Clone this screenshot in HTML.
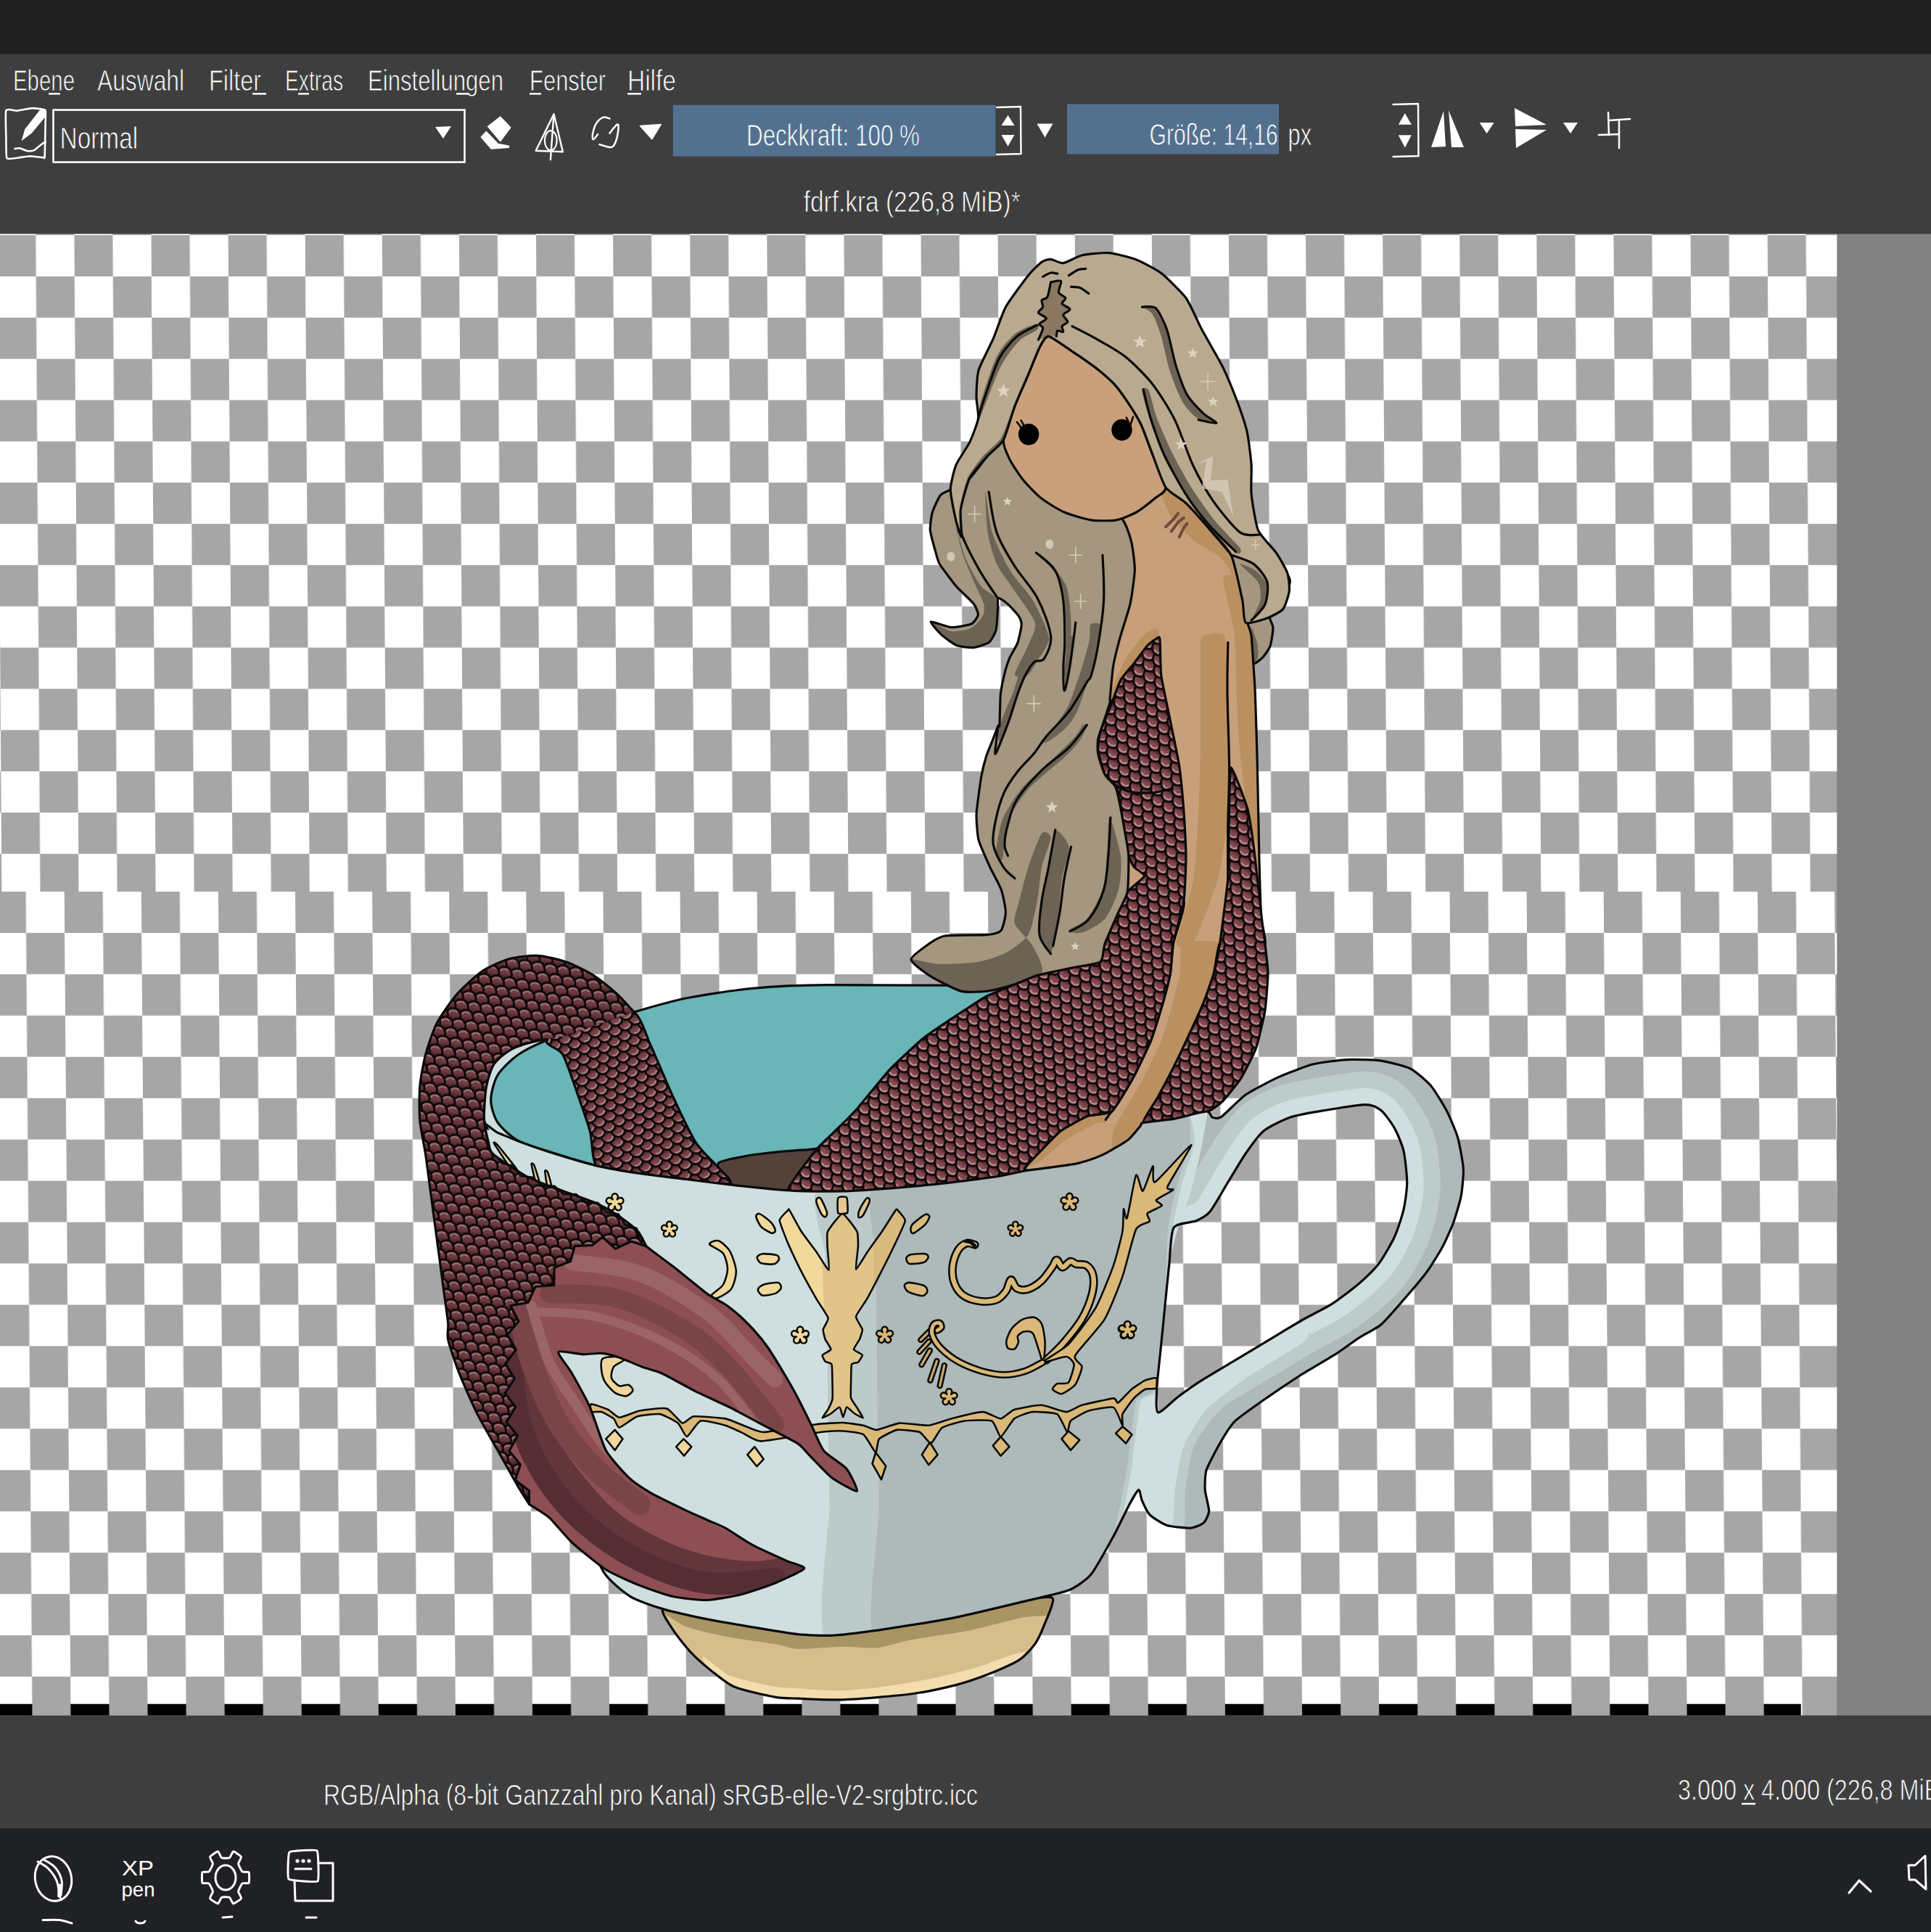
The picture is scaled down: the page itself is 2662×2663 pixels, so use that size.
<!DOCTYPE html>
<html><head><meta charset="utf-8"><title>Krita</title>
<style>html,body{margin:0;padding:0;background:#3e3e3e;overflow:hidden}body{width:2662px;height:2663px;font-family:"Liberation Sans", sans-serif}</style></head>
<body>
<svg width="2662" height="2663" viewBox="0 0 2662 2663" font-family='"Liberation Sans", sans-serif' style="display:block">
<defs>
<pattern id="ckA" patternUnits="userSpaceOnUse" width="106.1" height="113.7" patternTransform="matrix(1 0 0.0068 1 -3.7 324.1)">
<rect width="106.1" height="113.7" fill="#fff"/>
<rect width="53" height="56.9" fill="#a6a6a6"/>
<rect x="53" y="56.9" width="53" height="56.9" fill="#a6a6a6"/>
</pattern>
<pattern id="ckB" patternUnits="userSpaceOnUse" width="106.1" height="113.9" patternTransform="matrix(1 0 0.0078 1 88.7 1229)">
<rect width="106.1" height="113.9" fill="#fff"/>
<rect width="53" height="56.9" fill="#a6a6a6"/>
<rect x="53" y="56.9" width="53" height="56.9" fill="#a6a6a6"/>
</pattern>
<pattern id="ckC" patternUnits="userSpaceOnUse" width="106.1" height="113.9" patternTransform="matrix(1 0 0.0078 1 88.7 1229)">
<rect width="106.1" height="113.9" fill="#000"/>
<rect width="53" height="56.9" fill="#a6a6a6"/>
<rect x="53" y="56.9" width="53" height="56.9" fill="#a6a6a6"/>
</pattern>
</defs>
<defs>
<linearGradient id="scg" x1="0" y1="0" x2="0" y2="1"><stop offset="0" stop-color="#52292e"/><stop offset="0.38" stop-color="#613338"/><stop offset="0.58" stop-color="#8a4b51"/><stop offset="1" stop-color="#91525a"/></linearGradient>
<pattern id="sc0" patternUnits="userSpaceOnUse" width="13.6" height="20.4" patternTransform="rotate(30) scale(1.27)">
<rect width="13.6" height="20.4" fill="#4a2a2e"/>
<circle cx="-6.8" cy="30.6" r="8" fill="url(#scg)" stroke="#0b0506" stroke-width="2.3"/>
<path d="M-1.4 32.4 A5.7 5.7 0 0 1 -10.1 35.3" fill="none" stroke="#c4a0a0" stroke-width="1.7" stroke-linecap="round"/>
<circle cx="6.8" cy="30.6" r="8" fill="url(#scg)" stroke="#0b0506" stroke-width="2.3"/>
<path d="M12.2 32.4 A5.7 5.7 0 0 1 3.5 35.3" fill="none" stroke="#c4a0a0" stroke-width="1.7" stroke-linecap="round"/>
<circle cx="20.4" cy="30.6" r="8" fill="url(#scg)" stroke="#0b0506" stroke-width="2.3"/>
<path d="M25.8 32.4 A5.7 5.7 0 0 1 17.1 35.3" fill="none" stroke="#c4a0a0" stroke-width="1.7" stroke-linecap="round"/>
<circle cx="0" cy="20.4" r="8" fill="url(#scg)" stroke="#0b0506" stroke-width="2.3"/>
<path d="M5.4 22.2 A5.7 5.7 0 0 1 -3.3 25.1" fill="none" stroke="#c4a0a0" stroke-width="1.7" stroke-linecap="round"/>
<circle cx="13.6" cy="20.4" r="8" fill="url(#scg)" stroke="#0b0506" stroke-width="2.3"/>
<path d="M19 22.2 A5.7 5.7 0 0 1 10.3 25.1" fill="none" stroke="#c4a0a0" stroke-width="1.7" stroke-linecap="round"/>
<circle cx="-6.8" cy="10.2" r="8" fill="url(#scg)" stroke="#0b0506" stroke-width="2.3"/>
<path d="M-1.4 12 A5.7 5.7 0 0 1 -10.1 14.9" fill="none" stroke="#c4a0a0" stroke-width="1.7" stroke-linecap="round"/>
<circle cx="6.8" cy="10.2" r="8" fill="url(#scg)" stroke="#0b0506" stroke-width="2.3"/>
<path d="M12.2 12 A5.7 5.7 0 0 1 3.5 14.9" fill="none" stroke="#c4a0a0" stroke-width="1.7" stroke-linecap="round"/>
<circle cx="20.4" cy="10.2" r="8" fill="url(#scg)" stroke="#0b0506" stroke-width="2.3"/>
<path d="M25.8 12 A5.7 5.7 0 0 1 17.1 14.9" fill="none" stroke="#c4a0a0" stroke-width="1.7" stroke-linecap="round"/>
<circle cx="0" cy="0" r="8" fill="url(#scg)" stroke="#0b0506" stroke-width="2.3"/>
<path d="M5.4 1.8 A5.7 5.7 0 0 1 -3.3 4.7" fill="none" stroke="#c4a0a0" stroke-width="1.7" stroke-linecap="round"/>
<circle cx="13.6" cy="0" r="8" fill="url(#scg)" stroke="#0b0506" stroke-width="2.3"/>
<path d="M19 1.8 A5.7 5.7 0 0 1 10.3 4.7" fill="none" stroke="#c4a0a0" stroke-width="1.7" stroke-linecap="round"/>
<circle cx="-6.8" cy="-10.2" r="8" fill="url(#scg)" stroke="#0b0506" stroke-width="2.3"/>
<path d="M-1.4 -8.4 A5.7 5.7 0 0 1 -10.1 -5.5" fill="none" stroke="#c4a0a0" stroke-width="1.7" stroke-linecap="round"/>
<circle cx="6.8" cy="-10.2" r="8" fill="url(#scg)" stroke="#0b0506" stroke-width="2.3"/>
<path d="M12.2 -8.4 A5.7 5.7 0 0 1 3.5 -5.5" fill="none" stroke="#c4a0a0" stroke-width="1.7" stroke-linecap="round"/>
<circle cx="20.4" cy="-10.2" r="8" fill="url(#scg)" stroke="#0b0506" stroke-width="2.3"/>
<path d="M25.8 -8.4 A5.7 5.7 0 0 1 17.1 -5.5" fill="none" stroke="#c4a0a0" stroke-width="1.7" stroke-linecap="round"/>
<rect width="13.6" height="20.4" fill="#200c10" opacity="0.08"/>
</pattern>
<pattern id="sc1" patternUnits="userSpaceOnUse" width="13.6" height="20.4" patternTransform="rotate(-30) scale(1.2)">
<rect width="13.6" height="20.4" fill="#4a2a2e"/>
<circle cx="-6.8" cy="30.6" r="8" fill="url(#scg)" stroke="#0b0506" stroke-width="2.3"/>
<path d="M-1.4 32.4 A5.7 5.7 0 0 1 -10.1 35.3" fill="none" stroke="#c4a0a0" stroke-width="1.7" stroke-linecap="round"/>
<circle cx="6.8" cy="30.6" r="8" fill="url(#scg)" stroke="#0b0506" stroke-width="2.3"/>
<path d="M12.2 32.4 A5.7 5.7 0 0 1 3.5 35.3" fill="none" stroke="#c4a0a0" stroke-width="1.7" stroke-linecap="round"/>
<circle cx="20.4" cy="30.6" r="8" fill="url(#scg)" stroke="#0b0506" stroke-width="2.3"/>
<path d="M25.8 32.4 A5.7 5.7 0 0 1 17.1 35.3" fill="none" stroke="#c4a0a0" stroke-width="1.7" stroke-linecap="round"/>
<circle cx="0" cy="20.4" r="8" fill="url(#scg)" stroke="#0b0506" stroke-width="2.3"/>
<path d="M5.4 22.2 A5.7 5.7 0 0 1 -3.3 25.1" fill="none" stroke="#c4a0a0" stroke-width="1.7" stroke-linecap="round"/>
<circle cx="13.6" cy="20.4" r="8" fill="url(#scg)" stroke="#0b0506" stroke-width="2.3"/>
<path d="M19 22.2 A5.7 5.7 0 0 1 10.3 25.1" fill="none" stroke="#c4a0a0" stroke-width="1.7" stroke-linecap="round"/>
<circle cx="-6.8" cy="10.2" r="8" fill="url(#scg)" stroke="#0b0506" stroke-width="2.3"/>
<path d="M-1.4 12 A5.7 5.7 0 0 1 -10.1 14.9" fill="none" stroke="#c4a0a0" stroke-width="1.7" stroke-linecap="round"/>
<circle cx="6.8" cy="10.2" r="8" fill="url(#scg)" stroke="#0b0506" stroke-width="2.3"/>
<path d="M12.2 12 A5.7 5.7 0 0 1 3.5 14.9" fill="none" stroke="#c4a0a0" stroke-width="1.7" stroke-linecap="round"/>
<circle cx="20.4" cy="10.2" r="8" fill="url(#scg)" stroke="#0b0506" stroke-width="2.3"/>
<path d="M25.8 12 A5.7 5.7 0 0 1 17.1 14.9" fill="none" stroke="#c4a0a0" stroke-width="1.7" stroke-linecap="round"/>
<circle cx="0" cy="0" r="8" fill="url(#scg)" stroke="#0b0506" stroke-width="2.3"/>
<path d="M5.4 1.8 A5.7 5.7 0 0 1 -3.3 4.7" fill="none" stroke="#c4a0a0" stroke-width="1.7" stroke-linecap="round"/>
<circle cx="13.6" cy="0" r="8" fill="url(#scg)" stroke="#0b0506" stroke-width="2.3"/>
<path d="M19 1.8 A5.7 5.7 0 0 1 10.3 4.7" fill="none" stroke="#c4a0a0" stroke-width="1.7" stroke-linecap="round"/>
<circle cx="-6.8" cy="-10.2" r="8" fill="url(#scg)" stroke="#0b0506" stroke-width="2.3"/>
<path d="M-1.4 -8.4 A5.7 5.7 0 0 1 -10.1 -5.5" fill="none" stroke="#c4a0a0" stroke-width="1.7" stroke-linecap="round"/>
<circle cx="6.8" cy="-10.2" r="8" fill="url(#scg)" stroke="#0b0506" stroke-width="2.3"/>
<path d="M12.2 -8.4 A5.7 5.7 0 0 1 3.5 -5.5" fill="none" stroke="#c4a0a0" stroke-width="1.7" stroke-linecap="round"/>
<circle cx="20.4" cy="-10.2" r="8" fill="url(#scg)" stroke="#0b0506" stroke-width="2.3"/>
<path d="M25.8 -8.4 A5.7 5.7 0 0 1 17.1 -5.5" fill="none" stroke="#c4a0a0" stroke-width="1.7" stroke-linecap="round"/>
<rect width="13.6" height="20.4" fill="#200c10" opacity="0.14"/>
</pattern>
<pattern id="sc2" patternUnits="userSpaceOnUse" width="13.6" height="20.4" patternTransform="rotate(50) scale(1.0)">
<rect width="13.6" height="20.4" fill="#4a2a2e"/>
<circle cx="-6.8" cy="30.6" r="8" fill="url(#scg)" stroke="#0b0506" stroke-width="2.3"/>
<path d="M-1.4 32.4 A5.7 5.7 0 0 1 -10.1 35.3" fill="none" stroke="#c4a0a0" stroke-width="1.7" stroke-linecap="round"/>
<circle cx="6.8" cy="30.6" r="8" fill="url(#scg)" stroke="#0b0506" stroke-width="2.3"/>
<path d="M12.2 32.4 A5.7 5.7 0 0 1 3.5 35.3" fill="none" stroke="#c4a0a0" stroke-width="1.7" stroke-linecap="round"/>
<circle cx="20.4" cy="30.6" r="8" fill="url(#scg)" stroke="#0b0506" stroke-width="2.3"/>
<path d="M25.8 32.4 A5.7 5.7 0 0 1 17.1 35.3" fill="none" stroke="#c4a0a0" stroke-width="1.7" stroke-linecap="round"/>
<circle cx="0" cy="20.4" r="8" fill="url(#scg)" stroke="#0b0506" stroke-width="2.3"/>
<path d="M5.4 22.2 A5.7 5.7 0 0 1 -3.3 25.1" fill="none" stroke="#c4a0a0" stroke-width="1.7" stroke-linecap="round"/>
<circle cx="13.6" cy="20.4" r="8" fill="url(#scg)" stroke="#0b0506" stroke-width="2.3"/>
<path d="M19 22.2 A5.7 5.7 0 0 1 10.3 25.1" fill="none" stroke="#c4a0a0" stroke-width="1.7" stroke-linecap="round"/>
<circle cx="-6.8" cy="10.2" r="8" fill="url(#scg)" stroke="#0b0506" stroke-width="2.3"/>
<path d="M-1.4 12 A5.7 5.7 0 0 1 -10.1 14.9" fill="none" stroke="#c4a0a0" stroke-width="1.7" stroke-linecap="round"/>
<circle cx="6.8" cy="10.2" r="8" fill="url(#scg)" stroke="#0b0506" stroke-width="2.3"/>
<path d="M12.2 12 A5.7 5.7 0 0 1 3.5 14.9" fill="none" stroke="#c4a0a0" stroke-width="1.7" stroke-linecap="round"/>
<circle cx="20.4" cy="10.2" r="8" fill="url(#scg)" stroke="#0b0506" stroke-width="2.3"/>
<path d="M25.8 12 A5.7 5.7 0 0 1 17.1 14.9" fill="none" stroke="#c4a0a0" stroke-width="1.7" stroke-linecap="round"/>
<circle cx="0" cy="0" r="8" fill="url(#scg)" stroke="#0b0506" stroke-width="2.3"/>
<path d="M5.4 1.8 A5.7 5.7 0 0 1 -3.3 4.7" fill="none" stroke="#c4a0a0" stroke-width="1.7" stroke-linecap="round"/>
<circle cx="13.6" cy="0" r="8" fill="url(#scg)" stroke="#0b0506" stroke-width="2.3"/>
<path d="M19 1.8 A5.7 5.7 0 0 1 10.3 4.7" fill="none" stroke="#c4a0a0" stroke-width="1.7" stroke-linecap="round"/>
<circle cx="-6.8" cy="-10.2" r="8" fill="url(#scg)" stroke="#0b0506" stroke-width="2.3"/>
<path d="M-1.4 -8.4 A5.7 5.7 0 0 1 -10.1 -5.5" fill="none" stroke="#c4a0a0" stroke-width="1.7" stroke-linecap="round"/>
<circle cx="6.8" cy="-10.2" r="8" fill="url(#scg)" stroke="#0b0506" stroke-width="2.3"/>
<path d="M12.2 -8.4 A5.7 5.7 0 0 1 3.5 -5.5" fill="none" stroke="#c4a0a0" stroke-width="1.7" stroke-linecap="round"/>
<circle cx="20.4" cy="-10.2" r="8" fill="url(#scg)" stroke="#0b0506" stroke-width="2.3"/>
<path d="M25.8 -8.4 A5.7 5.7 0 0 1 17.1 -5.5" fill="none" stroke="#c4a0a0" stroke-width="1.7" stroke-linecap="round"/>
</pattern>
<pattern id="sc3" patternUnits="userSpaceOnUse" width="13.6" height="20.4" patternTransform="rotate(188) scale(1.3)">
<rect width="13.6" height="20.4" fill="#4a2a2e"/>
<circle cx="-6.8" cy="30.6" r="8" fill="url(#scg)" stroke="#0b0506" stroke-width="2.3"/>
<path d="M-1.4 32.4 A5.7 5.7 0 0 1 -10.1 35.3" fill="none" stroke="#c4a0a0" stroke-width="1.7" stroke-linecap="round"/>
<circle cx="6.8" cy="30.6" r="8" fill="url(#scg)" stroke="#0b0506" stroke-width="2.3"/>
<path d="M12.2 32.4 A5.7 5.7 0 0 1 3.5 35.3" fill="none" stroke="#c4a0a0" stroke-width="1.7" stroke-linecap="round"/>
<circle cx="20.4" cy="30.6" r="8" fill="url(#scg)" stroke="#0b0506" stroke-width="2.3"/>
<path d="M25.8 32.4 A5.7 5.7 0 0 1 17.1 35.3" fill="none" stroke="#c4a0a0" stroke-width="1.7" stroke-linecap="round"/>
<circle cx="0" cy="20.4" r="8" fill="url(#scg)" stroke="#0b0506" stroke-width="2.3"/>
<path d="M5.4 22.2 A5.7 5.7 0 0 1 -3.3 25.1" fill="none" stroke="#c4a0a0" stroke-width="1.7" stroke-linecap="round"/>
<circle cx="13.6" cy="20.4" r="8" fill="url(#scg)" stroke="#0b0506" stroke-width="2.3"/>
<path d="M19 22.2 A5.7 5.7 0 0 1 10.3 25.1" fill="none" stroke="#c4a0a0" stroke-width="1.7" stroke-linecap="round"/>
<circle cx="-6.8" cy="10.2" r="8" fill="url(#scg)" stroke="#0b0506" stroke-width="2.3"/>
<path d="M-1.4 12 A5.7 5.7 0 0 1 -10.1 14.9" fill="none" stroke="#c4a0a0" stroke-width="1.7" stroke-linecap="round"/>
<circle cx="6.8" cy="10.2" r="8" fill="url(#scg)" stroke="#0b0506" stroke-width="2.3"/>
<path d="M12.2 12 A5.7 5.7 0 0 1 3.5 14.9" fill="none" stroke="#c4a0a0" stroke-width="1.7" stroke-linecap="round"/>
<circle cx="20.4" cy="10.2" r="8" fill="url(#scg)" stroke="#0b0506" stroke-width="2.3"/>
<path d="M25.8 12 A5.7 5.7 0 0 1 17.1 14.9" fill="none" stroke="#c4a0a0" stroke-width="1.7" stroke-linecap="round"/>
<circle cx="0" cy="0" r="8" fill="url(#scg)" stroke="#0b0506" stroke-width="2.3"/>
<path d="M5.4 1.8 A5.7 5.7 0 0 1 -3.3 4.7" fill="none" stroke="#c4a0a0" stroke-width="1.7" stroke-linecap="round"/>
<circle cx="13.6" cy="0" r="8" fill="url(#scg)" stroke="#0b0506" stroke-width="2.3"/>
<path d="M19 1.8 A5.7 5.7 0 0 1 10.3 4.7" fill="none" stroke="#c4a0a0" stroke-width="1.7" stroke-linecap="round"/>
<circle cx="-6.8" cy="-10.2" r="8" fill="url(#scg)" stroke="#0b0506" stroke-width="2.3"/>
<path d="M-1.4 -8.4 A5.7 5.7 0 0 1 -10.1 -5.5" fill="none" stroke="#c4a0a0" stroke-width="1.7" stroke-linecap="round"/>
<circle cx="6.8" cy="-10.2" r="8" fill="url(#scg)" stroke="#0b0506" stroke-width="2.3"/>
<path d="M12.2 -8.4 A5.7 5.7 0 0 1 3.5 -5.5" fill="none" stroke="#c4a0a0" stroke-width="1.7" stroke-linecap="round"/>
<circle cx="20.4" cy="-10.2" r="8" fill="url(#scg)" stroke="#0b0506" stroke-width="2.3"/>
<path d="M25.8 -8.4 A5.7 5.7 0 0 1 17.1 -5.5" fill="none" stroke="#c4a0a0" stroke-width="1.7" stroke-linecap="round"/>
<rect width="13.6" height="20.4" fill="#200c10" opacity="0.28"/>
</pattern>
</defs>
<rect width="2662" height="2663" fill="#3e3e3e"/>
<rect width="2662" height="74.5" fill="#202020"/>
<rect x="0" y="322.4" width="2532.7" height="906.6" fill="url(#ckA)"/>
<rect x="0" y="1229" width="2532.7" height="1135.7" fill="url(#ckB)"/>
<rect x="0" y="2348.7" width="2482.7" height="16" fill="url(#ckC)"/>
<rect x="2532.7" y="322.4" width="129.3" height="2042.3" fill="#828282"/>
<path d="M738.9 1434.4 C725.2 1438.6 709.9 1442.7 701.6 1447.8 C693.3 1452.9 681.5 1464.4 676.7 1472.6 C672 1480.9 667.1 1500.4 665.8 1509.9 C664.6 1519.5 665.7 1536.2 667.4 1544.1 C669.1 1552 672.1 1563.2 678.3 1569 C684.5 1574.8 701 1583.1 714 1587.6 C727.1 1592.2 753.8 1598.6 776.1 1603.1 C798.5 1607.7 851.1 1617.2 881.8 1621.8 C912.4 1626.3 971.7 1634 1006.1 1637.3 C1040.5 1640.6 1115 1645.7 1140 1646.6 C1165 1647.6 1173.7 1646 1193.2 1644.7 C1212.7 1643.4 1261.6 1639.6 1286.4 1636.9 C1311.3 1634.2 1358.9 1627.6 1379.6 1624.5 C1400.4 1621.4 1425.2 1616.5 1441.8 1613.6 C1458.4 1610.7 1487.4 1608.3 1503.9 1602.7 C1520.5 1597.1 1555.3 1579.2 1566.1 1571.7 C1576.9 1564.1 1573.5 1560.9 1584.7 1545.9 C1596 1530.9 1652.1 1483.3 1650.5 1459.3 C1649 1435.3 1595.6 1379.3 1572.9 1366.1 C1550.1 1352.8 1504.5 1360.7 1479.6 1359.9 C1454.8 1359 1431.7 1360.2 1386.4 1359.9 C1341.1 1359.6 1186.6 1357.3 1140 1357.7 C1093.4 1358 1063.3 1359.9 1037.2 1362.3 C1011 1364.8 965.7 1372 943.9 1376.3 C922.2 1380.7 892.7 1389.6 874 1395 C855.4 1400.4 822.1 1411.5 804.1 1416.7 C786.1 1422 752.5 1430.3 738.9 1434.4 Z" fill="#cfdfdf"/>
<path d="M804.1 1416.7 C795.4 1419.1 752.5 1430.3 738.9 1434.4 C725.2 1438.6 709.9 1442.7 701.6 1447.8 C693.3 1452.9 681.5 1464.4 676.7 1472.6 C672 1480.9 667.1 1500.4 665.8 1509.9 C664.6 1519.5 665.7 1536.2 667.4 1544.1 C669.1 1552 676.8 1565.7 678.3 1569" fill="none" stroke="#0a0a0a" stroke-width="3.2" stroke-linejoin="round" stroke-linecap="round"/>
<path d="M757.5 1432.3 C744.2 1437.6 723.5 1447.4 714 1454 C704.5 1460.6 691 1473.7 686 1482 C681.1 1490.3 676.7 1507.4 676.7 1516.1 C676.7 1524.8 681.1 1539.8 686 1547.2 C691 1554.7 704.5 1566.7 714 1572.1 C723.5 1577.5 743.2 1583.1 757.5 1587.6 C771.8 1592.2 804.6 1602.3 821.2 1606.3 C837.8 1610.2 865.4 1614.6 881.8 1617.1 C898.2 1619.6 927.4 1622.8 943.9 1624.9 C960.5 1627 987.4 1630.6 1006.1 1632.7 C1024.7 1634.7 1065.9 1639.2 1083.8 1640.4 C1101.7 1641.7 1125.8 1641.9 1140.4 1641.9 C1155 1641.8 1173.7 1641.3 1193.2 1640 C1212.7 1638.7 1261.6 1634.9 1286.4 1632.3 C1311.3 1629.6 1358.9 1623.1 1379.6 1619.8 C1400.4 1616.5 1407.7 1632.9 1441.8 1607.4 C1475.8 1581.8 1621.7 1460.4 1635 1428.2 C1648.3 1396 1566.6 1375.2 1541.8 1366.1 C1516.9 1357 1502.1 1361 1448.6 1359.9 C1395 1358.7 1194.9 1357.3 1140 1357.7 C1085.1 1358 1063.3 1359.9 1037.2 1362.3 C1011 1364.8 965.7 1372 943.9 1376.3 C922.2 1380.7 891.4 1390 874 1395 C856.6 1399.9 829 1408.6 813.4 1413.6 C797.9 1418.6 770.8 1426.9 757.5 1432.3 Z" fill="#69b5b7" stroke="#0a0a0a" stroke-width="3.2" stroke-linejoin="round" stroke-linecap="round"/>
<path d="M990.1 1603.5 C992 1599.8 1017.8 1595.6 1024.3 1594.2 C1030.8 1592.8 1046.7 1590.5 1055.4 1589.5 C1064.1 1588.6 1103.2 1585.2 1111.3 1584.9 C1119.4 1584.6 1137.4 1580.4 1136.1 1586.4 C1134.9 1592.5 1111.9 1641 1098.9 1645.5 C1085.8 1650 1016.5 1635.7 1005.6 1631.5 C994.8 1627.3 988.2 1607.3 990.1 1603.5 Z" fill="#53413a" stroke="#0a0a0a" stroke-width="3.2" stroke-linejoin="round" stroke-linecap="round"/>
<path d="M754.4 1432.3 C748.6 1441.8 770.3 1443.2 776.1 1454 C781.9 1464.8 792.9 1499 797.9 1513 C802.9 1527.1 809.9 1546.8 813.4 1559.6 C817 1572.5 815.2 1601.5 824.3 1609.4 C833.4 1617.2 865.8 1616.4 881.8 1618.7 C897.7 1621 927.4 1624.8 943.9 1626.5 C960.5 1628.1 1000.3 1633.8 1006.1 1631.1 C1011.9 1628.4 993.7 1613.7 987.4 1606.3 C981.2 1598.8 967.3 1587.6 959.5 1575.2 C951.6 1562.8 936.7 1530.9 928.4 1513 C920.1 1495.2 904.6 1457.3 897.3 1441.6 C890.1 1425.8 884.4 1402.8 874 1395 C863.7 1387.1 835.6 1377.6 819.6 1382.5 C803.7 1387.5 760.2 1422.7 754.4 1432.3 Z" fill="url(#sc1)" stroke="#0a0a0a" stroke-width="3.2" stroke-linejoin="round" stroke-linecap="round"/>
<path d="M1714.8 800 C1713.8 807 1716.9 848.1 1717.4 854.3 C1717.9 860.6 1719.2 859.8 1720 862.1 C1720.8 864.4 1724.4 872.5 1725.2 877.6 C1725.9 882.8 1726.2 911 1727.7 913.9 C1729.3 916.7 1738.4 908.4 1740.7 906.1 C1743 903.8 1749.6 894.7 1751 890.6 C1752.5 886.4 1755.2 869.4 1754.9 864.7 C1754.7 860 1747 847.9 1748.4 844 C1749.9 840.1 1766.2 830.3 1769.2 825.9 C1772.1 821.5 1779.2 804.7 1778.2 800 C1777.2 795.3 1763.8 780.8 1758.8 779.3 C1753.8 777.7 1732.1 782.4 1727.7 784.5 C1723.3 786.5 1715.8 793 1714.8 800 Z" fill="#a4967f" stroke="#0a0a0a" stroke-width="3.2" stroke-linejoin="round" stroke-linecap="round"/>
<path d="M1748.4 844 C1753.4 841 1766.2 830.3 1769.2 825.9 C1772.1 821.5 1778.2 804.1 1778.2 800 C1778.2 795.9 1771.1 784.5 1769.2 784.5 C1767.2 784.5 1760.9 795.9 1758.8 800 C1756.7 804.1 1751 821.5 1748.4 825.9 C1745.9 830.3 1735.8 841 1732.9 844 C1730.1 847 1718.4 855.6 1720 855.6 C1721.5 855.6 1743.5 847 1748.4 844 Z" fill="#b9a98e" stroke="#0a0a0a" stroke-width="3.2" stroke-linejoin="round" stroke-linecap="round"/>
<path d="M1740.7 797.4 C1741.7 797.8 1746.8 806.2 1747.2 810.4 C1747.5 814.5 1745.2 824.2 1743.3 828.5 C1741.4 832.8 1733.3 843.4 1732.9 842.7 C1732.6 842 1739.8 828 1740.7 823.3 C1741.5 818.6 1739.4 811.2 1739.4 807.8 C1739.4 804.3 1739.6 797.1 1740.7 797.4 Z" fill="#6d6354"/>
<path d="M1725.2 864.7 C1724.5 865 1727.2 881.8 1727.7 888 C1728.3 894.2 1728.2 908.9 1729 911.3 C1729.9 913.7 1733.7 909.6 1734.2 906.1 C1734.7 902.7 1734.1 890.9 1732.9 885.4 C1731.7 879.9 1725.8 864.4 1725.2 864.7 Z" fill="#6d6354"/>
<clipPath id="cskin"><path d="M1541.8 715.3 C1540 718.4 1544.4 737.8 1544.9 743.3 C1545.4 748.7 1547.9 773.6 1548 780.5 C1548.1 787.5 1547.2 819.4 1546.5 827.2 C1545.7 834.9 1540.4 867 1538.7 873.8 C1537 880.5 1527.9 905.8 1526.3 907.9 C1524.6 910.1 1519.4 898.1 1518.5 900 C1517.6 901.9 1515.5 925.1 1515.4 931.1 C1515.3 937 1517.3 966.5 1516.9 971.5 C1516.5 976.4 1511.5 986.2 1510.7 990.1 C1509.9 994 1507.9 1013.9 1507.6 1018.1 C1507.4 1022.2 1506.8 1035.7 1507.6 1039.8 C1508.4 1044 1514.6 1062.9 1516.9 1067.8 C1519.3 1072.7 1532.7 1092.1 1535.6 1098.9 C1538.4 1105.6 1549.4 1141.8 1551.1 1148.6 C1552.8 1155.3 1555.5 1172.9 1555.8 1179.6 C1556 1186.4 1552.8 1224.7 1554.2 1229.4 C1555.6 1234 1566.4 1234.5 1572.9 1235.6 C1579.3 1236.6 1628.2 1236.4 1631.9 1241.8 C1635.6 1247.2 1619 1291.7 1617.5 1300 C1616 1308.3 1614.6 1334.5 1613.4 1341.4 C1612.2 1348.3 1605.2 1375.1 1603 1382.9 C1600.8 1390.6 1589.9 1426 1586.4 1434.6 C1583 1443.3 1566.1 1478.3 1561.6 1486.4 C1557.1 1494.5 1537.8 1527.7 1532.6 1532 C1527.4 1536.3 1505.3 1536 1499.4 1538.2 C1493.6 1540.5 1467.8 1554.6 1462.1 1558.9 C1456.4 1563.2 1435.2 1585.7 1431.1 1590 C1426.9 1594.3 1413.3 1608.2 1412.4 1610.7 C1411.6 1613.2 1414.8 1619.8 1420.7 1620 C1426.6 1620.3 1474.2 1615.6 1482.9 1613.8 C1491.5 1612.1 1518.2 1602.1 1524.3 1599.3 C1530.3 1596.6 1551 1584 1555.4 1580.7 C1559.7 1577.3 1574.2 1561.6 1576.1 1558.9 C1578 1556.3 1576.4 1552.5 1578.1 1548.6 C1579.9 1544.6 1593.5 1517.7 1596.8 1511.3 C1600.1 1504.9 1614.1 1478.8 1617.5 1471.9 C1621 1465 1634.8 1435.9 1638.2 1428.4 C1641.7 1421 1656 1390.1 1658.9 1382.9 C1661.9 1375.6 1671.5 1348.3 1673.4 1341.4 C1675.3 1334.5 1678.6 1303.1 1681.7 1300 C1684.8 1296.9 1705.5 1304.1 1710.7 1304.1 C1715.9 1304.1 1741.5 1303.2 1743.9 1300 C1746.2 1296.8 1739.3 1275.2 1738.6 1265.8 C1738 1256.5 1736.5 1205.5 1736 1188.2 C1735.6 1170.9 1733.9 1078.2 1733.4 1058.8 C1733 1039.4 1731 970.4 1730.3 955.3 C1729.6 940.2 1726 885.6 1725.2 877.6 C1724.3 869.7 1720.6 861.5 1720 859.5 C1719.3 857.6 1717.8 859.3 1717.4 854.3 C1717 849.4 1716.5 807.4 1714.8 800 C1713.1 792.6 1701.2 771 1697.2 765 C1693.1 759 1671.3 734.2 1666.1 727.7 C1660.9 721.2 1639.9 692 1635 687.3 C1630.1 682.7 1610.7 671.8 1607 671.8 C1603.4 671.8 1594.9 684.5 1591.5 687.3 C1588.1 690.2 1570.8 703.6 1566.6 706 C1562.5 708.3 1543.6 712.2 1541.8 715.3 Z"/></clipPath>
<path d="M1541.8 715.3 C1540 718.4 1544.4 737.8 1544.9 743.3 C1545.4 748.7 1547.9 773.6 1548 780.5 C1548.1 787.5 1547.2 819.4 1546.5 827.2 C1545.7 834.9 1540.4 867 1538.7 873.8 C1537 880.5 1527.9 905.8 1526.3 907.9 C1524.6 910.1 1519.4 898.1 1518.5 900 C1517.6 901.9 1515.5 925.1 1515.4 931.1 C1515.3 937 1517.3 966.5 1516.9 971.5 C1516.5 976.4 1511.5 986.2 1510.7 990.1 C1509.9 994 1507.9 1013.9 1507.6 1018.1 C1507.4 1022.2 1506.8 1035.7 1507.6 1039.8 C1508.4 1044 1514.6 1062.9 1516.9 1067.8 C1519.3 1072.7 1532.7 1092.1 1535.6 1098.9 C1538.4 1105.6 1549.4 1141.8 1551.1 1148.6 C1552.8 1155.3 1555.5 1172.9 1555.8 1179.6 C1556 1186.4 1552.8 1224.7 1554.2 1229.4 C1555.6 1234 1566.4 1234.5 1572.9 1235.6 C1579.3 1236.6 1628.2 1236.4 1631.9 1241.8 C1635.6 1247.2 1619 1291.7 1617.5 1300 C1616 1308.3 1614.6 1334.5 1613.4 1341.4 C1612.2 1348.3 1605.2 1375.1 1603 1382.9 C1600.8 1390.6 1589.9 1426 1586.4 1434.6 C1583 1443.3 1566.1 1478.3 1561.6 1486.4 C1557.1 1494.5 1537.8 1527.7 1532.6 1532 C1527.4 1536.3 1505.3 1536 1499.4 1538.2 C1493.6 1540.5 1467.8 1554.6 1462.1 1558.9 C1456.4 1563.2 1435.2 1585.7 1431.1 1590 C1426.9 1594.3 1413.3 1608.2 1412.4 1610.7 C1411.6 1613.2 1414.8 1619.8 1420.7 1620 C1426.6 1620.3 1474.2 1615.6 1482.9 1613.8 C1491.5 1612.1 1518.2 1602.1 1524.3 1599.3 C1530.3 1596.6 1551 1584 1555.4 1580.7 C1559.7 1577.3 1574.2 1561.6 1576.1 1558.9 C1578 1556.3 1576.4 1552.5 1578.1 1548.6 C1579.9 1544.6 1593.5 1517.7 1596.8 1511.3 C1600.1 1504.9 1614.1 1478.8 1617.5 1471.9 C1621 1465 1634.8 1435.9 1638.2 1428.4 C1641.7 1421 1656 1390.1 1658.9 1382.9 C1661.9 1375.6 1671.5 1348.3 1673.4 1341.4 C1675.3 1334.5 1678.6 1303.1 1681.7 1300 C1684.8 1296.9 1705.5 1304.1 1710.7 1304.1 C1715.9 1304.1 1741.5 1303.2 1743.9 1300 C1746.2 1296.8 1739.3 1275.2 1738.6 1265.8 C1738 1256.5 1736.5 1205.5 1736 1188.2 C1735.6 1170.9 1733.9 1078.2 1733.4 1058.8 C1733 1039.4 1731 970.4 1730.3 955.3 C1729.6 940.2 1726 885.6 1725.2 877.6 C1724.3 869.7 1720.6 861.5 1720 859.5 C1719.3 857.6 1717.8 859.3 1717.4 854.3 C1717 849.4 1716.5 807.4 1714.8 800 C1713.1 792.6 1701.2 771 1697.2 765 C1693.1 759 1671.3 734.2 1666.1 727.7 C1660.9 721.2 1639.9 692 1635 687.3 C1630.1 682.7 1610.7 671.8 1607 671.8 C1603.4 671.8 1594.9 684.5 1591.5 687.3 C1588.1 690.2 1570.8 703.6 1566.6 706 C1562.5 708.3 1543.6 712.2 1541.8 715.3 Z" fill="#c79f7a"/>
<g clip-path="url(#cskin)">
<path d="M1655.3 885.4 C1656.3 872.2 1662.3 875.8 1665.6 875.1 C1669 874.3 1686.2 869.6 1688.9 877.6 C1691.6 885.7 1692.2 937.2 1692.8 955.3 C1693.5 973.4 1695.5 1040.7 1695.4 1058.8 C1695.3 1076.9 1693.2 1120.9 1691.5 1136.4 C1689.8 1152 1683.2 1197.7 1678.6 1214.1 C1673.9 1230.4 1650.6 1291.2 1644.9 1299.7 C1639.2 1308.3 1621.6 1308.3 1621.6 1299.7 C1621.6 1291.2 1641.8 1233 1644.9 1214.1 C1648 1195.2 1651.7 1131.3 1652.7 1110.6 C1653.7 1089.9 1655 1029.6 1655.3 1007 C1655.5 984.5 1654.2 898.6 1655.3 885.4 Z" fill="#bb9060"/>
<path d="M1686.3 794.8 C1687.9 791.7 1704.2 791.7 1707 794.8 C1709.9 797.9 1713.5 819.2 1714.8 825.9 C1716.1 832.6 1718.7 853.1 1720 862.1 C1721.3 871.2 1726.4 899.4 1727.7 916.5 C1729 933.5 1732.1 1008.3 1732.9 1032.9 C1733.7 1057.5 1736.5 1152 1735.5 1162.3 C1734.5 1172.7 1724.6 1144.2 1722.6 1136.4 C1720.5 1128.7 1716.4 1097.6 1714.8 1084.7 C1713.3 1071.7 1708.3 1027.7 1707 1007 C1705.7 986.3 1703.4 895.8 1701.9 877.6 C1700.3 859.5 1693.1 834.2 1691.5 825.9 C1690 817.6 1684.8 797.9 1686.3 794.8 Z" fill="#bb9060"/>
<path d="M1593.2 866 C1590.4 865.6 1583.2 869.4 1577.6 875.1 C1572.1 880.7 1558 898 1551.8 908.7 C1545.5 919.4 1534.2 947 1531.1 955.3 C1528 963.6 1527.8 970.8 1528.5 970.8 C1529.2 970.8 1532.1 961.8 1536.2 955.3 C1540.4 948.7 1553.3 930.6 1559.5 921.6 C1565.7 912.7 1577.6 893.9 1582.8 888 C1588 882.1 1597 880.6 1598.3 877.6 C1599.7 874.7 1595.9 866.3 1593.2 866 Z" fill="#bb9060"/>
<path d="M1600.8 681.1 C1601.5 685.8 1611.7 708.8 1616.4 715.3 C1621 721.8 1641.2 741.4 1647.4 746.4 C1653.7 751.3 1673.5 760.7 1678.5 765 C1683.5 769.4 1694 780.5 1697.2 789.9 C1700.3 799.2 1706.5 844.2 1709.6 858.2 C1712.7 872.2 1725.1 922.8 1728.2 930 C1731.3 937.2 1740.7 937.2 1740.7 930 C1740.7 922.8 1730.7 871.6 1728.2 858.2 C1725.7 844.8 1718.3 806 1715.8 796.1 C1713.3 786.1 1708.3 765.9 1703.4 758.8 C1698.4 751.6 1672.9 731.8 1666.1 724.6 C1659.2 717.5 1640.6 692.9 1635 687.3 C1629.4 681.7 1613.6 669.3 1610.2 668.7 C1606.7 668.1 1600.2 676.5 1600.8 681.1 Z" fill="#bb9060"/>
<path d="M1631 1300 C1636.5 1295.9 1677.5 1295.9 1681.7 1300 C1686 1304.1 1675.7 1333.1 1673.4 1341.4 C1671.2 1349.7 1662.5 1374.2 1658.9 1382.9 C1655.4 1391.6 1642.4 1419.5 1638.2 1428.4 C1634.1 1437.3 1621.6 1463.6 1617.5 1471.9 C1613.4 1480.2 1600.9 1503.8 1596.8 1511.3 C1592.6 1518.7 1580 1540.3 1576.1 1546.5 C1572.1 1552.7 1561.6 1568.7 1557.4 1573.4 C1553.3 1578.2 1537.1 1592.5 1534.6 1594.1 C1532.2 1595.8 1532.6 1593.5 1532.6 1590 C1532.6 1586.5 1533 1564.7 1534.6 1558.9 C1536.3 1553.1 1545 1539.3 1549.1 1532 C1553.3 1524.8 1570.9 1496.2 1576.1 1486.4 C1581.3 1476.7 1596.9 1445 1600.9 1434.6 C1605 1424.3 1613.9 1392.2 1616.5 1382.9 C1619.1 1373.5 1625.4 1349.7 1626.8 1341.4 C1628.3 1333.1 1625.5 1304.1 1631 1300 Z" fill="#bb9060"/>
<path d="M1524.3 1532 C1521.8 1531.2 1505.6 1535.5 1499.4 1538.2 C1493.2 1540.9 1469 1553.8 1462.1 1558.9 C1455.3 1564.1 1436 1584.8 1431.1 1590 C1426.1 1595.2 1411.8 1609.9 1412.4 1610.7 C1413.1 1611.5 1431.7 1602.2 1437.3 1598.3 C1442.9 1594.4 1460.9 1576.3 1468.4 1571.4 C1475.8 1566.4 1506.3 1551.1 1511.9 1548.6 C1517.5 1546.1 1523 1548.2 1524.3 1546.5 C1525.5 1544.8 1526.8 1532.8 1524.3 1532 Z" fill="#bb9060"/>
</g>
<path d="M1541.8 715.3 C1540 718.4 1544.4 737.8 1544.9 743.3 C1545.4 748.7 1547.9 773.6 1548 780.5 C1548.1 787.5 1547.2 819.4 1546.5 827.2 C1545.7 834.9 1540.4 867 1538.7 873.8 C1537 880.5 1527.9 905.8 1526.3 907.9 C1524.6 910.1 1519.4 898.1 1518.5 900 C1517.6 901.9 1515.5 925.1 1515.4 931.1 C1515.3 937 1517.3 966.5 1516.9 971.5 C1516.5 976.4 1511.5 986.2 1510.7 990.1 C1509.9 994 1507.9 1013.9 1507.6 1018.1 C1507.4 1022.2 1506.8 1035.7 1507.6 1039.8 C1508.4 1044 1514.6 1062.9 1516.9 1067.8 C1519.3 1072.7 1532.7 1092.1 1535.6 1098.9 C1538.4 1105.6 1549.4 1141.8 1551.1 1148.6 C1552.8 1155.3 1555.5 1172.9 1555.8 1179.6 C1556 1186.4 1552.8 1224.7 1554.2 1229.4 C1555.6 1234 1566.4 1234.5 1572.9 1235.6 C1579.3 1236.6 1628.2 1236.4 1631.9 1241.8 C1635.6 1247.2 1619 1291.7 1617.5 1300 C1616 1308.3 1614.6 1334.5 1613.4 1341.4 C1612.2 1348.3 1605.2 1375.1 1603 1382.9 C1600.8 1390.6 1589.9 1426 1586.4 1434.6 C1583 1443.3 1566.1 1478.3 1561.6 1486.4 C1557.1 1494.5 1537.8 1527.7 1532.6 1532 C1527.4 1536.3 1505.3 1536 1499.4 1538.2 C1493.6 1540.5 1467.8 1554.6 1462.1 1558.9 C1456.4 1563.2 1435.2 1585.7 1431.1 1590 C1426.9 1594.3 1413.3 1608.2 1412.4 1610.7 C1411.6 1613.2 1414.8 1619.8 1420.7 1620 C1426.6 1620.3 1474.2 1615.6 1482.9 1613.8 C1491.5 1612.1 1518.2 1602.1 1524.3 1599.3 C1530.3 1596.6 1551 1584 1555.4 1580.7 C1559.7 1577.3 1574.2 1561.6 1576.1 1558.9 C1578 1556.3 1576.4 1552.5 1578.1 1548.6 C1579.9 1544.6 1593.5 1517.7 1596.8 1511.3 C1600.1 1504.9 1614.1 1478.8 1617.5 1471.9 C1621 1465 1634.8 1435.9 1638.2 1428.4 C1641.7 1421 1656 1390.1 1658.9 1382.9 C1661.9 1375.6 1671.5 1348.3 1673.4 1341.4 C1675.3 1334.5 1678.6 1303.1 1681.7 1300 C1684.8 1296.9 1705.5 1304.1 1710.7 1304.1 C1715.9 1304.1 1741.5 1303.2 1743.9 1300 C1746.2 1296.8 1739.3 1275.2 1738.6 1265.8 C1738 1256.5 1736.5 1205.5 1736 1188.2 C1735.6 1170.9 1733.9 1078.2 1733.4 1058.8 C1733 1039.4 1731 970.4 1730.3 955.3 C1729.6 940.2 1726 885.6 1725.2 877.6 C1724.3 869.7 1720.6 861.5 1720 859.5 C1719.3 857.6 1717.8 859.3 1717.4 854.3 C1717 849.4 1716.5 807.4 1714.8 800 C1713.1 792.6 1701.2 771 1697.2 765 C1693.1 759 1671.3 734.2 1666.1 727.7 C1660.9 721.2 1639.9 692 1635 687.3 C1630.1 682.7 1610.7 671.8 1607 671.8 C1603.4 671.8 1594.9 684.5 1591.5 687.3 C1588.1 690.2 1570.8 703.6 1566.6 706 C1562.5 708.3 1543.6 712.2 1541.8 715.3 Z" fill="none" stroke="#0a0a0a" stroke-width="3.2" stroke-linejoin="round" stroke-linecap="round"/>
<path d="M1692.8 885.4 C1692.7 897 1691.7 926.4 1692 955.3 C1692.3 984.2 1694.5 1028.6 1694.6 1058.8 C1694.7 1089 1693.1 1111.1 1692.8 1136.4 C1692.5 1161.8 1692.8 1198.3 1692.8 1210.7" fill="none" stroke="#0a0a0a" stroke-width="3.2" stroke-linejoin="round" stroke-linecap="round"/>
<path d="M1532.6 1532 C1531.5 1533.4 1527.7 1538.4 1526.4 1540.3 C1525 1542.2 1524.6 1542.9 1524.3 1543.4" fill="none" stroke="#0a0a0a" stroke-width="3.2" stroke-linejoin="round" stroke-linecap="round"/>
<path d="M1597.7 878.4 C1596.3 878.6 1585 886.3 1582.2 889.3 C1579.3 892.3 1566.6 910.2 1563.5 914.2 C1560.4 918.2 1547.7 932 1544.9 937.3 C1542.1 942.6 1531.7 971.7 1529.4 977.7 C1527 983.6 1518.2 1004.1 1516.9 1008.8 C1515.6 1013.4 1513.3 1028.7 1513.8 1033.6 C1514.3 1038.5 1521.1 1063.6 1523.1 1067.8 C1525.2 1071.9 1537.1 1080.7 1538.7 1083.3 C1540.2 1085.9 1540.8 1093.4 1541.8 1098.9 C1542.8 1104.3 1549.9 1141.8 1551.1 1148.6 C1552.3 1155.3 1554.7 1175.8 1555.8 1179.6 C1556.8 1183.5 1561.7 1192.9 1563.5 1195.2 C1565.4 1197.5 1578.3 1204.8 1577.5 1207.6 C1576.7 1210.5 1557.2 1225.2 1554.2 1229.4 C1551.2 1233.5 1544.4 1251.4 1541.8 1257.3 C1539.2 1263.3 1525.2 1295.1 1523.1 1300.8 C1521.1 1306.5 1520.6 1323 1516.9 1325.7 C1513.3 1328.4 1486.9 1331.9 1479.6 1333.5 C1472.4 1335 1436.7 1342.4 1429.9 1344.3 C1423.2 1346.3 1404.6 1354.4 1398.9 1356.8 C1393.2 1359.1 1366.8 1369.7 1361.6 1372.3 C1356.4 1374.9 1340.7 1385.3 1336.7 1387.8 C1332.7 1390.4 1318.6 1399.5 1313.3 1403.1 C1307.9 1406.7 1280.1 1425.1 1272.9 1431.1 C1265.6 1437 1234 1466.3 1226.3 1474.6 C1218.5 1482.9 1186.1 1523.3 1179.6 1530.5 C1173.2 1537.8 1153.2 1556.9 1148.6 1561.6 C1143.9 1566.2 1128.9 1579.8 1123.7 1586.4 C1118.5 1593 1085 1635.9 1086.4 1640.8 C1087.8 1645.7 1131.5 1645.4 1140.4 1645.6 C1149.3 1645.9 1181 1644.6 1193.2 1643.7 C1205.4 1642.9 1270.9 1637.7 1286.4 1636 C1302 1634.3 1368.8 1625.4 1379.6 1623.6 C1390.5 1621.7 1414.2 1615.3 1416.9 1614.2 C1419.7 1613.2 1411.3 1612.7 1412.4 1610.7 C1413.6 1608.7 1426.9 1594.3 1431.1 1590 C1435.2 1585.7 1456.4 1563.2 1462.1 1558.9 C1467.8 1554.6 1493.6 1540.5 1499.4 1538.2 C1505.3 1536 1527.4 1536.3 1532.6 1532 C1537.8 1527.7 1557.1 1494.5 1561.6 1486.4 C1566.1 1478.3 1583 1443.3 1586.4 1434.6 C1589.9 1426 1600.8 1390.6 1603 1382.9 C1605.2 1375.1 1612.2 1348.3 1613.4 1341.4 C1614.6 1334.5 1616 1308.3 1617.5 1300 C1619 1291.7 1630.4 1251.8 1631.9 1241.8 C1633.4 1231.8 1635 1190 1635 1179.6 C1635 1169.3 1632.7 1127.9 1631.9 1117.5 C1631.1 1107.1 1627.2 1065.7 1625.7 1055.4 C1624.1 1045 1615.3 1003.6 1613.3 993.2 C1611.2 982.9 1602 939.9 1600.8 931.1 C1599.7 922.3 1599.5 892 1599.3 887.6 C1599 883.2 1599.1 878.3 1597.7 878.4 Z" fill="url(#sc0)" stroke="#0a0a0a" stroke-width="3.2" stroke-linejoin="round" stroke-linecap="round"/>
<path d="M1538.7 1083.3 C1541.8 1084.6 1549 1089.5 1557.3 1091.1 C1565.6 1092.6 1578.6 1093.4 1588.4 1092.6 C1598.2 1091.9 1611.7 1087.5 1616.4 1086.4" fill="none" stroke="#0a0a0a" stroke-width="3.2" stroke-linejoin="round" stroke-linecap="round"/>
<path d="M1696.2 1058.8 C1695.1 1063.5 1694.4 1123.8 1694.1 1136.4 C1693.8 1149.1 1693.8 1197.1 1692.8 1210.7 C1691.8 1224.3 1683.3 1289.1 1681.7 1300 C1680.1 1310.9 1675.3 1334.5 1673.4 1341.4 C1671.5 1348.3 1661.9 1375.6 1658.9 1382.9 C1656 1390.1 1641.7 1421 1638.2 1428.4 C1634.8 1435.9 1621 1465 1617.5 1471.9 C1614.1 1478.8 1600.2 1505 1596.8 1511.3 C1593.3 1517.6 1574.3 1545 1576.1 1547.5 C1577.8 1550.1 1610.1 1543.7 1617.5 1542.4 C1624.9 1541.1 1659.5 1534.1 1665.1 1532 C1670.8 1529.9 1682.1 1521.3 1685.9 1517.5 C1689.7 1513.7 1706.9 1492.5 1710.7 1486.4 C1714.5 1480.4 1728.7 1452.8 1731.4 1445 C1734.2 1437.2 1742.5 1401.8 1743.9 1393.2 C1745.2 1384.6 1748 1349.2 1748 1341.4 C1748 1333.7 1744.6 1306.3 1743.9 1300 C1743.1 1293.7 1740.2 1273 1739.4 1265.8 C1738.5 1258.7 1734.7 1222.7 1733.7 1214.1 C1732.7 1205.5 1728.9 1170.5 1727.7 1162.3 C1726.6 1154.1 1721.7 1122.6 1720 1115.7 C1718.3 1108.8 1709 1084.2 1707 1079.5 C1705.1 1074.8 1697.2 1054.1 1696.2 1058.8 Z" fill="url(#sc0)" stroke="#0a0a0a" stroke-width="3.2" stroke-linejoin="round" stroke-linecap="round"/>
<clipPath id="cuh"><path d="M1383.3 606.5 C1374.6 608.4 1366.2 623 1361.6 628.3 C1356.9 633.6 1341.8 654.7 1336.7 659.4 C1331.6 664 1314.3 672.6 1310.3 674.9 C1306.3 677.2 1298.8 679.6 1296.3 682.7 C1293.8 685.8 1286.8 701.2 1285.4 706 C1284 710.8 1281.9 725.2 1282.3 730.8 C1282.8 736.4 1288.8 757.2 1290.1 761.9 C1291.4 766.6 1292.7 773 1295.5 777.7 C1298.4 782.4 1314.2 803.3 1318.8 808.8 C1323.5 814.2 1339.2 828.2 1342.1 832.1 C1345.1 835.9 1348.7 844.8 1348.4 847.6 C1348 850.4 1342.8 858.3 1339 860 C1335.3 861.7 1316.7 865 1311.1 864.7 C1305.5 864.4 1284.4 855.8 1283.1 856.9 C1281.9 858 1295.1 872.3 1298.6 875.6 C1302.2 878.8 1314.5 887.8 1318.8 889.5 C1323.2 891.2 1337.6 893.1 1342.1 892.6 C1346.6 892.2 1360.8 887.4 1363.9 884.9 C1367 882.4 1372.1 872.3 1373.2 867.8 C1374.4 863.3 1375.2 844.2 1375.5 839.8 C1375.9 835.5 1375 825.1 1376.3 824.3 C1377.6 823.5 1386 829.6 1388.8 832.1 C1391.5 834.5 1402.3 846.2 1404.3 849.1 C1406.2 852.1 1408.3 857.8 1408.2 861.6 C1408 865.3 1404.4 881.9 1402.7 886.4 C1401.1 890.9 1393.6 902.7 1391.9 906.6 C1390.2 910.5 1386.9 920.3 1385.6 925.3 C1384.4 930.2 1380.2 948.9 1379.4 956.3 C1378.7 963.8 1378.2 995.6 1377.9 1000 C1377.5 1004.4 1377 998.2 1376 1000.4 C1374.9 1002.6 1369.2 1018.3 1367.5 1022.4 C1365.9 1026.6 1361.2 1037.3 1359.8 1041.8 C1358.4 1046.4 1354.3 1062.5 1353.3 1067.7 C1352.3 1072.9 1350.1 1088 1349.4 1093.6 C1348.7 1099.2 1346.1 1117.3 1346 1123.7 C1346 1130.1 1347.3 1150.8 1349.1 1157.9 C1351 1165 1361.6 1188.3 1364.7 1195.2 C1367.8 1202 1378 1220 1380.2 1226.3 C1382.4 1232.5 1386.4 1251.7 1386.4 1257.3 C1386.4 1262.9 1382.7 1279.1 1380.2 1282.2 C1377.7 1285.3 1369.3 1287.6 1361.6 1288.4 C1353.8 1289.2 1310.6 1288.7 1302.5 1290 C1294.5 1291.2 1285.4 1297.6 1280.8 1300.8 C1276.1 1304.1 1255.9 1318.2 1255.9 1322.6 C1255.9 1326.9 1274 1340 1280.8 1344.3 C1287.6 1348.7 1316.2 1363.9 1324.3 1366.1 C1332.4 1368.3 1354.1 1367 1361.6 1366.1 C1369 1365.1 1392 1358.9 1398.9 1356.8 C1405.7 1354.6 1421.9 1346.7 1429.9 1344.3 C1438 1342 1470.9 1335.3 1479.6 1333.5 C1488.3 1331.6 1512.6 1328.9 1516.9 1325.7 C1521.3 1322.4 1520.7 1307.7 1523.1 1300.8 C1525.6 1294 1538.7 1264.5 1541.8 1257.3 C1544.9 1250.2 1552.8 1237.1 1554.2 1229.4 C1555.6 1221.6 1556.1 1187.7 1555.8 1179.6 C1555.5 1171.6 1552.5 1156.7 1551.1 1148.6 C1549.7 1140.5 1543.2 1105.4 1541.8 1098.9 C1540.4 1092.3 1539 1086.4 1537.1 1083.3 C1535.3 1080.2 1525.5 1072.1 1523.1 1067.8 C1520.8 1063.4 1514.8 1044.8 1513.8 1039.8 C1512.9 1034.9 1512.9 1023 1513.8 1018.1 C1514.8 1013.1 1521.4 995.4 1523.1 990.1 C1524.9 984.8 1530.2 967.9 1530.9 965.3 C1531.6 962.7 1529.7 968.9 1530.1 964.1 C1530.5 959.3 1533.4 926 1534.8 917.5 C1536.2 909 1541.8 887.2 1544.1 878.7 C1546.4 870.1 1556.1 841.4 1558.1 832.1 C1560.1 822.7 1564.2 794 1564.3 785.4 C1564.5 776.9 1561.4 753.6 1559.6 746.6 C1557.9 739.6 1552.7 723 1547.2 715.5 C1541.7 708.1 1514.4 682.4 1504.5 671.8 C1494.6 661.2 1460.7 616.2 1448.6 609.6 C1436.5 603.1 1392 604.7 1383.3 606.5 Z"/></clipPath>
<path d="M1383.3 606.5 C1374.6 608.4 1366.2 623 1361.6 628.3 C1356.9 633.6 1341.8 654.7 1336.7 659.4 C1331.6 664 1314.3 672.6 1310.3 674.9 C1306.3 677.2 1298.8 679.6 1296.3 682.7 C1293.8 685.8 1286.8 701.2 1285.4 706 C1284 710.8 1281.9 725.2 1282.3 730.8 C1282.8 736.4 1288.8 757.2 1290.1 761.9 C1291.4 766.6 1292.7 773 1295.5 777.7 C1298.4 782.4 1314.2 803.3 1318.8 808.8 C1323.5 814.2 1339.2 828.2 1342.1 832.1 C1345.1 835.9 1348.7 844.8 1348.4 847.6 C1348 850.4 1342.8 858.3 1339 860 C1335.3 861.7 1316.7 865 1311.1 864.7 C1305.5 864.4 1284.4 855.8 1283.1 856.9 C1281.9 858 1295.1 872.3 1298.6 875.6 C1302.2 878.8 1314.5 887.8 1318.8 889.5 C1323.2 891.2 1337.6 893.1 1342.1 892.6 C1346.6 892.2 1360.8 887.4 1363.9 884.9 C1367 882.4 1372.1 872.3 1373.2 867.8 C1374.4 863.3 1375.2 844.2 1375.5 839.8 C1375.9 835.5 1375 825.1 1376.3 824.3 C1377.6 823.5 1386 829.6 1388.8 832.1 C1391.5 834.5 1402.3 846.2 1404.3 849.1 C1406.2 852.1 1408.3 857.8 1408.2 861.6 C1408 865.3 1404.4 881.9 1402.7 886.4 C1401.1 890.9 1393.6 902.7 1391.9 906.6 C1390.2 910.5 1386.9 920.3 1385.6 925.3 C1384.4 930.2 1380.2 948.9 1379.4 956.3 C1378.7 963.8 1378.2 995.6 1377.9 1000 C1377.5 1004.4 1377 998.2 1376 1000.4 C1374.9 1002.6 1369.2 1018.3 1367.5 1022.4 C1365.9 1026.6 1361.2 1037.3 1359.8 1041.8 C1358.4 1046.4 1354.3 1062.5 1353.3 1067.7 C1352.3 1072.9 1350.1 1088 1349.4 1093.6 C1348.7 1099.2 1346.1 1117.3 1346 1123.7 C1346 1130.1 1347.3 1150.8 1349.1 1157.9 C1351 1165 1361.6 1188.3 1364.7 1195.2 C1367.8 1202 1378 1220 1380.2 1226.3 C1382.4 1232.5 1386.4 1251.7 1386.4 1257.3 C1386.4 1262.9 1382.7 1279.1 1380.2 1282.2 C1377.7 1285.3 1369.3 1287.6 1361.6 1288.4 C1353.8 1289.2 1310.6 1288.7 1302.5 1290 C1294.5 1291.2 1285.4 1297.6 1280.8 1300.8 C1276.1 1304.1 1255.9 1318.2 1255.9 1322.6 C1255.9 1326.9 1274 1340 1280.8 1344.3 C1287.6 1348.7 1316.2 1363.9 1324.3 1366.1 C1332.4 1368.3 1354.1 1367 1361.6 1366.1 C1369 1365.1 1392 1358.9 1398.9 1356.8 C1405.7 1354.6 1421.9 1346.7 1429.9 1344.3 C1438 1342 1470.9 1335.3 1479.6 1333.5 C1488.3 1331.6 1512.6 1328.9 1516.9 1325.7 C1521.3 1322.4 1520.7 1307.7 1523.1 1300.8 C1525.6 1294 1538.7 1264.5 1541.8 1257.3 C1544.9 1250.2 1552.8 1237.1 1554.2 1229.4 C1555.6 1221.6 1556.1 1187.7 1555.8 1179.6 C1555.5 1171.6 1552.5 1156.7 1551.1 1148.6 C1549.7 1140.5 1543.2 1105.4 1541.8 1098.9 C1540.4 1092.3 1539 1086.4 1537.1 1083.3 C1535.3 1080.2 1525.5 1072.1 1523.1 1067.8 C1520.8 1063.4 1514.8 1044.8 1513.8 1039.8 C1512.9 1034.9 1512.9 1023 1513.8 1018.1 C1514.8 1013.1 1521.4 995.4 1523.1 990.1 C1524.9 984.8 1530.2 967.9 1530.9 965.3 C1531.6 962.7 1529.7 968.9 1530.1 964.1 C1530.5 959.3 1533.4 926 1534.8 917.5 C1536.2 909 1541.8 887.2 1544.1 878.7 C1546.4 870.1 1556.1 841.4 1558.1 832.1 C1560.1 822.7 1564.2 794 1564.3 785.4 C1564.5 776.9 1561.4 753.6 1559.6 746.6 C1557.9 739.6 1552.7 723 1547.2 715.5 C1541.7 708.1 1514.4 682.4 1504.5 671.8 C1494.6 661.2 1460.7 616.2 1448.6 609.6 C1436.5 603.1 1392 604.7 1383.3 606.5 Z" fill="#a4967f"/>
<g clip-path="url(#cuh)">
<path d="M1255.9 1322.6 C1257.7 1320.4 1282.3 1328.4 1293.2 1328.8 C1304.1 1329.2 1338.3 1327.5 1349.1 1325.7 C1360 1323.9 1378.5 1317.6 1386.4 1313.3 C1394.4 1308.9 1412.4 1296.7 1417.5 1288.4 C1422.6 1280.1 1427.8 1252.7 1429.9 1241.8 C1432.1 1230.9 1434 1205.3 1436.1 1195.2 C1438.3 1185 1448.6 1160.2 1448.6 1154.8 C1448.6 1149.4 1439.8 1143.9 1436.1 1148.6 C1432.5 1153.3 1421.1 1184.3 1417.5 1195.2 C1413.9 1206.1 1407.3 1232.7 1405.1 1241.8 C1402.9 1250.9 1396.7 1265.6 1398.9 1272.9 C1401 1280.1 1419.4 1296 1423.7 1303.9 C1428.1 1311.9 1440.5 1334 1436.1 1341.2 C1431.8 1348.5 1399.5 1362.5 1386.4 1366.1 C1373.4 1369.7 1337 1374.5 1324.3 1372.3 C1311.6 1370.1 1285.7 1353.2 1277.7 1347.4 C1269.7 1341.6 1254.1 1324.8 1255.9 1322.6 Z" fill="#6d6354"/>
<path d="M1454.8 1145.5 C1451.1 1149.2 1448 1182.3 1445.5 1195.2 C1443 1208 1437.8 1229.4 1436.1 1241.8 C1434.5 1254.2 1431.4 1278.9 1433 1288.4 C1434.7 1297.9 1445.3 1315.3 1448.6 1313.3 C1451.9 1311.2 1455.8 1286.5 1457.9 1272.9 C1460 1259.2 1462 1224.8 1464.1 1210.7 C1466.2 1196.6 1474.7 1175.9 1473.4 1167.2 C1472.2 1158.5 1458.5 1141.7 1454.8 1145.5 Z" fill="#6d6354"/>
<path d="M1529.4 1126.8 C1526.9 1126.8 1527.5 1166.4 1526.3 1179.6 C1525 1192.9 1523.8 1214.7 1520 1226.3 C1516.3 1237.9 1504.5 1259.2 1498.3 1266.6 C1492.1 1274.1 1474.3 1279.7 1473.4 1282.2 C1472.6 1284.7 1485.4 1287.4 1492.1 1285.3 C1498.7 1283.2 1516.5 1274.5 1523.1 1266.6 C1529.8 1258.8 1538.9 1237.9 1541.8 1226.3 C1544.7 1214.7 1546.6 1192.9 1544.9 1179.6 C1543.2 1166.4 1531.8 1126.8 1529.4 1126.8 Z" fill="#6d6354"/>
<path d="M1498.3 1000.4 C1497.8 1003.2 1493 1014.3 1489.2 1019.8 C1485.4 1025.3 1475.9 1036 1469.8 1041.8 C1463.8 1047.7 1450.5 1058.1 1443.9 1063.8 C1437.4 1069.5 1426.2 1078.7 1420.6 1084.6 C1415.1 1090.4 1406.5 1101.8 1402.5 1107.9 C1398.5 1113.9 1393.1 1124.1 1390.8 1130 C1388.6 1135.9 1386.9 1144.6 1385.7 1151.9 C1384.5 1159.1 1383.5 1180.8 1381.8 1184.2 C1380.1 1187.7 1372.9 1184.5 1372.7 1177.8 C1372.6 1171 1377.9 1142.7 1380.5 1133.8 C1383.1 1124.8 1388.2 1117 1392.1 1110.5 C1396.1 1103.9 1404.4 1091.3 1410.3 1084.6 C1416.1 1077.8 1429.3 1066.5 1436.2 1060 C1443.1 1053.4 1455.8 1041.4 1462.1 1035.4 C1468.3 1029.3 1478.6 1019.5 1482.8 1014.6 C1486.9 1009.8 1491.1 1001 1493.1 999.1 C1495.2 997.2 1498.8 997.6 1498.3 1000.4 Z" fill="#6d6354"/>
<path d="M1516.4 880 C1515.4 886.9 1511.3 903.4 1508.7 912.4 C1506.1 921.3 1500.3 938 1497 947.3 C1493.7 956.6 1487.7 974.9 1484.1 982.3 C1480.4 989.7 1474.8 997.8 1469.8 1003 C1464.8 1008.2 1451 1018.4 1446.5 1021.1 C1442 1023.9 1435.3 1026.1 1436.2 1023.7 C1437 1021.3 1448.2 1009.7 1453 1003 C1457.8 996.3 1468.1 981.8 1472.4 973.2 C1476.7 964.6 1482.3 947.2 1485.4 938.3 C1488.5 929.3 1493.5 913.7 1495.7 905.9 C1498 898.1 1501.2 886 1502.2 880 C1503.2 874 1501.6 863.2 1503.5 860.6 C1505.4 858 1514.7 858 1516.4 860.6 C1518.2 863.2 1517.5 873.1 1516.4 880 Z" fill="#6d6354"/>
<path d="M1446.5 880 C1446.9 882.9 1439.6 897 1436.2 902 C1432.7 907 1424.1 913.2 1420.6 917.5 C1417.2 921.9 1413 928.3 1410.3 934.4 C1407.5 940.4 1402.8 954.6 1399.9 962.9 C1397 971.1 1391 988.6 1388.3 996.5 C1385.5 1004.5 1380.9 1020.7 1379.2 1022.4 C1377.5 1024.1 1374.6 1014.6 1375.3 1009.5 C1376 1004.3 1381.4 991.2 1384.4 983.6 C1387.3 976 1394.4 960.3 1397.3 952.5 C1400.3 944.7 1403.3 931.9 1406.4 925.3 C1409.5 918.8 1417.3 908.3 1420.6 903.3 C1423.9 898.3 1429.3 890.9 1431 887.8 C1432.7 884.7 1431.5 881 1433.6 880 C1435.6 879 1446.2 877.1 1446.5 880 Z" fill="#6d6354"/>
<path d="M1470.5 880 C1469 885.2 1469.6 909.3 1469.2 918.8 C1468.8 928.3 1466.9 950.3 1467.5 951.2 C1468.1 952.1 1472 934.8 1473.7 925.3 C1475.4 915.8 1480.6 886 1480.2 880 C1479.7 874 1471.9 874.8 1470.5 880 Z" fill="#6d6354"/>
<path d="M1317.3 723.3 C1317.8 724.2 1327.1 759.9 1331.3 769.9 C1335.4 779.9 1348.1 802.4 1353 808.8 C1357.9 815.1 1370.1 818.9 1373.2 824.3 C1376.3 829.7 1379.4 849 1379.4 855.4 C1379.4 861.7 1375 874.5 1373.2 878.7 C1371.4 882.8 1367.5 888.7 1363.9 891.1 C1360.3 893.4 1347.4 898.5 1342.1 898.9 C1336.9 899.2 1323.9 896.4 1318.8 894.2 C1313.8 892 1302.8 884.6 1298.6 880.2 C1294.5 875.9 1281.7 858.1 1283.1 856.9 C1284.6 855.7 1304.5 869.1 1311.1 870.1 C1317.6 871.1 1334 867.9 1339 865.5 C1344.1 863 1352.6 853 1354.6 849.1 C1356.6 845.2 1357.6 837.7 1356.1 832.1 C1354.7 826.4 1345.6 809.1 1342.1 801 C1338.7 792.8 1329.5 771.2 1326.6 762.1 C1323.7 753.1 1316.7 722.4 1317.3 723.3 Z" fill="#6d6354"/>
<path d="M1358.5 678 C1359.2 678 1363.8 721.2 1367.8 733.9 C1371.8 746.6 1386.1 775.9 1392.6 786.8 C1399.2 797.6 1417.6 816.6 1423.7 827.2 C1429.9 837.7 1444.4 867.8 1445.5 876.9 C1446.6 885.9 1436.3 898.6 1433 904.8 C1429.8 911 1421.5 927.1 1417.5 930 C1413.5 932.9 1398.9 934.7 1398.9 930 C1398.9 925.3 1414.2 897.7 1417.5 889.3 C1420.8 880.9 1429 866.9 1426.8 858.2 C1424.7 849.5 1405 824.1 1398.9 814.7 C1392.7 805.3 1378.4 786.9 1374 777.4 C1369.7 768 1363.4 745.5 1361.6 733.9 C1359.8 722.3 1357.7 678 1358.5 678 Z" fill="#6d6354"/>
<path d="M1428.4 761.9 C1429.1 763.4 1450.3 782.3 1454.8 789.9 C1459.3 797.5 1465.4 815.6 1467.2 827.2 C1469 838.8 1470.3 877.3 1470.3 889.3 C1470.3 901.3 1466.9 925.3 1467.2 930 C1467.6 934.7 1472.3 938.4 1473.4 930 C1474.5 921.6 1476.9 872.4 1476.5 858.2 C1476.2 844 1473.6 817.9 1470.3 808.5 C1467.1 799.1 1453.5 782.9 1448.6 777.4 C1443.7 772 1427.7 760.5 1428.4 761.9 Z" fill="#6d6354"/>
</g>
<path d="M1383.3 606.5 C1374.6 608.4 1366.2 623 1361.6 628.3 C1356.9 633.6 1341.8 654.7 1336.7 659.4 C1331.6 664 1314.3 672.6 1310.3 674.9 C1306.3 677.2 1298.8 679.6 1296.3 682.7 C1293.8 685.8 1286.8 701.2 1285.4 706 C1284 710.8 1281.9 725.2 1282.3 730.8 C1282.8 736.4 1288.8 757.2 1290.1 761.9 C1291.4 766.6 1292.7 773 1295.5 777.7 C1298.4 782.4 1314.2 803.3 1318.8 808.8 C1323.5 814.2 1339.2 828.2 1342.1 832.1 C1345.1 835.9 1348.7 844.8 1348.4 847.6 C1348 850.4 1342.8 858.3 1339 860 C1335.3 861.7 1316.7 865 1311.1 864.7 C1305.5 864.4 1284.4 855.8 1283.1 856.9 C1281.9 858 1295.1 872.3 1298.6 875.6 C1302.2 878.8 1314.5 887.8 1318.8 889.5 C1323.2 891.2 1337.6 893.1 1342.1 892.6 C1346.6 892.2 1360.8 887.4 1363.9 884.9 C1367 882.4 1372.1 872.3 1373.2 867.8 C1374.4 863.3 1375.2 844.2 1375.5 839.8 C1375.9 835.5 1375 825.1 1376.3 824.3 C1377.6 823.5 1386 829.6 1388.8 832.1 C1391.5 834.5 1402.3 846.2 1404.3 849.1 C1406.2 852.1 1408.3 857.8 1408.2 861.6 C1408 865.3 1404.4 881.9 1402.7 886.4 C1401.1 890.9 1393.6 902.7 1391.9 906.6 C1390.2 910.5 1386.9 920.3 1385.6 925.3 C1384.4 930.2 1380.2 948.9 1379.4 956.3 C1378.7 963.8 1378.2 995.6 1377.9 1000 C1377.5 1004.4 1377 998.2 1376 1000.4 C1374.9 1002.6 1369.2 1018.3 1367.5 1022.4 C1365.9 1026.6 1361.2 1037.3 1359.8 1041.8 C1358.4 1046.4 1354.3 1062.5 1353.3 1067.7 C1352.3 1072.9 1350.1 1088 1349.4 1093.6 C1348.7 1099.2 1346.1 1117.3 1346 1123.7 C1346 1130.1 1347.3 1150.8 1349.1 1157.9 C1351 1165 1361.6 1188.3 1364.7 1195.2 C1367.8 1202 1378 1220 1380.2 1226.3 C1382.4 1232.5 1386.4 1251.7 1386.4 1257.3 C1386.4 1262.9 1382.7 1279.1 1380.2 1282.2 C1377.7 1285.3 1369.3 1287.6 1361.6 1288.4 C1353.8 1289.2 1310.6 1288.7 1302.5 1290 C1294.5 1291.2 1285.4 1297.6 1280.8 1300.8 C1276.1 1304.1 1255.9 1318.2 1255.9 1322.6 C1255.9 1326.9 1274 1340 1280.8 1344.3 C1287.6 1348.7 1316.2 1363.9 1324.3 1366.1 C1332.4 1368.3 1354.1 1367 1361.6 1366.1 C1369 1365.1 1392 1358.9 1398.9 1356.8 C1405.7 1354.6 1421.9 1346.7 1429.9 1344.3 C1438 1342 1470.9 1335.3 1479.6 1333.5 C1488.3 1331.6 1512.6 1328.9 1516.9 1325.7 C1521.3 1322.4 1520.7 1307.7 1523.1 1300.8 C1525.6 1294 1538.7 1264.5 1541.8 1257.3 C1544.9 1250.2 1552.8 1237.1 1554.2 1229.4 C1555.6 1221.6 1556.1 1187.7 1555.8 1179.6 C1555.5 1171.6 1552.5 1156.7 1551.1 1148.6 C1549.7 1140.5 1543.2 1105.4 1541.8 1098.9 C1540.4 1092.3 1539 1086.4 1537.1 1083.3 C1535.3 1080.2 1525.5 1072.1 1523.1 1067.8 C1520.8 1063.4 1514.8 1044.8 1513.8 1039.8 C1512.9 1034.9 1512.9 1023 1513.8 1018.1 C1514.8 1013.1 1521.4 995.4 1523.1 990.1 C1524.9 984.8 1530.2 967.9 1530.9 965.3 C1531.6 962.7 1529.7 968.9 1530.1 964.1 C1530.5 959.3 1533.4 926 1534.8 917.5 C1536.2 909 1541.8 887.2 1544.1 878.7 C1546.4 870.1 1556.1 841.4 1558.1 832.1 C1560.1 822.7 1564.2 794 1564.3 785.4 C1564.5 776.9 1561.4 753.6 1559.6 746.6 C1557.9 739.6 1552.7 723 1547.2 715.5 C1541.7 708.1 1514.4 682.4 1504.5 671.8 C1494.6 661.2 1460.7 616.2 1448.6 609.6 C1436.5 603.1 1392 604.7 1383.3 606.5 Z" fill="none" stroke="#0a0a0a" stroke-width="3.2" stroke-linejoin="round" stroke-linecap="round"/>
<path d="M1315.7 700 C1317.5 706.5 1320.9 724.6 1326.6 738.8 C1332.3 753.1 1342.1 771.7 1349.9 785.4 C1357.7 799.2 1368.8 814.7 1373.2 821.2 C1377.6 827.7 1375.8 823.8 1376.3 824.3" fill="none" stroke="#0a0a0a" stroke-width="3.2" stroke-linejoin="round" stroke-linecap="round"/>
<path d="M1363.1 678 C1364.9 687.3 1368 716.8 1374 733.9 C1380 751 1389.5 765.5 1398.9 780.5 C1408.2 795.6 1421.6 808 1429.9 824 C1438.2 840.1 1447 862.9 1448.6 876.9 C1450.1 890.8 1443 902 1439.3 907.9 C1435.5 913.9 1430.2 908.4 1425.8 912.4 C1421.4 916.3 1416.7 924.2 1412.9 931.8 C1409 939.3 1406 948 1402.5 957.7 C1399 967.4 1396 979 1392.1 990 C1388.3 1001.1 1382.5 1015.5 1379.2 1023.7 C1375.9 1031.9 1373 1039.5 1372.1 1039.2 C1371.1 1039 1372.7 1028.9 1373.4 1022.4 C1374 1015.9 1375.5 1004.1 1376 1000.4" fill="none" stroke="#0a0a0a" stroke-width="3.2" stroke-linejoin="round" stroke-linecap="round"/>
<path d="M1428.4 761.9 C1432.8 766 1448.6 775.9 1454.8 786.8 C1461 797.6 1463.5 811.1 1465.7 827.2 C1467.8 843.2 1467.8 867.8 1467.8 883.1 C1467.9 898.4 1466 907.4 1465.9 918.8 C1465.8 930.3 1465.9 950.8 1467.2 951.9 C1468.5 952.9 1471.6 937.3 1473.7 925.3 C1475.9 913.3 1478.7 891.2 1480.2 880 C1481.7 868.8 1482.3 861.9 1482.8 858.2" fill="none" stroke="#0a0a0a" stroke-width="3.2" stroke-linejoin="round" stroke-linecap="round"/>
<path d="M1520 765 C1520.3 775.4 1522.6 806.4 1521.6 827.2 C1520.6 847.9 1516.7 872.1 1513.8 889.3 C1511 906.5 1507.1 921.6 1504.5 930.1 C1501.9 938.7 1503.5 932 1498.3 940.4 C1493.1 948.8 1482.8 968.4 1473.4 980.8 C1464.1 993.2 1450.3 1005.4 1442.4 1015 C1434.4 1024.5 1432.5 1029.8 1425.9 1038 C1419.3 1046.1 1409.5 1054.7 1402.6 1063.7 C1395.6 1072.8 1389.2 1081.3 1384.3 1092.3 C1379.3 1103.4 1375.2 1118 1372.8 1129.9 C1370.3 1141.9 1367.6 1153.2 1369.3 1164.1 C1371.1 1175 1378.4 1187.4 1383.3 1195.2 C1388.2 1203 1396.3 1208.1 1398.9 1210.7" fill="none" stroke="#0a0a0a" stroke-width="3.2" stroke-linejoin="round" stroke-linecap="round"/>
<path d="M1498.3 999.4 C1494.1 1004.6 1483.8 1020.1 1473.4 1030.5 C1463.1 1040.9 1448.1 1049.7 1436.1 1061.6 C1424.2 1073.5 1409.7 1089.5 1402 1102 C1394.2 1114.4 1392.4 1125.8 1389.5 1136.1 C1386.7 1146.5 1384.9 1156.9 1384.9 1164.1 C1384.9 1171.4 1388.8 1177.1 1389.5 1179.6" fill="none" stroke="#0a0a0a" stroke-width="3.2" stroke-linejoin="round" stroke-linecap="round"/>
<path d="M1454.8 1143.9 C1453.2 1152.5 1448.6 1178.9 1445.5 1195.2 C1442.4 1211.5 1438.2 1226.3 1436.1 1241.8 C1434.1 1257.3 1431 1276.2 1433 1288.4 C1435.1 1300.6 1446 1310.4 1448.6 1314.8" fill="none" stroke="#0a0a0a" stroke-width="3.2" stroke-linejoin="round" stroke-linecap="round"/>
<path d="M1476.5 1167.2 C1475 1174.5 1469.8 1195.7 1467.2 1210.7 C1464.6 1225.7 1463.6 1241.8 1461 1257.3 C1458.4 1272.9 1453.2 1296.2 1451.7 1303.9" fill="none" stroke="#0a0a0a" stroke-width="3.2" stroke-linejoin="round" stroke-linecap="round"/>
<path d="M1530.9 1126.8 C1530.4 1135.6 1529.4 1163.1 1527.8 1179.6 C1526.3 1196.2 1526 1211.8 1521.6 1226.3 C1517.2 1240.8 1509.2 1257.1 1501.4 1266.6 C1493.6 1276.2 1479.4 1280.9 1475 1283.7" fill="none" stroke="#0a0a0a" stroke-width="3.2" stroke-linejoin="round" stroke-linecap="round"/>
<path d="M1445.5 463.6 C1450.9 464.3 1472 480.3 1479.6 485.4 C1487.3 490.4 1504.2 502 1510.7 507.1 C1517.2 512.2 1530.5 523.4 1535.6 528.9 C1540.7 534.3 1549.9 547.2 1554.2 553.7 C1558.6 560.2 1568.9 576.5 1572.9 584.8 C1576.9 593.1 1584.4 615 1588.4 625.2 C1592.4 635.3 1606.7 664.5 1607 671.8 C1607.4 679 1596.2 683.3 1591.5 687.3 C1586.8 691.3 1572.8 702.5 1566.6 706 C1560.5 709.4 1545.9 715.6 1538.7 716.8 C1531.4 718.1 1512.8 718.1 1504.5 716.8 C1496.2 715.6 1475.2 709.4 1467.2 706 C1459.2 702.5 1442.7 692.4 1436.1 687.3 C1429.6 682.3 1416.4 668.6 1411.3 662.5 C1406.2 656.3 1395.9 641 1392.6 634.5 C1389.4 628 1382.6 615.2 1383.3 606.5 C1384 597.8 1394.9 570.4 1398.9 559.9 C1402.8 549.4 1413.5 525.9 1417.5 516.4 C1421.5 507 1429.8 485.3 1433 479.1 C1436.3 473 1440 462.9 1445.5 463.6 Z" fill="#c9a07b" stroke="#0a0a0a" stroke-width="3.2" stroke-linejoin="round" stroke-linecap="round"/>
<ellipse cx="1418.1" cy="598.8" rx="14.2" ry="14.8" fill="#000"/>
<ellipse cx="1546.5" cy="592.6" rx="14.2" ry="14.8" fill="#000"/>
<path d="M1402 581.7 C1402.7 582.7 1405.3 586.1 1406.6 587.9 C1407.9 589.7 1409.2 591.8 1409.7 592.6" fill="none" stroke="#0a0a0a" stroke-width="2.6" stroke-linejoin="round" stroke-linecap="round"/>
<path d="M1407.6 579.5 C1408.2 580.6 1410.4 584.5 1411.3 586.3 C1412.2 588.2 1412.8 589.7 1413.2 590.4" fill="none" stroke="#0a0a0a" stroke-width="2.6" stroke-linejoin="round" stroke-linecap="round"/>
<path d="M1552.7 575.5 C1553.2 576.5 1555 579.9 1555.8 581.7 C1556.6 583.5 1557.1 585.6 1557.3 586.3" fill="none" stroke="#0a0a0a" stroke-width="2.6" stroke-linejoin="round" stroke-linecap="round"/>
<path d="M1562 574.5 C1561.6 575.7 1560.5 579.6 1559.8 581.7 C1559.1 583.8 1558.3 586.3 1557.9 587.3" fill="none" stroke="#0a0a0a" stroke-width="2.6" stroke-linejoin="round" stroke-linecap="round"/>
<clipPath id="chair"><path d="M1445.5 463.6 C1440.8 463 1435.8 473.9 1433 479.1 C1430.2 484.4 1420.9 508.4 1417.5 516.4 C1414.1 524.5 1402.3 550.9 1398.9 559.9 C1395.4 568.9 1387.1 599.7 1383.3 606.5 C1379.6 613.4 1366.2 623 1361.6 628.3 C1356.9 633.6 1340.4 651.9 1336.7 659.4 C1333 666.8 1325.4 694.8 1324.3 702.9 C1323.2 710.9 1326.5 738.6 1325.8 740.2 C1325.2 741.7 1319.6 724.9 1318.1 718.4 C1316.5 711.9 1310.3 682.7 1310.3 674.9 C1310.3 667.1 1315.4 647.2 1318.1 640.7 C1320.7 634.2 1333.7 616 1336.7 609.6 C1339.8 603.3 1347.6 583.2 1348.5 577 C1349.5 570.8 1346 554.2 1346 547.5 C1346.1 540.8 1346.8 518.3 1349.1 510.2 C1351.5 502.1 1365.6 475.4 1369.3 466.7 C1373.1 458 1381.6 431.9 1386.4 423.2 C1391.2 414.5 1412.5 385.9 1417.5 379.7 C1422.5 373.5 1433 363.3 1436.1 361.1 C1439.3 358.8 1445.6 357.2 1448.6 357.3 C1451.5 357.5 1461.3 363.2 1465.7 362.6 C1470 362.1 1485.7 353.1 1492.1 351.8 C1498.4 350.4 1521.9 348 1529.4 348.6 C1536.8 349.3 1559.5 355.2 1566.6 358 C1573.8 360.8 1594 371.3 1600.8 376.6 C1607.7 381.9 1629.4 403 1635 410.8 C1640.6 418.6 1651.8 445 1656.8 454.3 C1661.7 463.6 1680.1 494.7 1684.7 504 C1689.4 513.3 1699.9 538.5 1703.4 547.5 C1706.8 556.5 1716.7 584.8 1718.9 594.1 C1721.1 603.4 1724.5 632 1725.1 640.7 C1725.7 649.4 1724.2 672.1 1725.1 681.1 C1726 690.1 1731 722.7 1734.4 730.8 C1737.9 738.9 1755.3 756 1759.3 761.9 C1763.3 767.8 1773 784.6 1774.8 789.9 C1776.6 795.1 1777.9 809.8 1777.3 814.7 C1776.7 819.7 1771.7 835.9 1768.6 839.6 C1765.6 843.3 1752 850.1 1746.9 852 C1741.7 853.9 1720.8 860.7 1717.3 858.2 C1713.9 855.7 1714.7 836.5 1712.7 827.2 C1710.7 817.8 1701.8 775 1697.2 765 C1692.5 755.1 1672.3 734.9 1666.1 727.7 C1659.9 720.6 1640.9 699.1 1635 693.5 C1629.1 687.9 1611.7 678.6 1607 671.8 C1602.4 665 1591.8 633.9 1588.4 625.2 C1585 616.5 1576.3 591.9 1572.9 584.8 C1569.4 577.6 1557.9 559.3 1554.2 553.7 C1550.5 548.1 1539.9 533.5 1535.6 528.9 C1531.2 524.2 1516.3 511.5 1510.7 507.1 C1505.1 502.8 1486.2 489.7 1479.6 485.4 C1473.1 481 1450.1 464.2 1445.5 463.6 Z"/></clipPath>
<path d="M1445.5 463.6 C1440.8 463 1435.8 473.9 1433 479.1 C1430.2 484.4 1420.9 508.4 1417.5 516.4 C1414.1 524.5 1402.3 550.9 1398.9 559.9 C1395.4 568.9 1387.1 599.7 1383.3 606.5 C1379.6 613.4 1366.2 623 1361.6 628.3 C1356.9 633.6 1340.4 651.9 1336.7 659.4 C1333 666.8 1325.4 694.8 1324.3 702.9 C1323.2 710.9 1326.5 738.6 1325.8 740.2 C1325.2 741.7 1319.6 724.9 1318.1 718.4 C1316.5 711.9 1310.3 682.7 1310.3 674.9 C1310.3 667.1 1315.4 647.2 1318.1 640.7 C1320.7 634.2 1333.7 616 1336.7 609.6 C1339.8 603.3 1347.6 583.2 1348.5 577 C1349.5 570.8 1346 554.2 1346 547.5 C1346.1 540.8 1346.8 518.3 1349.1 510.2 C1351.5 502.1 1365.6 475.4 1369.3 466.7 C1373.1 458 1381.6 431.9 1386.4 423.2 C1391.2 414.5 1412.5 385.9 1417.5 379.7 C1422.5 373.5 1433 363.3 1436.1 361.1 C1439.3 358.8 1445.6 357.2 1448.6 357.3 C1451.5 357.5 1461.3 363.2 1465.7 362.6 C1470 362.1 1485.7 353.1 1492.1 351.8 C1498.4 350.4 1521.9 348 1529.4 348.6 C1536.8 349.3 1559.5 355.2 1566.6 358 C1573.8 360.8 1594 371.3 1600.8 376.6 C1607.7 381.9 1629.4 403 1635 410.8 C1640.6 418.6 1651.8 445 1656.8 454.3 C1661.7 463.6 1680.1 494.7 1684.7 504 C1689.4 513.3 1699.9 538.5 1703.4 547.5 C1706.8 556.5 1716.7 584.8 1718.9 594.1 C1721.1 603.4 1724.5 632 1725.1 640.7 C1725.7 649.4 1724.2 672.1 1725.1 681.1 C1726 690.1 1731 722.7 1734.4 730.8 C1737.9 738.9 1755.3 756 1759.3 761.9 C1763.3 767.8 1773 784.6 1774.8 789.9 C1776.6 795.1 1777.9 809.8 1777.3 814.7 C1776.7 819.7 1771.7 835.9 1768.6 839.6 C1765.6 843.3 1752 850.1 1746.9 852 C1741.7 853.9 1720.8 860.7 1717.3 858.2 C1713.9 855.7 1714.7 836.5 1712.7 827.2 C1710.7 817.8 1701.8 775 1697.2 765 C1692.5 755.1 1672.3 734.9 1666.1 727.7 C1659.9 720.6 1640.9 699.1 1635 693.5 C1629.1 687.9 1611.7 678.6 1607 671.8 C1602.4 665 1591.8 633.9 1588.4 625.2 C1585 616.5 1576.3 591.9 1572.9 584.8 C1569.4 577.6 1557.9 559.3 1554.2 553.7 C1550.5 548.1 1539.9 533.5 1535.6 528.9 C1531.2 524.2 1516.3 511.5 1510.7 507.1 C1505.1 502.8 1486.2 489.7 1479.6 485.4 C1473.1 481 1450.1 464.2 1445.5 463.6 Z" fill="#b9a98e"/>
<g clip-path="url(#chair)">
<path d="M1436.1 476 C1433.4 480.7 1421.2 505.2 1417.5 513.3 C1413.8 521.4 1402.6 547.8 1398.9 556.8 C1395.1 565.8 1384.6 596.3 1380.2 603.4 C1375.9 610.6 1360 622.7 1355.4 628.3 C1350.7 633.9 1336.9 651.9 1333.6 659.4 C1330.3 666.8 1323.7 694.8 1322.7 702.9 C1321.8 710.9 1323.5 740.2 1324.3 740.2 C1325.1 740.2 1328.6 710.6 1330.5 702.9 C1332.4 695.1 1339.2 669.3 1342.9 662.5 C1346.7 655.6 1363.1 639.8 1367.8 634.5 C1372.4 629.2 1385.7 616.8 1389.5 609.6 C1393.4 602.5 1403.1 572.1 1406.6 563 C1410.2 554 1421.4 529.2 1425.3 519.5 C1429.2 509.9 1444.4 471.1 1445.5 466.7 C1446.6 462.4 1438.9 471.4 1436.1 476 Z" fill="#6d6354"/>
<path d="M1428.4 446.5 C1424.2 447.3 1406.1 454.5 1398.9 460.5 C1391.6 466.5 1380.2 479.1 1374 491.6 C1367.8 504 1355.6 542.1 1352.3 553.7 C1348.9 565.3 1348.3 578.2 1349.1 578.6 C1350 579 1354.3 566.8 1358.5 556.8 C1362.6 546.9 1374 515.6 1380.2 504 C1386.4 492.4 1398.4 476.5 1405.1 469.8 C1411.7 463.2 1426.8 457.4 1429.9 454.3 C1433 451.2 1432.5 445.7 1428.4 446.5 Z" fill="#6d6354"/>
<path d="M1574.4 538.2 C1574.6 542.9 1581.8 568.1 1585.3 578.6 C1588.7 589.1 1598.1 616 1603.9 628.3 C1609.7 640.6 1627.8 673 1635 684.2 C1642.3 695.5 1658.1 715.6 1666.1 724.6 C1674.1 733.7 1698.3 758.3 1703.4 761.9 C1708.4 765.5 1712.8 760.8 1709.6 755.7 C1706.3 750.6 1683 727.8 1675.4 718.4 C1667.8 709 1651.2 685.8 1644.3 674.9 C1637.4 664 1622.2 636.8 1616.4 625.2 C1610.6 613.6 1598.4 585.6 1594.6 575.5 C1590.8 565.3 1586.1 542.5 1583.7 538.2 C1581.4 533.8 1574.2 533.5 1574.4 538.2 Z" fill="#6d6354"/>
<path d="M1574.4 423.2 C1574.8 422.4 1587.2 422.2 1591.5 426.3 C1595.9 430.5 1603.3 443.9 1607 454.3 C1610.8 464.6 1615.7 492 1619.5 504 C1623.2 516 1630 535.7 1635 544.4 C1640 553.1 1651.4 564.3 1656.8 569.3 C1662.1 574.2 1675.8 580.4 1675.4 581.7 C1675 582.9 1659.5 581.9 1653.7 578.6 C1647.9 575.3 1637.3 565.5 1631.9 556.8 C1626.5 548.1 1617.4 525.8 1613.3 513.3 C1609.1 500.9 1604.1 474.4 1600.8 463.6 C1597.5 452.8 1591.9 437.9 1588.4 432.5 C1584.9 427.2 1574 424 1574.4 423.2 Z" fill="#6d6354"/>
<path d="M1697.2 765 C1699 759.2 1722.4 773.1 1728.2 777.4 C1734 781.8 1745.1 795.8 1746.9 802.3 C1748.7 808.8 1746.3 827.2 1743.8 833.4 C1741.2 839.5 1728.4 852.2 1725.1 855.1 C1721.9 858 1717.2 861.5 1715.8 858.2 C1714.3 855 1714.9 838 1712.7 827.2 C1710.5 816.3 1695.3 770.8 1697.2 765 Z" fill="#a4967f"/>
<path d="M1709.6 777.4 C1709.2 775.6 1726.8 783.1 1731.3 786.8 C1735.9 790.4 1747 802.7 1748.4 808.5 C1749.9 814.3 1746.5 830.9 1743.8 836.5 C1741 842.1 1725.8 857.8 1725.1 856.7 C1724.4 855.6 1736.5 833.5 1737.5 827.2 C1738.6 820.8 1737.7 808.1 1734.4 802.3 C1731.2 796.5 1709.9 779.2 1709.6 777.4 Z" fill="#6d6354"/>
<path d="M1448.6 389 L1462.6 387.5 L1459.5 403 L1468.8 410.8 L1464.1 418.6 L1475 426.3 L1465.7 434.1 L1471.9 443.4 L1464.1 449.6 L1465.7 457.4 L1457.9 455.8 L1456.3 463.6 L1445.5 463.6 L1431.5 468.3 L1437.7 452.7 L1433 446.5 L1442.4 438.8 L1431.5 431 L1437.7 423.2 L1436.1 413.9 L1443.9 409.2 Z" fill="#8a7960"/>
</g>
<path d="M1445.5 463.6 C1440.8 463 1435.8 473.9 1433 479.1 C1430.2 484.4 1420.9 508.4 1417.5 516.4 C1414.1 524.5 1402.3 550.9 1398.9 559.9 C1395.4 568.9 1387.1 599.7 1383.3 606.5 C1379.6 613.4 1366.2 623 1361.6 628.3 C1356.9 633.6 1340.4 651.9 1336.7 659.4 C1333 666.8 1325.4 694.8 1324.3 702.9 C1323.2 710.9 1326.5 738.6 1325.8 740.2 C1325.2 741.7 1319.6 724.9 1318.1 718.4 C1316.5 711.9 1310.3 682.7 1310.3 674.9 C1310.3 667.1 1315.4 647.2 1318.1 640.7 C1320.7 634.2 1333.7 616 1336.7 609.6 C1339.8 603.3 1347.6 583.2 1348.5 577 C1349.5 570.8 1346 554.2 1346 547.5 C1346.1 540.8 1346.8 518.3 1349.1 510.2 C1351.5 502.1 1365.6 475.4 1369.3 466.7 C1373.1 458 1381.6 431.9 1386.4 423.2 C1391.2 414.5 1412.5 385.9 1417.5 379.7 C1422.5 373.5 1433 363.3 1436.1 361.1 C1439.3 358.8 1445.6 357.2 1448.6 357.3 C1451.5 357.5 1461.3 363.2 1465.7 362.6 C1470 362.1 1485.7 353.1 1492.1 351.8 C1498.4 350.4 1521.9 348 1529.4 348.6 C1536.8 349.3 1559.5 355.2 1566.6 358 C1573.8 360.8 1594 371.3 1600.8 376.6 C1607.7 381.9 1629.4 403 1635 410.8 C1640.6 418.6 1651.8 445 1656.8 454.3 C1661.7 463.6 1680.1 494.7 1684.7 504 C1689.4 513.3 1699.9 538.5 1703.4 547.5 C1706.8 556.5 1716.7 584.8 1718.9 594.1 C1721.1 603.4 1724.5 632 1725.1 640.7 C1725.7 649.4 1724.2 672.1 1725.1 681.1 C1726 690.1 1731 722.7 1734.4 730.8 C1737.9 738.9 1755.3 756 1759.3 761.9 C1763.3 767.8 1773 784.6 1774.8 789.9 C1776.6 795.1 1777.9 809.8 1777.3 814.7 C1776.7 819.7 1771.7 835.9 1768.6 839.6 C1765.6 843.3 1752 850.1 1746.9 852 C1741.7 853.9 1720.8 860.7 1717.3 858.2 C1713.9 855.7 1714.7 836.5 1712.7 827.2 C1710.7 817.8 1701.8 775 1697.2 765 C1692.5 755.1 1672.3 734.9 1666.1 727.7 C1659.9 720.6 1640.9 699.1 1635 693.5 C1629.1 687.9 1611.7 678.6 1607 671.8 C1602.4 665 1591.8 633.9 1588.4 625.2 C1585 616.5 1576.3 591.9 1572.9 584.8 C1569.4 577.6 1557.9 559.3 1554.2 553.7 C1550.5 548.1 1539.9 533.5 1535.6 528.9 C1531.2 524.2 1516.3 511.5 1510.7 507.1 C1505.1 502.8 1486.2 489.7 1479.6 485.4 C1473.1 481 1450.1 464.2 1445.5 463.6 Z" fill="none" stroke="#0a0a0a" stroke-width="3.2" stroke-linejoin="round" stroke-linecap="round"/>
<path d="M1429.9 448.1 C1426.2 450.1 1409 457.4 1402 463.6 C1394.9 469.8 1383.3 482.7 1377.1 494.7 C1370.9 506.7 1359.2 542.7 1355.4 553.7 C1351.5 564.7 1349.4 573.9 1348.5 577" fill="none" stroke="#0a0a0a" stroke-width="3.2" stroke-linejoin="round" stroke-linecap="round"/>
<path d="M1576 536.6 C1577.4 542.2 1582.9 566.4 1586.8 578.6 C1590.8 590.8 1598.9 614.2 1605.5 628.3 C1612.1 642.4 1628.3 671.4 1636.6 684.2 C1644.8 697.1 1658.7 714.5 1667.6 724.6 C1676.5 734.8 1698.6 755.6 1703.4 760.3" fill="none" stroke="#0a0a0a" stroke-width="3.2" stroke-linejoin="round" stroke-linecap="round"/>
<path d="M1574.4 423.2 C1576.9 423.4 1588.5 420.6 1593.1 424.8 C1597.6 428.9 1604.9 443.7 1608.6 454.3 C1612.3 464.9 1617.3 492 1621 504 C1624.8 516 1631.6 535.7 1636.6 544.4 C1641.5 553.1 1652.9 564.1 1658.3 569.3 C1663.7 574.4 1677.8 582 1677 583.2 C1676.1 584.5 1655.4 579.2 1652.1 578.6" fill="none" stroke="#0a0a0a" stroke-width="3.2" stroke-linejoin="round" stroke-linecap="round"/>
<path d="M1478.1 449.6 C1482.4 451.9 1501 461.1 1510.7 466.7 C1520.5 472.3 1540.8 483.3 1551.1 491.6 C1561.5 499.9 1579.3 517.3 1588.4 528.9 C1597.5 540.5 1612 563.7 1619.5 578.6 C1626.9 593.5 1637.3 625.8 1644.3 640.7 C1651.4 655.6 1663.6 678 1672.3 690.4 C1681 702.9 1700.9 727.7 1709.6 733.9 C1718.3 740.2 1733.8 736.6 1737.5 737" fill="none" stroke="#0a0a0a" stroke-width="3.2" stroke-linejoin="round" stroke-linecap="round"/>
<path d="M1697.2 765 C1701.3 766.7 1721.6 772.5 1728.2 777.4 C1734.9 782.4 1744.8 794.8 1746.9 802.3 C1748.9 809.8 1746.7 826.3 1743.8 833.4 C1740.9 840.4 1727.6 852.2 1725.1 855.1" fill="none" stroke="#0a0a0a" stroke-width="3.2" stroke-linejoin="round" stroke-linecap="round"/>
<path d="M1437.7 381.3 C1439.2 380.6 1445.9 376.5 1448.6 376 C1451.3 375.4 1456.7 377.1 1457.9 377.2" fill="none" stroke="#0a0a0a" stroke-width="3.2" stroke-linejoin="round" stroke-linecap="round"/>
<path d="M1473.4 379.7 C1475.1 378.7 1482.8 373.2 1485.9 371.9 C1489 370.7 1495.3 370.6 1496.7 370.4" fill="none" stroke="#0a0a0a" stroke-width="3.2" stroke-linejoin="round" stroke-linecap="round"/>
<path d="M1476.5 395.3 C1478.2 395.5 1485.7 395.6 1489 396.8 C1492.2 398 1499.2 403.5 1500.8 404.6" fill="none" stroke="#0a0a0a" stroke-width="3.2" stroke-linejoin="round" stroke-linecap="round"/>
<path d="M1448.6 389 C1450.4 388.8 1461.1 385.6 1462.6 387.5 C1464 389.3 1458.6 399.9 1459.5 403 C1460.3 406.1 1468.2 408.7 1468.8 410.8 C1469.4 412.9 1463.3 416.5 1464.1 418.6 C1464.9 420.6 1474.8 424.3 1475 426.3 C1475.2 428.4 1466.1 431.8 1465.7 434.1 C1465.3 436.4 1472.1 441.3 1471.9 443.4 C1471.7 445.5 1464.9 447.8 1464.1 449.6 C1463.3 451.5 1466.5 456.6 1465.7 457.4 C1464.8 458.2 1459.1 455 1457.9 455.8 C1456.7 456.7 1456.6 462.6 1456.3 463.6" fill="none" stroke="#0a0a0a" stroke-width="3.2" stroke-linejoin="round" stroke-linecap="round"/>
<path d="M1448.6 389 C1448 391.7 1445.6 405.9 1443.9 409.2 C1442.3 412.5 1437 412 1436.1 413.9 C1435.3 415.8 1438.3 420.9 1437.7 423.2 C1437.1 425.5 1430.9 428.9 1431.5 431 C1432.1 433.1 1442.2 436.7 1442.4 438.8 C1442.6 440.8 1433.7 444.7 1433 446.5 C1432.4 448.4 1437.9 449.8 1437.7 452.7 C1437.5 455.6 1432.3 466.2 1431.5 468.3" fill="none" stroke="#0a0a0a" stroke-width="3.2" stroke-linejoin="round" stroke-linecap="round"/>
<path d="M1321.2 730.8 L1325.8 740.2" fill="none" stroke="#0a0a0a" stroke-width="3.2" stroke-linejoin="round" stroke-linecap="round"/>
<path d="M1607 726.2 C1608.9 724.4 1615.1 718.4 1617.9 715.3 C1620.8 712.2 1623.1 708.8 1624.1 707.5" fill="none" stroke="#6e4a3a" stroke-width="4" stroke-linejoin="round" stroke-linecap="round"/>
<path d="M1614.8 732.4 C1616.4 730.3 1621.3 723.1 1624.1 720 C1627 716.8 1630.6 714.8 1631.9 713.7" fill="none" stroke="#6e4a3a" stroke-width="4" stroke-linejoin="round" stroke-linecap="round"/>
<path d="M1625.7 740.2 C1626.7 738.1 1630.1 730.8 1631.9 727.7 C1633.7 724.6 1635.8 722.5 1636.6 721.5" fill="none" stroke="#6e4a3a" stroke-width="4" stroke-linejoin="round" stroke-linecap="round"/>
<path d="M1571.3 461.4 L1573.8 468 L1580.8 468.3 L1575.3 472.7 L1577.2 479.5 L1571.3 475.6 L1565.4 479.5 L1567.3 472.7 L1561.8 468.3 L1568.8 468 Z" fill="#ddd2c0"/>
<path d="M1383.3 528.8 L1385.8 535.4 L1392.8 535.7 L1387.3 540.1 L1389.2 546.9 L1383.3 543 L1377.4 546.9 L1379.3 540.1 L1373.8 535.7 L1380.9 535.4 Z" fill="#ddd2c0"/>
<path d="M1644.3 478.9 L1646.3 484.2 L1651.9 484.4 L1647.5 488 L1649 493.4 L1644.3 490.3 L1639.6 493.4 L1641.1 488 L1636.7 484.4 L1642.4 484.2 Z" fill="#ddd2c0"/>
<path d="M1672.3 545.7 L1674.3 551 L1679.9 551.2 L1675.5 554.8 L1677 560.2 L1672.3 557.1 L1667.6 560.2 L1669.1 554.8 L1664.7 551.2 L1670.3 551 Z" fill="#ddd2c0"/>
<path d="M1628.2 603.8 L1630.4 609.7 L1636.7 610 L1631.8 613.9 L1633.5 620 L1628.2 616.5 L1622.9 620 L1624.6 613.9 L1619.6 610 L1626 609.7 Z" fill="#ddd2c0"/>
<path d="M1388.9 684.4 L1390.6 689 L1395.6 689.2 L1391.7 692.3 L1393 697 L1388.9 694.3 L1384.8 697 L1386.1 692.3 L1382.3 689.2 L1387.2 689 Z" fill="#ddd2c0"/>
<path d="M1450.1 1103.8 L1452.4 1109.8 L1458.7 1110.1 L1453.7 1114 L1455.4 1120.1 L1450.1 1116.6 L1444.8 1120.1 L1446.5 1114 L1441.6 1110.1 L1447.9 1109.8 Z" fill="#ddd2c0"/>
<path d="M1482.1 1298.1 L1483.7 1302.3 L1488.3 1302.5 L1484.7 1305.4 L1486 1309.8 L1482.1 1307.3 L1478.3 1309.8 L1479.5 1305.4 L1476 1302.5 L1480.5 1302.3 Z" fill="#ddd2c0"/>
<path d="M1665.1 513.8 V537.8 M1655.5 525.8 H1674.7" fill="none" stroke="#d6cbb8" stroke-width="1.6" stroke-linejoin="round" stroke-linecap="round"/>
<path d="M1343.6 697.5 V719.5 M1334.8 708.5 H1352.4" fill="none" stroke="#d6cbb8" stroke-width="1.6" stroke-linejoin="round" stroke-linecap="round"/>
<path d="M1482.8 754 V776 M1474 765 H1491.6" fill="none" stroke="#d6cbb8" stroke-width="1.6" stroke-linejoin="round" stroke-linecap="round"/>
<path d="M1489.6 818.7 V838.7 M1481.6 828.7 H1497.6" fill="none" stroke="#d6cbb8" stroke-width="1.6" stroke-linejoin="round" stroke-linecap="round"/>
<path d="M1730.7 744 V758 M1725.1 751 H1736.3" fill="none" stroke="#d6cbb8" stroke-width="1.6" stroke-linejoin="round" stroke-linecap="round"/>
<path d="M1425.3 958.9 V980.9 M1416.5 969.9 H1434.1" fill="none" stroke="#d6cbb8" stroke-width="1.6" stroke-linejoin="round" stroke-linecap="round"/>
<ellipse cx="1447" cy="750.1" rx="5.5" ry="6.5" fill="#d3c8b5"/>
<ellipse cx="1310.9" cy="767.2" rx="5.5" ry="6.5" fill="#d3c8b5"/>
<path d="M1650.5 639.2 L1672.3 628.3 L1669.2 662.5 L1692.5 660.9 L1700.3 712.2 L1684.7 678 L1656.8 673.3 L1663 636.1 Z" fill="#d9cfbd" opacity="0.75"/>
<clipPath id="cbase"><path d="M914.4 2217.9 C909 2219.9 923.9 2240.4 928.4 2247.4 C932.9 2254.5 947.1 2272 953.3 2278.5 C959.4 2285 974.3 2297.9 981.2 2303.4 C988.1 2308.8 1002.1 2320.9 1012.3 2325.1 C1022.4 2329.3 1058 2337.2 1068.2 2339.1 C1078.5 2341 1089 2340.8 1100 2341.2 C1111 2341.7 1144 2343.5 1162.1 2342.8 C1180.3 2342.1 1237.2 2337.4 1255.4 2335 C1273.5 2332.7 1304.8 2325.8 1317.5 2322.6 C1330.2 2319.3 1354 2311 1364.1 2307 C1374.3 2303.1 1397.3 2293.1 1404.5 2288.4 C1411.8 2283.7 1422.3 2272.1 1426.3 2266.6 C1430.2 2261.2 1435.8 2249.2 1438.7 2241.8 C1441.6 2234.4 1454.4 2207.1 1451.1 2203 C1447.9 2198.8 1426.3 2203.2 1410.7 2206.1 C1395.1 2209 1339.3 2223.5 1317.5 2227.8 C1295.8 2232.2 1243.9 2240.4 1224.3 2243.3 C1204.7 2246.2 1164.2 2251.8 1149.7 2252.7 C1135.2 2253.6 1113.1 2252.4 1100 2251.1 C1086.9 2249.8 1051.7 2243.6 1037.2 2241.2 C1022.6 2238.8 989.3 2233.1 975 2230.3 C960.7 2227.6 919.9 2215.9 914.4 2217.9 Z"/></clipPath>
<path d="M914.4 2217.9 C909 2219.9 923.9 2240.4 928.4 2247.4 C932.9 2254.5 947.1 2272 953.3 2278.5 C959.4 2285 974.3 2297.9 981.2 2303.4 C988.1 2308.8 1002.1 2320.9 1012.3 2325.1 C1022.4 2329.3 1058 2337.2 1068.2 2339.1 C1078.5 2341 1089 2340.8 1100 2341.2 C1111 2341.7 1144 2343.5 1162.1 2342.8 C1180.3 2342.1 1237.2 2337.4 1255.4 2335 C1273.5 2332.7 1304.8 2325.8 1317.5 2322.6 C1330.2 2319.3 1354 2311 1364.1 2307 C1374.3 2303.1 1397.3 2293.1 1404.5 2288.4 C1411.8 2283.7 1422.3 2272.1 1426.3 2266.6 C1430.2 2261.2 1435.8 2249.2 1438.7 2241.8 C1441.6 2234.4 1454.4 2207.1 1451.1 2203 C1447.9 2198.8 1426.3 2203.2 1410.7 2206.1 C1395.1 2209 1339.3 2223.5 1317.5 2227.8 C1295.8 2232.2 1243.9 2240.4 1224.3 2243.3 C1204.7 2246.2 1164.2 2251.8 1149.7 2252.7 C1135.2 2253.6 1113.1 2252.4 1100 2251.1 C1086.9 2249.8 1051.7 2243.6 1037.2 2241.2 C1022.6 2238.8 989.3 2233.1 975 2230.3 C960.7 2227.6 919.9 2215.9 914.4 2217.9 Z" fill="#d6be8c"/>
<g clip-path="url(#cbase)">
<path d="M897.3 2203.9 C894.2 2210.8 933.1 2235.9 943.9 2241.2 C954.8 2246.5 993.7 2254.3 1006.1 2256.8 C1018.5 2259.2 1058.8 2264.5 1068.2 2266.1 C1077.6 2267.7 1090.6 2272.5 1100 2272.9 C1109.4 2273.2 1151.3 2269.9 1162.1 2269.8 C1173 2269.6 1199.4 2272.2 1208.8 2271.3 C1218.1 2270.4 1242.9 2262.8 1255.4 2260.4 C1267.8 2258.1 1317.5 2251.1 1333 2248 C1348.6 2244.9 1398.3 2231.8 1410.7 2229.4 C1423.1 2226.9 1451.1 2228.1 1457.3 2223.1 C1463.5 2218.2 1508.6 2180.9 1472.9 2179.6 C1437.1 2178.4 1149.8 2211.4 1100 2210.7 C1050.2 2210 995.3 2173.5 975 2172.9 C954.7 2172.2 900.4 2197.1 897.3 2203.9 Z" fill="#a99463"/>
<path d="M968.8 2284.7 C968.8 2279.8 996.1 2305.5 1006.1 2309.6 C1016 2313.6 1058.8 2323.4 1068.2 2325.1 C1077.6 2326.9 1090.6 2326.7 1100 2327.2 C1109.4 2327.8 1149.7 2330.7 1162.1 2330.3 C1174.6 2330 1211.9 2325.8 1224.3 2324.1 C1236.7 2322.4 1274 2315.9 1286.4 2313.3 C1298.9 2310.6 1336.1 2301.3 1348.6 2297.7 C1361 2294.1 1401.4 2276.9 1410.7 2277.5 C1420 2278.1 1454.2 2295.7 1441.8 2303.9 C1429.4 2312.2 1320.6 2353.7 1286.4 2359.9 C1252.3 2366.1 1128 2366.1 1100 2366.1 C1072 2366 1019.2 2367.4 1006.1 2359.3 C993 2351.2 968.8 2289.7 968.8 2284.7 Z" fill="#f3ddae"/>
</g>
<path d="M914.4 2217.9 C909 2219.9 923.9 2240.4 928.4 2247.4 C932.9 2254.5 947.1 2272 953.3 2278.5 C959.4 2285 974.3 2297.9 981.2 2303.4 C988.1 2308.8 1002.1 2320.9 1012.3 2325.1 C1022.4 2329.3 1058 2337.2 1068.2 2339.1 C1078.5 2341 1089 2340.8 1100 2341.2 C1111 2341.7 1144 2343.5 1162.1 2342.8 C1180.3 2342.1 1237.2 2337.4 1255.4 2335 C1273.5 2332.7 1304.8 2325.8 1317.5 2322.6 C1330.2 2319.3 1354 2311 1364.1 2307 C1374.3 2303.1 1397.3 2293.1 1404.5 2288.4 C1411.8 2283.7 1422.3 2272.1 1426.3 2266.6 C1430.2 2261.2 1435.8 2249.2 1438.7 2241.8 C1441.6 2234.4 1454.4 2207.1 1451.1 2203 C1447.9 2198.8 1426.3 2203.2 1410.7 2206.1 C1395.1 2209 1339.3 2223.5 1317.5 2227.8 C1295.8 2232.2 1243.9 2240.4 1224.3 2243.3 C1204.7 2246.2 1164.2 2251.8 1149.7 2252.7 C1135.2 2253.6 1113.1 2252.4 1100 2251.1 C1086.9 2249.8 1051.7 2243.6 1037.2 2241.2 C1022.6 2238.8 989.3 2233.1 975 2230.3 C960.7 2227.6 919.9 2215.9 914.4 2217.9 Z" fill="none" stroke="#0a0a0a" stroke-width="3.2" stroke-linejoin="round" stroke-linecap="round"/>
<clipPath id="chandle"><path d="M1664.7 1533.6 C1667.6 1534.1 1679.4 1541 1686.4 1537.6 C1693.5 1534.3 1707.1 1515.9 1717.5 1508.8 C1727.9 1501.6 1751.7 1489.5 1764.1 1483.9 C1776.5 1478.3 1798.3 1469.9 1810.7 1466.8 C1823.1 1463.7 1844.9 1461.2 1857.3 1460.6 C1869.8 1460 1892.3 1460.5 1903.9 1462.1 C1915.5 1463.8 1935.2 1468.5 1944.3 1473 C1953.4 1477.6 1965.7 1488.7 1972.3 1496.3 C1978.9 1504 1989.1 1521 1994 1530.5 C1999 1540 2006.5 1557 2009.6 1567.8 C2012.7 1578.6 2016.7 1600.5 2017.3 1611.3 C2018 1622.1 2016.1 1638.6 2014.2 1648.6 C2012.4 1658.5 2006.9 1676.3 2003.4 1685.9 C1999.8 1695.4 1992.8 1710.9 1987.8 1720 C1982.9 1729.2 1973.1 1744.7 1966.1 1754.2 C1959 1763.7 1943.3 1782 1935 1791.5 C1926.7 1801 1912.2 1818.6 1903.9 1825.7 C1895.6 1832.7 1881.1 1838.9 1872.9 1844.3 C1864.6 1849.7 1852.1 1859.5 1841.8 1866.1 C1831.4 1872.7 1807.6 1886.2 1795.2 1894 C1782.8 1901.9 1761 1916.4 1748.6 1925.1 C1736.1 1933.8 1711 1950.6 1702 1959.3 C1693 1968 1686.3 1981.3 1681.2 1990.2 C1676 1999.2 1665.7 2018 1663 2026.4 C1660.4 2034.9 1660.7 2046.1 1661.2 2053.6 C1661.7 2061.1 1666.9 2076.6 1666.7 2082.6 C1666.4 2088.6 1662.8 2095.8 1659.4 2098.9 C1656 2102.1 1648.1 2105.7 1641.3 2106.2 C1634.5 2106.6 1616.2 2105 1608.7 2102.5 C1601.2 2100.1 1589.7 2092.6 1585.1 2088 C1580.6 2083.5 1576.3 2072.7 1574.3 2068.1 C1572.2 2063.5 1570.4 2055.6 1569.7 2053.6 L1596.3 1946.9 C1600.1 1944 1616.4 1930.9 1624.3 1925.1 C1632.2 1919.3 1645 1910 1655.4 1903.4 C1665.7 1896.7 1689.5 1882.9 1702 1875.4 C1714.4 1867.9 1736.1 1854.9 1748.6 1847.4 C1761 1840 1783.6 1826.1 1795.2 1819.5 C1806.8 1812.8 1825.2 1804.4 1835.6 1797.7 C1845.9 1791.1 1864.2 1777.2 1872.9 1769.8 C1881.6 1762.3 1894.2 1750.5 1900.8 1741.8 C1907.5 1733.1 1918 1714.4 1922.6 1704.5 C1927.1 1694.6 1932.7 1677.2 1935 1667.2 C1937.3 1657.3 1939.7 1640.7 1939.7 1629.9 C1939.7 1619.2 1937.3 1596.4 1935 1586.4 C1932.7 1576.5 1926.7 1562.8 1922.6 1555.4 C1918.4 1547.9 1909.3 1534.9 1903.9 1530.5 C1898.5 1526.2 1892.5 1522.7 1882.2 1522.7 C1871.8 1522.7 1839.9 1528.2 1826.3 1530.5 C1812.6 1532.8 1790.8 1536.1 1779.6 1539.8 C1768.5 1543.6 1750.6 1551.8 1742.4 1558.5 C1734.1 1565.1 1724.1 1580 1717.5 1589.5 C1710.9 1599.1 1699.3 1619.2 1692.6 1629.9 C1686 1640.7 1673.6 1663.3 1667.8 1670.3 C1662 1677.4 1655.8 1679.9 1649.1 1682.8 C1642.5 1685.7 1622.2 1690.8 1618.1 1692.1 Z"/></clipPath>
<path d="M1664.7 1533.6 C1667.6 1534.1 1679.4 1541 1686.4 1537.6 C1693.5 1534.3 1707.1 1515.9 1717.5 1508.8 C1727.9 1501.6 1751.7 1489.5 1764.1 1483.9 C1776.5 1478.3 1798.3 1469.9 1810.7 1466.8 C1823.1 1463.7 1844.9 1461.2 1857.3 1460.6 C1869.8 1460 1892.3 1460.5 1903.9 1462.1 C1915.5 1463.8 1935.2 1468.5 1944.3 1473 C1953.4 1477.6 1965.7 1488.7 1972.3 1496.3 C1978.9 1504 1989.1 1521 1994 1530.5 C1999 1540 2006.5 1557 2009.6 1567.8 C2012.7 1578.6 2016.7 1600.5 2017.3 1611.3 C2018 1622.1 2016.1 1638.6 2014.2 1648.6 C2012.4 1658.5 2006.9 1676.3 2003.4 1685.9 C1999.8 1695.4 1992.8 1710.9 1987.8 1720 C1982.9 1729.2 1973.1 1744.7 1966.1 1754.2 C1959 1763.7 1943.3 1782 1935 1791.5 C1926.7 1801 1912.2 1818.6 1903.9 1825.7 C1895.6 1832.7 1881.1 1838.9 1872.9 1844.3 C1864.6 1849.7 1852.1 1859.5 1841.8 1866.1 C1831.4 1872.7 1807.6 1886.2 1795.2 1894 C1782.8 1901.9 1761 1916.4 1748.6 1925.1 C1736.1 1933.8 1711 1950.6 1702 1959.3 C1693 1968 1686.3 1981.3 1681.2 1990.2 C1676 1999.2 1665.7 2018 1663 2026.4 C1660.4 2034.9 1660.7 2046.1 1661.2 2053.6 C1661.7 2061.1 1666.9 2076.6 1666.7 2082.6 C1666.4 2088.6 1662.8 2095.8 1659.4 2098.9 C1656 2102.1 1648.1 2105.7 1641.3 2106.2 C1634.5 2106.6 1616.2 2105 1608.7 2102.5 C1601.2 2100.1 1589.7 2092.6 1585.1 2088 C1580.6 2083.5 1576.3 2072.7 1574.3 2068.1 C1572.2 2063.5 1570.4 2055.6 1569.7 2053.6 L1596.3 1946.9 C1600.1 1944 1616.4 1930.9 1624.3 1925.1 C1632.2 1919.3 1645 1910 1655.4 1903.4 C1665.7 1896.7 1689.5 1882.9 1702 1875.4 C1714.4 1867.9 1736.1 1854.9 1748.6 1847.4 C1761 1840 1783.6 1826.1 1795.2 1819.5 C1806.8 1812.8 1825.2 1804.4 1835.6 1797.7 C1845.9 1791.1 1864.2 1777.2 1872.9 1769.8 C1881.6 1762.3 1894.2 1750.5 1900.8 1741.8 C1907.5 1733.1 1918 1714.4 1922.6 1704.5 C1927.1 1694.6 1932.7 1677.2 1935 1667.2 C1937.3 1657.3 1939.7 1640.7 1939.7 1629.9 C1939.7 1619.2 1937.3 1596.4 1935 1586.4 C1932.7 1576.5 1926.7 1562.8 1922.6 1555.4 C1918.4 1547.9 1909.3 1534.9 1903.9 1530.5 C1898.5 1526.2 1892.5 1522.7 1882.2 1522.7 C1871.8 1522.7 1839.9 1528.2 1826.3 1530.5 C1812.6 1532.8 1790.8 1536.1 1779.6 1539.8 C1768.5 1543.6 1750.6 1551.8 1742.4 1558.5 C1734.1 1565.1 1724.1 1580 1717.5 1589.5 C1710.9 1599.1 1699.3 1619.2 1692.6 1629.9 C1686 1640.7 1673.6 1663.3 1667.8 1670.3 C1662 1677.4 1655.8 1679.9 1649.1 1682.8 C1642.5 1685.7 1622.2 1690.8 1618.1 1692.1 Z" fill="#adbab9"/>
<g clip-path="url(#chandle)">
<path d="M1596.3 1946.9 C1600.1 1944 1616.4 1930.9 1624.3 1925.1 C1632.2 1919.3 1645 1910 1655.4 1903.4 C1665.7 1896.7 1689.5 1882.9 1702 1875.4 C1714.4 1867.9 1736.1 1854.9 1748.6 1847.4 C1761 1840 1783.6 1826.1 1795.2 1819.5 C1806.8 1812.8 1825.2 1804.4 1835.6 1797.7 C1845.9 1791.1 1864.2 1777.2 1872.9 1769.8 C1881.6 1762.3 1894.2 1750.5 1900.8 1741.8 C1907.5 1733.1 1918 1714.4 1922.6 1704.5 C1927.1 1694.6 1932.7 1677.2 1935 1667.2 C1937.3 1657.3 1939.7 1640.7 1939.7 1629.9 C1939.7 1619.2 1937.3 1596.4 1935 1586.4 C1932.7 1576.5 1926.7 1562.8 1922.6 1555.4 C1918.4 1547.9 1909.3 1534.9 1903.9 1530.5 C1898.5 1526.2 1892.5 1522.7 1882.2 1522.7 C1871.8 1522.7 1839.9 1528.2 1826.3 1530.5 C1812.6 1532.8 1790.8 1536.1 1779.6 1539.8 C1768.5 1543.6 1750.6 1551.8 1742.4 1558.5 C1734.1 1565.1 1724.1 1580 1717.5 1589.5 C1710.9 1599.1 1699.3 1619.2 1692.6 1629.9 C1686 1640.7 1673.6 1663.3 1667.8 1670.3 C1662 1677.4 1655.8 1679.9 1649.1 1682.8 C1642.5 1685.7 1622.2 1690.8 1618.1 1692.1" fill="none" stroke="#bdcccb" stroke-width="92" stroke-linejoin="round" stroke-linecap="round"/>
<path d="M1596.3 1946.9 C1600.1 1944 1616.4 1930.9 1624.3 1925.1 C1632.2 1919.3 1645 1910 1655.4 1903.4 C1665.7 1896.7 1689.5 1882.9 1702 1875.4 C1714.4 1867.9 1736.1 1854.9 1748.6 1847.4 C1761 1840 1783.6 1826.1 1795.2 1819.5 C1806.8 1812.8 1825.2 1804.4 1835.6 1797.7 C1845.9 1791.1 1864.2 1777.2 1872.9 1769.8 C1881.6 1762.3 1894.2 1750.5 1900.8 1741.8 C1907.5 1733.1 1918 1714.4 1922.6 1704.5 C1927.1 1694.6 1932.7 1677.2 1935 1667.2 C1937.3 1657.3 1939.7 1640.7 1939.7 1629.9 C1939.7 1619.2 1937.3 1596.4 1935 1586.4 C1932.7 1576.5 1926.7 1562.8 1922.6 1555.4 C1918.4 1547.9 1909.3 1534.9 1903.9 1530.5 C1898.5 1526.2 1892.5 1522.7 1882.2 1522.7 C1871.8 1522.7 1839.9 1528.2 1826.3 1530.5 C1812.6 1532.8 1790.8 1536.1 1779.6 1539.8 C1768.5 1543.6 1750.6 1551.8 1742.4 1558.5 C1734.1 1565.1 1724.1 1580 1717.5 1589.5 C1710.9 1599.1 1699.3 1619.2 1692.6 1629.9 C1686 1640.7 1673.6 1663.3 1667.8 1670.3 C1662 1677.4 1655.8 1679.9 1649.1 1682.8 C1642.5 1685.7 1622.2 1690.8 1618.1 1692.1" fill="none" stroke="#cfdfdf" stroke-width="46" stroke-linejoin="round" stroke-linecap="round"/>
<path d="M1554.3 1981.2 C1557.4 1971.4 1581.5 1945.7 1590.6 1937.7 C1599.6 1929.7 1632.2 1909.2 1644.9 1901.4 C1657.6 1893.7 1701.9 1868.1 1717.4 1859.8 C1732.9 1851.4 1791.7 1818.1 1800 1818.1 C1808.3 1818.1 1808.3 1850.4 1800 1859.8 C1791.7 1869.2 1730.2 1902.9 1717.4 1912.3 C1704.6 1921.7 1679.3 1945.7 1672.1 1954 C1664.9 1962.3 1648.7 1985.7 1644.9 1995.7 C1641.1 2005.6 1635.5 2042.8 1634.1 2053.6 C1632.6 2064.5 1635.3 2100.4 1630.4 2104.3 C1625.5 2108.3 1591.3 2097.1 1585.1 2093.5 C1579 2089.9 1571.4 2073.9 1568.8 2068.1 C1566.3 2062.3 1561.2 2044.2 1559.8 2035.5 C1558.3 2026.8 1551.3 1990.9 1554.3 1981.2 Z" fill="#bdcccb"/>
<path d="M1554.3 1981.2 C1557.4 1971.4 1581.5 1945.7 1590.6 1937.7 C1599.6 1929.7 1632.2 1909.2 1644.9 1901.4 C1657.6 1893.7 1701.9 1868.1 1717.4 1859.8 C1732.9 1851.4 1791.7 1819.4 1800 1818.1 C1808.3 1816.8 1808.3 1838.9 1800 1847.1 C1791.7 1855.3 1731.1 1890 1717.4 1899.6 C1703.7 1909.2 1671.6 1933.9 1663 1943.1 C1654.5 1952.4 1636.6 1981 1632.2 1992 C1627.9 2003.1 1621.2 2042.8 1619.6 2053.6 C1617.9 2064.5 1619.4 2096.7 1615.9 2100.7 C1612.5 2104.7 1589.9 2096.7 1585.1 2093.5 C1580.4 2090.2 1571.4 2073.9 1568.8 2068.1 C1566.3 2062.3 1561.2 2044.2 1559.8 2035.5 C1558.3 2026.8 1551.3 1990.9 1554.3 1981.2 Z" fill="#cfdfdf"/>
</g>
<clipPath id="cfront"><path d="M658.1 1497.5 C655.1 1484.1 656.8 1544 659.6 1550.3 C662.4 1556.7 680.6 1559 686 1561.2 C691.5 1563.4 706.9 1570 714 1572.7 C721.1 1575.4 746.8 1584.5 757.5 1587.9 C768.2 1591.3 808.8 1603.6 821.2 1606.6 C833.6 1609.5 869.5 1615.6 881.8 1617.4 C894.1 1619.3 931.5 1623.7 943.9 1625.2 C956.4 1626.8 992.1 1631.4 1006.1 1633 C1020.1 1634.5 1070.3 1639.8 1083.8 1640.7 C1097.2 1641.7 1129.4 1642.2 1140.4 1642.2 C1151.3 1642.2 1178.6 1641.3 1193.2 1640.3 C1207.8 1639.4 1267.8 1634.5 1286.4 1632.6 C1305.1 1630.6 1367 1622.6 1379.6 1620.8 C1392.2 1618.9 1405.2 1615 1412.4 1613.8 C1419.6 1612.6 1444.7 1609.6 1451.8 1608.6 C1458.8 1607.7 1477.7 1605.1 1482.9 1604.1 C1488 1603.1 1499.4 1599.7 1503.6 1598.3 C1507.7 1596.8 1519.1 1592.3 1524.3 1589.6 C1529.5 1586.9 1550.6 1574.7 1555.4 1570.9 C1560.1 1567.2 1569.9 1554.6 1571.9 1552.3 C1574 1550 1571.5 1548.5 1576.1 1547.5 C1580.6 1546.5 1608.8 1543.9 1617.5 1542.4 C1626.2 1540.8 1658.4 1532.9 1663.1 1532 C1667.8 1531.1 1665.5 1528.2 1664.7 1533.6 C1663.9 1539.1 1657.8 1574.9 1655.4 1586.4 C1652.9 1597.9 1642.9 1638 1639.8 1648.6 C1636.7 1659.1 1627.1 1682.8 1624.3 1692.1 C1621.5 1701.4 1613.7 1730.6 1611.9 1741.8 C1610 1753 1606.9 1791.5 1605.6 1803.9 C1604.4 1816.4 1600.5 1855.2 1599.4 1866.1 C1598.3 1877 1595.1 1904.6 1594.8 1912.7 C1594.5 1920.8 1597.9 1935.1 1596.3 1946.9 C1594.7 1958.6 1581.2 2019.8 1578.5 2030.5 C1575.8 2041.2 1571.4 2049.5 1569.2 2053.8 C1567 2058.2 1560.2 2067.6 1556.8 2074 C1553.3 2080.4 1540.3 2107.9 1535 2117.5 C1529.7 2127.1 1510.2 2162.9 1503.9 2170.3 C1497.7 2177.8 1482.2 2188.3 1472.9 2192.1 C1463.5 2195.8 1426.3 2203.9 1410.7 2207.6 C1395.2 2211.3 1336.1 2225.6 1317.5 2229.4 C1298.9 2233.1 1241.1 2242.4 1224.3 2244.9 C1207.5 2247.4 1162.1 2253.4 1149.7 2254.2 C1137.3 2255 1111.3 2253.8 1100 2252.7 C1088.7 2251.5 1049.7 2244.9 1037.2 2242.8 C1024.7 2240.7 987.3 2234.4 975 2231.9 C962.7 2229.4 925 2221 914.4 2217.9 C903.9 2214.8 877.6 2206 869.4 2200.8 C861.1 2195.7 839.5 2178.8 832.1 2166.6 C824.6 2154.5 802.2 2100.8 794.8 2079.6 C787.3 2058.5 765.6 1980.9 757.5 1955.4 C749.4 1929.8 720.8 1850.9 714 1823.8 C707.2 1796.6 694.7 1716.6 689.1 1683.9 C683.6 1651.3 661 1510.9 658.1 1497.5 Z"/></clipPath>
<path d="M658.1 1497.5 C655.1 1484.1 656.8 1544 659.6 1550.3 C662.4 1556.7 680.6 1559 686 1561.2 C691.5 1563.4 706.9 1570 714 1572.7 C721.1 1575.4 746.8 1584.5 757.5 1587.9 C768.2 1591.3 808.8 1603.6 821.2 1606.6 C833.6 1609.5 869.5 1615.6 881.8 1617.4 C894.1 1619.3 931.5 1623.7 943.9 1625.2 C956.4 1626.8 992.1 1631.4 1006.1 1633 C1020.1 1634.5 1070.3 1639.8 1083.8 1640.7 C1097.2 1641.7 1129.4 1642.2 1140.4 1642.2 C1151.3 1642.2 1178.6 1641.3 1193.2 1640.3 C1207.8 1639.4 1267.8 1634.5 1286.4 1632.6 C1305.1 1630.6 1367 1622.6 1379.6 1620.8 C1392.2 1618.9 1405.2 1615 1412.4 1613.8 C1419.6 1612.6 1444.7 1609.6 1451.8 1608.6 C1458.8 1607.7 1477.7 1605.1 1482.9 1604.1 C1488 1603.1 1499.4 1599.7 1503.6 1598.3 C1507.7 1596.8 1519.1 1592.3 1524.3 1589.6 C1529.5 1586.9 1550.6 1574.7 1555.4 1570.9 C1560.1 1567.2 1569.9 1554.6 1571.9 1552.3 C1574 1550 1571.5 1548.5 1576.1 1547.5 C1580.6 1546.5 1608.8 1543.9 1617.5 1542.4 C1626.2 1540.8 1658.4 1532.9 1663.1 1532 C1667.8 1531.1 1665.5 1528.2 1664.7 1533.6 C1663.9 1539.1 1657.8 1574.9 1655.4 1586.4 C1652.9 1597.9 1642.9 1638 1639.8 1648.6 C1636.7 1659.1 1627.1 1682.8 1624.3 1692.1 C1621.5 1701.4 1613.7 1730.6 1611.9 1741.8 C1610 1753 1606.9 1791.5 1605.6 1803.9 C1604.4 1816.4 1600.5 1855.2 1599.4 1866.1 C1598.3 1877 1595.1 1904.6 1594.8 1912.7 C1594.5 1920.8 1597.9 1935.1 1596.3 1946.9 C1594.7 1958.6 1581.2 2019.8 1578.5 2030.5 C1575.8 2041.2 1571.4 2049.5 1569.2 2053.8 C1567 2058.2 1560.2 2067.6 1556.8 2074 C1553.3 2080.4 1540.3 2107.9 1535 2117.5 C1529.7 2127.1 1510.2 2162.9 1503.9 2170.3 C1497.7 2177.8 1482.2 2188.3 1472.9 2192.1 C1463.5 2195.8 1426.3 2203.9 1410.7 2207.6 C1395.2 2211.3 1336.1 2225.6 1317.5 2229.4 C1298.9 2233.1 1241.1 2242.4 1224.3 2244.9 C1207.5 2247.4 1162.1 2253.4 1149.7 2254.2 C1137.3 2255 1111.3 2253.8 1100 2252.7 C1088.7 2251.5 1049.7 2244.9 1037.2 2242.8 C1024.7 2240.7 987.3 2234.4 975 2231.9 C962.7 2229.4 925 2221 914.4 2217.9 C903.9 2214.8 877.6 2206 869.4 2200.8 C861.1 2195.7 839.5 2178.8 832.1 2166.6 C824.6 2154.5 802.2 2100.8 794.8 2079.6 C787.3 2058.5 765.6 1980.9 757.5 1955.4 C749.4 1929.8 720.8 1850.9 714 1823.8 C707.2 1796.6 694.7 1716.6 689.1 1683.9 C683.6 1651.3 661 1510.9 658.1 1497.5 Z" fill="#cfdfdf"/>
<g clip-path="url(#cfront)">
<path d="M1129.5 1635.4 C1111.3 1645.7 1136.6 1714.1 1137.3 1728.6 C1138 1743.1 1140.1 1836.3 1140.4 1852.9 C1140.7 1869.4 1141.7 1962 1141.9 1977.2 C1142.2 1992.3 1143.4 2060.3 1143.5 2080 C1143.6 2099.7 1119.5 2264.1 1143.5 2272.9 C1167.5 2281.6 1477.4 2221.1 1503.9 2210.7 C1530.5 2200.4 1537.5 2129.9 1541.2 2117.5 C1545 2105.1 1557.8 2036.7 1559.9 2024.3 C1561.9 2011.9 1569.8 1938.4 1572.3 1931.1 C1574.8 1923.8 1594.5 1924.4 1597.2 1915 C1599.8 1905.7 1611.4 1805.2 1612.7 1790.7 C1613.9 1776.2 1614.8 1707.9 1615.8 1697.5 C1616.8 1687.1 1626.2 1643.6 1628.2 1635.4 C1630.3 1627.1 1646.9 1580.5 1646.9 1573.2 C1646.9 1566 1644 1526.6 1628.2 1526.6 C1612.5 1526.6 1444 1566 1410.7 1573.2 C1377.5 1580.5 1147.7 1625 1129.5 1635.4 Z" fill="#bccaca"/>
<path d="M1204.1 1635.4 C1190.5 1645.7 1206.9 1714.1 1207.2 1728.6 C1207.5 1743.1 1208.5 1836.3 1208.8 1852.9 C1209 1869.4 1210.1 1962 1210.3 1977.2 C1210.5 1992.3 1212 2060.3 1211.9 2080 C1211.8 2099.7 1189.3 2264.1 1208.8 2272.9 C1228.2 2281.6 1482.2 2221.1 1503.9 2210.7 C1525.7 2200.4 1531.7 2129.9 1535 2117.5 C1538.3 2105.1 1551.6 2036.7 1553.7 2024.3 C1555.7 2011.9 1563.6 1938.4 1566.1 1931.1 C1568.6 1923.8 1588.2 1924.4 1590.9 1915 C1593.6 1905.7 1605.2 1805.2 1606.5 1790.7 C1607.7 1776.2 1608.5 1707.9 1609.6 1697.5 C1610.6 1687.1 1619.9 1643.6 1622 1635.4 C1624.1 1627.1 1640.2 1580.5 1640.7 1573.2 C1641.1 1566 1643.6 1526.6 1628.2 1526.6 C1612.9 1526.6 1439 1566 1410.7 1573.2 C1382.4 1580.5 1217.7 1625 1204.1 1635.4 Z" fill="#adbab9"/>
</g>
<path d="M815 1935.2 C816.9 1934.9 835.1 1941.4 838.3 1942.9 C841.5 1944.5 850.2 1953.7 853.8 1953.8 C857.5 1953.9 876.4 1945.5 881.8 1944.5 C887.2 1943.4 914.2 1940 919.1 1941.4 C924 1942.8 937.7 1960.7 940.8 1961.6 C943.9 1962.5 951.4 1952.8 956.4 1952.3 C961.3 1951.7 994.2 1954.3 999.9 1955.4 C1005.6 1956.4 1020.3 1963.1 1024.7 1964.7 C1029.1 1966.2 1044.3 1974.1 1052.7 1974 C1061 1973.9 1115.7 1964.3 1124.9 1963.2 C1134 1962.1 1156.7 1960.9 1162.1 1961 C1167.6 1961.1 1186.2 1963.9 1190.1 1964.7 C1194 1965.6 1204.6 1971.2 1208.8 1970.9 C1212.9 1970.7 1233.9 1962.1 1239.8 1961.6 C1245.8 1961.1 1274.3 1965.2 1280.2 1964.7 C1286.2 1964.2 1305.1 1957 1311.3 1955.4 C1317.5 1953.8 1349.1 1946.1 1354.8 1946.1 C1360.5 1946.1 1376 1955.7 1379.6 1955.4 C1383.3 1955.1 1393.6 1944.5 1398.3 1943 C1403 1941.4 1429.6 1936.5 1435.6 1936.8 C1441.5 1937 1465.1 1946.1 1469.8 1946.1 C1474.4 1946.1 1486.1 1938.3 1491.5 1936.8 C1496.9 1935.2 1530.9 1927.7 1535 1927.4 C1539.2 1927.2 1539.2 1934.7 1541.2 1933.7 C1543.3 1932.6 1556.8 1917.6 1559.9 1915 C1563 1912.4 1575.7 1903.9 1578.5 1902.6 C1581.4 1901.3 1592.7 1898.6 1594 1899.5 C1595.3 1900.4 1595.3 1912.2 1594 1913.5 C1592.7 1914.7 1581.1 1913.8 1578.5 1915 C1575.9 1916.2 1565.6 1924.6 1563 1927.4 C1560.4 1930.3 1548.7 1946.1 1547.4 1949.2 C1546.1 1952.3 1548.5 1965.5 1547.4 1964.7 C1546.4 1963.9 1538.9 1941.5 1535 1939.9 C1531.1 1938.2 1505.7 1943 1500.8 1944.5 C1495.9 1946.1 1478.4 1956 1476 1958.5 C1473.5 1961 1472.9 1974.8 1471.3 1974 C1469.8 1973.3 1461.3 1951.5 1457.3 1949.2 C1453.3 1946.9 1428.1 1945.6 1423.1 1946.1 C1418.2 1946.6 1401.9 1952.6 1398.3 1955.4 C1394.7 1958.2 1382.2 1980 1379.6 1980.3 C1377.1 1980.5 1371.4 1960.3 1367.2 1958.5 C1363.1 1956.7 1335.6 1957.7 1329.9 1958.5 C1324.2 1959.3 1302.7 1965.2 1298.9 1967.8 C1295 1970.4 1285.9 1989.1 1283.3 1989.6 C1280.7 1990.1 1271.7 1975.6 1267.8 1974 C1263.9 1972.5 1241.4 1970.2 1236.7 1970.9 C1232.1 1971.7 1214.3 1980.8 1211.9 1983.4 C1209.4 1986 1209 2002.5 1207.2 2002 C1205.4 2001.5 1193.9 1979.6 1190.1 1977.2 C1186.4 1974.7 1167.1 1972.7 1162.1 1972.5 C1157.2 1972.2 1140.5 1972.9 1131.1 1974 C1121.7 1975.2 1058.4 1986.3 1049.6 1986.4 C1040.7 1986.6 1028.9 1977.4 1024.7 1975.6 C1020.6 1973.7 1004.8 1966.1 999.9 1964.7 C994.9 1963.3 970.1 1957.2 965.7 1958.5 C961.3 1959.8 949.6 1980 947 1980.2 C944.5 1980.5 937.7 1964.2 934.6 1961.6 C931.5 1959 914.4 1949.9 909.8 1949.1 C905.1 1948.4 883.3 1950.7 878.7 1952.3 C874 1953.8 856.5 1967.5 853.8 1967.8 C851.1 1968 848.1 1957.2 846.1 1955.4 C844 1953.5 831.6 1946.8 829 1946 C826.4 1945.3 816.2 1946.9 815 1946 C813.8 1945.1 813 1935.4 815 1935.2 Z" fill="#d9b878" stroke="#0a0a0a" stroke-width="2.6" stroke-linejoin="round" stroke-linecap="round"/>
<path d="M1207.2 2002 L1202.5 2017.5 L1215 2039.3 L1221.2 2020.7 Z" fill="#d9b878" stroke="#0a0a0a" stroke-width="2.6" stroke-linejoin="round" stroke-linecap="round"/>
<path d="M1281.8 1988 L1270.9 2005.1 L1280.2 2019.1 L1292.6 2005.1 Z" fill="#d9b878" stroke="#0a0a0a" stroke-width="2.6" stroke-linejoin="round" stroke-linecap="round"/>
<path d="M1379.6 1980.3 L1368.8 1992.7 L1379.6 2006.7 L1391.5 1994.2 Z" fill="#d9b878" stroke="#0a0a0a" stroke-width="2.6" stroke-linejoin="round" stroke-linecap="round"/>
<path d="M1472.9 1972.5 L1463.5 1983.4 L1476 1998.9 L1488.4 1984.9 Z" fill="#d9b878" stroke="#0a0a0a" stroke-width="2.6" stroke-linejoin="round" stroke-linecap="round"/>
<path d="M1547.4 1966.3 L1538.1 1975.6 L1552.1 1989.6 L1560.5 1977.2 Z" fill="#d9b878" stroke="#0a0a0a" stroke-width="2.6" stroke-linejoin="round" stroke-linecap="round"/>
<path d="M847.6 1970.9 L835.2 1983.3 L847.6 1998.9 L858.5 1983.3 Z" fill="#f0d79b" stroke="#0a0a0a" stroke-width="2.6" stroke-linejoin="round" stroke-linecap="round"/>
<path d="M942.4 1983.3 L932.1 1994.2 L943 2006.6 L953.3 1994.2 Z" fill="#f0d79b" stroke="#0a0a0a" stroke-width="2.6" stroke-linejoin="round" stroke-linecap="round"/>
<path d="M1040.3 1994.2 L1030.3 2005.1 L1043.4 2021.2 L1052.7 2011.3 Z" fill="#f0d79b" stroke="#0a0a0a" stroke-width="2.6" stroke-linejoin="round" stroke-linecap="round"/>
<clipPath id="ctot"><path d="M1161.3 1672.7 C1162.7 1672.7 1169.6 1681 1171.1 1682.9 C1172.6 1684.8 1181.1 1696.1 1181.9 1698.7 C1182.8 1701.3 1183.1 1714.6 1182.9 1718.3 C1182.8 1722.1 1179 1749.4 1180 1749.8 C1181 1750.2 1194 1728.1 1196.7 1724.2 C1199.4 1720.3 1213.5 1700.9 1216.4 1696.7 C1219.2 1692.6 1233.4 1669.6 1235 1667.6 C1236.7 1665.6 1237.4 1668 1238.4 1669.2 C1239.3 1670.3 1248.3 1679.3 1247.8 1682.9 C1247.4 1686.5 1234.7 1712.9 1232.1 1718.3 C1229.5 1723.8 1215.2 1752.3 1212.4 1757.7 C1209.7 1763 1197.1 1786.9 1194.7 1791.1 C1192.3 1795.3 1180.4 1811.7 1180 1814.7 C1179.5 1817.7 1188.5 1830.1 1188.8 1832.4 C1189.2 1834.7 1185.8 1844.2 1184.9 1846.2 C1184 1848.2 1176.7 1858.4 1177 1860 C1177.3 1861.5 1188.4 1866.5 1188.8 1867.8 C1189.3 1869.1 1184 1876.7 1182.9 1877.7 C1181.8 1878.6 1174.8 1878.6 1174.1 1880.6 C1173.3 1882.6 1173.2 1901.8 1173.1 1905.2 C1173 1908.6 1172.4 1924.1 1173.1 1926.8 C1173.8 1929.6 1181.7 1940.5 1182.9 1942.6 C1184.1 1944.6 1190.2 1953.9 1189.8 1954.4 C1189.4 1954.8 1179.7 1949.5 1178 1948.5 C1176.3 1947.4 1168.3 1939.3 1167.2 1939.6 C1166 1940 1163 1953.4 1162.3 1953.4 C1161.5 1953.4 1158.6 1940 1157.3 1939.6 C1156.1 1939.3 1147.3 1947.4 1145.5 1948.5 C1143.8 1949.5 1134 1954.8 1133.7 1954.4 C1133.5 1953.9 1140.6 1944.4 1141.6 1942.6 C1142.6 1940.7 1147.1 1931.5 1147.5 1928.8 C1147.9 1926.1 1147.6 1908.7 1147.5 1905.2 C1147.4 1901.7 1147.3 1882.7 1146.5 1880.6 C1145.8 1878.5 1138.6 1877.6 1137.7 1876.7 C1136.7 1875.7 1133.2 1869.1 1133.7 1867.8 C1134.3 1866.6 1145.3 1861.5 1145.5 1860 C1145.8 1858.4 1138.5 1848.2 1137.7 1846.2 C1136.9 1844.2 1134.4 1834.6 1134.7 1832.4 C1135 1830.3 1142.3 1819.7 1141.6 1816.7 C1141 1813.7 1128.5 1795.6 1125.9 1791.1 C1123.3 1786.6 1109.1 1761.3 1106.2 1755.7 C1103.3 1750.1 1088.9 1719.8 1086.5 1714.4 C1084.2 1709 1074.8 1685.3 1074.7 1682 C1074.7 1678.6 1085.2 1669.4 1086.1 1668.4 C1087.1 1667.3 1086.8 1665.5 1088.1 1667.6 C1089.4 1669.7 1101.5 1692.4 1104.2 1696.7 C1107 1701 1123.1 1722.2 1125.9 1726.2 C1128.7 1730.2 1141.5 1751.4 1142.6 1750.8 C1143.7 1750.2 1140.8 1722.2 1140.6 1718.3 C1140.5 1714.5 1139.8 1701.3 1140.6 1698.7 C1141.4 1696.1 1149.9 1684.8 1151.4 1682.9 C1153 1681 1159.8 1672.7 1161.3 1672.7 Z"/></clipPath>
<path d="M1161.3 1672.7 C1162.7 1672.7 1169.6 1681 1171.1 1682.9 C1172.6 1684.8 1181.1 1696.1 1181.9 1698.7 C1182.8 1701.3 1183.1 1714.6 1182.9 1718.3 C1182.8 1722.1 1179 1749.4 1180 1749.8 C1181 1750.2 1194 1728.1 1196.7 1724.2 C1199.4 1720.3 1213.5 1700.9 1216.4 1696.7 C1219.2 1692.6 1233.4 1669.6 1235 1667.6 C1236.7 1665.6 1237.4 1668 1238.4 1669.2 C1239.3 1670.3 1248.3 1679.3 1247.8 1682.9 C1247.4 1686.5 1234.7 1712.9 1232.1 1718.3 C1229.5 1723.8 1215.2 1752.3 1212.4 1757.7 C1209.7 1763 1197.1 1786.9 1194.7 1791.1 C1192.3 1795.3 1180.4 1811.7 1180 1814.7 C1179.5 1817.7 1188.5 1830.1 1188.8 1832.4 C1189.2 1834.7 1185.8 1844.2 1184.9 1846.2 C1184 1848.2 1176.7 1858.4 1177 1860 C1177.3 1861.5 1188.4 1866.5 1188.8 1867.8 C1189.3 1869.1 1184 1876.7 1182.9 1877.7 C1181.8 1878.6 1174.8 1878.6 1174.1 1880.6 C1173.3 1882.6 1173.2 1901.8 1173.1 1905.2 C1173 1908.6 1172.4 1924.1 1173.1 1926.8 C1173.8 1929.6 1181.7 1940.5 1182.9 1942.6 C1184.1 1944.6 1190.2 1953.9 1189.8 1954.4 C1189.4 1954.8 1179.7 1949.5 1178 1948.5 C1176.3 1947.4 1168.3 1939.3 1167.2 1939.6 C1166 1940 1163 1953.4 1162.3 1953.4 C1161.5 1953.4 1158.6 1940 1157.3 1939.6 C1156.1 1939.3 1147.3 1947.4 1145.5 1948.5 C1143.8 1949.5 1134 1954.8 1133.7 1954.4 C1133.5 1953.9 1140.6 1944.4 1141.6 1942.6 C1142.6 1940.7 1147.1 1931.5 1147.5 1928.8 C1147.9 1926.1 1147.6 1908.7 1147.5 1905.2 C1147.4 1901.7 1147.3 1882.7 1146.5 1880.6 C1145.8 1878.5 1138.6 1877.6 1137.7 1876.7 C1136.7 1875.7 1133.2 1869.1 1133.7 1867.8 C1134.3 1866.6 1145.3 1861.5 1145.5 1860 C1145.8 1858.4 1138.5 1848.2 1137.7 1846.2 C1136.9 1844.2 1134.4 1834.6 1134.7 1832.4 C1135 1830.3 1142.3 1819.7 1141.6 1816.7 C1141 1813.7 1128.5 1795.6 1125.9 1791.1 C1123.3 1786.6 1109.1 1761.3 1106.2 1755.7 C1103.3 1750.1 1088.9 1719.8 1086.5 1714.4 C1084.2 1709 1074.8 1685.3 1074.7 1682 C1074.7 1678.6 1085.2 1669.4 1086.1 1668.4 C1087.1 1667.3 1086.8 1665.5 1088.1 1667.6 C1089.4 1669.7 1101.5 1692.4 1104.2 1696.7 C1107 1701 1123.1 1722.2 1125.9 1726.2 C1128.7 1730.2 1141.5 1751.4 1142.6 1750.8 C1143.7 1750.2 1140.8 1722.2 1140.6 1718.3 C1140.5 1714.5 1139.8 1701.3 1140.6 1698.7 C1141.4 1696.1 1149.9 1684.8 1151.4 1682.9 C1153 1681 1159.8 1672.7 1161.3 1672.7 Z" fill="#e0c489"/>
<g clip-path="url(#ctot)">
<path d="M1059 1659.3 L1129.8 1659.3 L1135.7 1797 L1137.7 1974 L1059 1974 Z" fill="#f1d89b"/>
<path d="M1204.6 1659.3 L1255.7 1659.3 L1255.7 1816.7 L1204.6 1816.7 Z" fill="#d8ba7c"/>
</g>
<path d="M1161.3 1672.7 C1162.7 1672.7 1169.6 1681 1171.1 1682.9 C1172.6 1684.8 1181.1 1696.1 1181.9 1698.7 C1182.8 1701.3 1183.1 1714.6 1182.9 1718.3 C1182.8 1722.1 1179 1749.4 1180 1749.8 C1181 1750.2 1194 1728.1 1196.7 1724.2 C1199.4 1720.3 1213.5 1700.9 1216.4 1696.7 C1219.2 1692.6 1233.4 1669.6 1235 1667.6 C1236.7 1665.6 1237.4 1668 1238.4 1669.2 C1239.3 1670.3 1248.3 1679.3 1247.8 1682.9 C1247.4 1686.5 1234.7 1712.9 1232.1 1718.3 C1229.5 1723.8 1215.2 1752.3 1212.4 1757.7 C1209.7 1763 1197.1 1786.9 1194.7 1791.1 C1192.3 1795.3 1180.4 1811.7 1180 1814.7 C1179.5 1817.7 1188.5 1830.1 1188.8 1832.4 C1189.2 1834.7 1185.8 1844.2 1184.9 1846.2 C1184 1848.2 1176.7 1858.4 1177 1860 C1177.3 1861.5 1188.4 1866.5 1188.8 1867.8 C1189.3 1869.1 1184 1876.7 1182.9 1877.7 C1181.8 1878.6 1174.8 1878.6 1174.1 1880.6 C1173.3 1882.6 1173.2 1901.8 1173.1 1905.2 C1173 1908.6 1172.4 1924.1 1173.1 1926.8 C1173.8 1929.6 1181.7 1940.5 1182.9 1942.6 C1184.1 1944.6 1190.2 1953.9 1189.8 1954.4 C1189.4 1954.8 1179.7 1949.5 1178 1948.5 C1176.3 1947.4 1168.3 1939.3 1167.2 1939.6 C1166 1940 1163 1953.4 1162.3 1953.4 C1161.5 1953.4 1158.6 1940 1157.3 1939.6 C1156.1 1939.3 1147.3 1947.4 1145.5 1948.5 C1143.8 1949.5 1134 1954.8 1133.7 1954.4 C1133.5 1953.9 1140.6 1944.4 1141.6 1942.6 C1142.6 1940.7 1147.1 1931.5 1147.5 1928.8 C1147.9 1926.1 1147.6 1908.7 1147.5 1905.2 C1147.4 1901.7 1147.3 1882.7 1146.5 1880.6 C1145.8 1878.5 1138.6 1877.6 1137.7 1876.7 C1136.7 1875.7 1133.2 1869.1 1133.7 1867.8 C1134.3 1866.6 1145.3 1861.5 1145.5 1860 C1145.8 1858.4 1138.5 1848.2 1137.7 1846.2 C1136.9 1844.2 1134.4 1834.6 1134.7 1832.4 C1135 1830.3 1142.3 1819.7 1141.6 1816.7 C1141 1813.7 1128.5 1795.6 1125.9 1791.1 C1123.3 1786.6 1109.1 1761.3 1106.2 1755.7 C1103.3 1750.1 1088.9 1719.8 1086.5 1714.4 C1084.2 1709 1074.8 1685.3 1074.7 1682 C1074.7 1678.6 1085.2 1669.4 1086.1 1668.4 C1087.1 1667.3 1086.8 1665.5 1088.1 1667.6 C1089.4 1669.7 1101.5 1692.4 1104.2 1696.7 C1107 1701 1123.1 1722.2 1125.9 1726.2 C1128.7 1730.2 1141.5 1751.4 1142.6 1750.8 C1143.7 1750.2 1140.8 1722.2 1140.6 1718.3 C1140.5 1714.5 1139.8 1701.3 1140.6 1698.7 C1141.4 1696.1 1149.9 1684.8 1151.4 1682.9 C1153 1681 1159.8 1672.7 1161.3 1672.7 Z" fill="none" stroke="#0a0a0a" stroke-width="2.6" stroke-linejoin="round" stroke-linecap="round"/>
<path d="M1126.9 1651.5 C1127.7 1650.8 1130 1649.8 1131.8 1652.5 C1133.5 1655.1 1139.3 1667.8 1140 1671.1 C1140.8 1674.5 1138.7 1677.2 1137.7 1677.4 C1136.6 1677.7 1133.8 1675.8 1132.2 1673.1 C1130.5 1670.4 1126.2 1660.3 1125.5 1657.4 C1124.8 1654.5 1126 1652.1 1126.9 1651.5 Z" fill="#f1d89b" stroke="#0a0a0a" stroke-width="2.6" stroke-linejoin="round" stroke-linecap="round"/>
<path d="M1155.4 1651.1 C1156.4 1649.3 1166.1 1648.8 1167.2 1650.5 C1168.2 1652.2 1169.2 1669.7 1168.2 1671.5 C1167.2 1673.3 1156.4 1673.8 1155.4 1672.1 C1154.3 1670.4 1154.4 1652.9 1155.4 1651.1 Z" fill="#e6ca8d" stroke="#0a0a0a" stroke-width="2.6" stroke-linejoin="round" stroke-linecap="round"/>
<path d="M1196.7 1651.1 C1197.6 1651.2 1199.6 1653.2 1198.7 1656.4 C1197.7 1659.6 1191.8 1672.2 1189.8 1675.1 C1187.8 1678 1184.7 1678.7 1183.9 1678 C1183.1 1677.4 1182.9 1673.2 1183.9 1670.2 C1185 1667.1 1190.1 1657.9 1191.8 1655.4 C1193.5 1652.9 1195.8 1650.9 1196.7 1651.1 Z" fill="#e0c489" stroke="#0a0a0a" stroke-width="2.6" stroke-linejoin="round" stroke-linecap="round"/>
<path d="M1255.7 1696.7 C1255.4 1695.1 1255 1690.9 1257.7 1687.9 C1260.3 1684.8 1272.2 1675.5 1275.4 1674.1 C1278.5 1672.6 1281.3 1675.2 1281.3 1677 C1281.3 1678.9 1278.2 1684.8 1275.4 1687.9 C1272.5 1690.9 1262.2 1698.5 1259.6 1699.7 C1257 1700.8 1256 1698.3 1255.7 1696.7 Z" fill="#d8ba7c" stroke="#0a0a0a" stroke-width="2.6" stroke-linejoin="round" stroke-linecap="round"/>
<path d="M1249.4 1734.1 C1249.7 1732.4 1252.2 1729.9 1255.7 1729.2 C1259.2 1728.4 1272.2 1727.7 1275.4 1728.2 C1278.6 1728.7 1280 1731.5 1279.7 1733.1 C1279.4 1734.7 1276.9 1738.8 1273.4 1740 C1269.9 1741.2 1256.9 1742.7 1253.7 1741.9 C1250.5 1741.2 1249.1 1735.8 1249.4 1734.1 Z" fill="#d8ba7c" stroke="#0a0a0a" stroke-width="2.6" stroke-linejoin="round" stroke-linecap="round"/>
<path d="M1246.8 1771.4 C1247.1 1769.8 1250.1 1767.8 1253.7 1767.9 C1257.4 1768 1271.1 1770.8 1274.4 1772.4 C1277.7 1774.1 1278.7 1778.5 1278.3 1780.3 C1277.9 1782.1 1275 1786.2 1271.4 1786.2 C1267.9 1786.2 1255 1782.3 1251.8 1780.3 C1248.5 1778.3 1246.6 1773.1 1246.8 1771.4 Z" fill="#d8ba7c" stroke="#0a0a0a" stroke-width="2.6" stroke-linejoin="round" stroke-linecap="round"/>
<path d="M1042.3 1677 C1042 1674.7 1044.5 1672.1 1047.2 1673.1 C1050 1674.2 1060.1 1681.9 1062.9 1684.9 C1065.8 1687.9 1068.7 1693.8 1068.8 1695.7 C1069 1697.7 1066.5 1700.3 1063.9 1699.7 C1061.3 1699 1052.1 1693.8 1049.2 1690.8 C1046.3 1687.8 1042.6 1679.4 1042.3 1677 Z" fill="#f1d89b" stroke="#0a0a0a" stroke-width="2.6" stroke-linejoin="round" stroke-linecap="round"/>
<path d="M1043.7 1733.1 C1043.9 1731.4 1047.5 1728.6 1051.1 1728.2 C1054.8 1727.8 1067.8 1729.1 1070.8 1730.1 C1073.8 1731.2 1074.3 1734.4 1073.8 1736 C1073.2 1737.7 1070.2 1741.7 1066.9 1742.3 C1063.6 1743 1052.3 1742.2 1049.2 1741 C1046.1 1739.7 1043.4 1734.8 1043.7 1733.1 Z" fill="#f1d89b" stroke="#0a0a0a" stroke-width="2.6" stroke-linejoin="round" stroke-linecap="round"/>
<path d="M1044.8 1777.3 C1045.1 1775.3 1049.4 1771.7 1053.1 1770.5 C1056.8 1769.2 1069.6 1767.3 1072.8 1767.9 C1075.9 1768.6 1077.2 1773.4 1076.7 1775.4 C1076.2 1777.4 1072.2 1781.5 1068.8 1782.9 C1065.4 1784.2 1054.3 1786.3 1051.1 1785.6 C1047.9 1784.9 1044.6 1779.4 1044.8 1777.3 Z" fill="#f1d89b" stroke="#0a0a0a" stroke-width="2.6" stroke-linejoin="round" stroke-linecap="round"/>
<path d="M978.1 1715 C977.3 1712.7 986.8 1709.1 990.5 1710.3 C994.3 1711.6 1002.8 1718.7 1006.1 1724.3 C1009.3 1729.9 1014.6 1745.3 1014.8 1752.3 C1015 1759.3 1011.3 1772.2 1007.6 1777.2 C1004 1782.1 991 1788.5 987.4 1789.6 C983.9 1790.6 980 1787.4 981.2 1784.9 C982.5 1782.4 993.9 1775.7 996.8 1770.9 C999.7 1766.2 1003 1755 1003 1749.2 C1003 1743.4 1000.1 1732 996.8 1727.4 C993.4 1722.9 978.9 1717.3 978.1 1715 Z" fill="#f0d79b" stroke="#0a0a0a" stroke-width="2.6" stroke-linejoin="round" stroke-linecap="round"/>
<path d="M830.5 1873 C833 1870.7 843.7 1869.7 847.6 1869.9 C851.5 1870.1 860.2 1872.7 860 1874.6 C859.8 1876.4 848.3 1880.6 846.1 1883.9 C843.8 1887.2 841.9 1895.9 843 1899.4 C844 1903 850.7 1909.1 853.8 1910.3 C856.9 1911.5 863.8 1907.9 866.3 1908.8 C868.7 1909.6 872.9 1914.4 872.5 1916.5 C872.1 1918.6 866.5 1923.9 863.1 1924.3 C859.8 1924.7 851.5 1922.3 847.6 1919.6 C843.7 1916.9 836.1 1908.4 833.6 1904.1 C831.1 1899.7 829.4 1891.1 829 1887 C828.6 1882.9 828 1875.3 830.5 1873 Z" fill="#f0d79b" stroke="#0a0a0a" stroke-width="2.6" stroke-linejoin="round" stroke-linecap="round"/>
<path d="M681.4 1576.7 C679.2 1573 682.8 1574.6 686 1578.3 C689.3 1582 711.8 1610.3 714 1614 C716.2 1617.8 711.1 1619.3 707.8 1615.6 C704.5 1611.8 683.6 1580.5 681.4 1576.7 Z" fill="#f0d79b" stroke="#0a0a0a" stroke-width="2.6" stroke-linejoin="round" stroke-linecap="round"/>
<path d="M732.6 1604.7 C732.4 1602.2 735.3 1603.8 736.4 1606.3 C737.5 1608.7 743.3 1627.1 743.5 1629.6 C743.8 1632 739.9 1633.6 738.9 1631.1 C737.8 1628.6 732.9 1607.2 732.6 1604.7 Z" fill="#f0d79b" stroke="#0a0a0a" stroke-width="2.6" stroke-linejoin="round" stroke-linecap="round"/>
<path d="M751.3 1614 C751.4 1612.2 754.1 1613.6 755 1615.6 C755.9 1617.6 760.1 1632.4 760 1634.2 C759.9 1636.1 755.3 1636.2 754.4 1634.2 C753.5 1632.2 751.2 1615.9 751.3 1614 Z" fill="#f0d79b" stroke="#0a0a0a" stroke-width="2.6" stroke-linejoin="round" stroke-linecap="round"/>
<path d="M1438.1 1878 C1439.3 1876.6 1440.9 1857 1440.6 1850 C1440.4 1843 1438.1 1829.7 1436.1 1825.1 C1434.1 1820.6 1429.3 1816.7 1425.7 1815.8 C1422.1 1815 1413.3 1816.9 1409.1 1818.9 C1405 1821 1397.5 1827.5 1394.6 1831.4 C1391.7 1835.2 1388.1 1844.3 1387.4 1847.9 C1386.7 1851.5 1387.9 1856.8 1389.5 1858.3 C1391 1859.8 1396.9 1860.4 1398.8 1859.3 C1400.7 1858.2 1403.4 1852.4 1404 1850 C1404.5 1847.7 1402 1843.7 1402.9 1841.7 C1403.9 1839.8 1408.5 1836.1 1411.2 1835.5 C1414 1835 1420.9 1834.3 1423.6 1837.6 C1426.4 1840.9 1430 1855 1431.9 1860.4 C1433.9 1865.7 1437 1879.4 1438.1 1878 Z" fill="#d9b878" stroke="#0a0a0a" stroke-width="2.6" stroke-linejoin="round" stroke-linecap="round"/>
<path d="M1343.9 1715.8 C1342 1715.4 1336.4 1712.4 1332.5 1713.7 C1328.6 1715 1323.7 1718.2 1320.5 1723.6 C1317.3 1729.1 1314 1738.8 1313.2 1746.4 C1312.5 1754 1313.4 1762.7 1315.9 1769.2 C1318.4 1775.8 1322.5 1781.8 1328.4 1785.8 C1334.2 1789.8 1343.5 1792.5 1351.1 1793.5 C1358.7 1794.4 1368 1793.7 1373.9 1791.4 C1379.9 1789.1 1383.5 1784.1 1386.8 1779.6 C1390.1 1775 1391.1 1764.7 1393.6 1764 C1396.1 1763.4 1397.9 1773.7 1401.9 1775.8 C1405.9 1778 1411.7 1778.7 1417.4 1776.9 C1423.1 1775.1 1430.6 1770.2 1436.1 1765.1 C1441.6 1760 1447.1 1751.2 1450.6 1746.4 C1454 1741.7 1454.4 1736.4 1456.8 1736.5 C1459.1 1736.6 1461.6 1746.5 1464.7 1746.8 C1467.8 1747.2 1472.3 1739.3 1475.4 1738.6 C1478.6 1737.8 1479.9 1741.3 1483.7 1742.3 C1487.5 1743.3 1494.3 1741.6 1498.2 1744.4 C1502.1 1747.1 1505.9 1752.3 1507.1 1758.9 C1508.3 1765.4 1508 1774.1 1505.5 1783.7 C1502.9 1793.4 1498.4 1805.8 1492 1816.9 C1485.6 1827.9 1475.4 1840.3 1467.1 1850 C1458.9 1859.7 1446.4 1870.7 1442.3 1874.9" fill="none" stroke="#0a0a0a" stroke-width="11.7" stroke-linejoin="round" stroke-linecap="round"/>
<path d="M1343.9 1715.8 C1342 1715.4 1336.4 1712.4 1332.5 1713.7 C1328.6 1715 1323.7 1718.2 1320.5 1723.6 C1317.3 1729.1 1314 1738.8 1313.2 1746.4 C1312.5 1754 1313.4 1762.7 1315.9 1769.2 C1318.4 1775.8 1322.5 1781.8 1328.4 1785.8 C1334.2 1789.8 1343.5 1792.5 1351.1 1793.5 C1358.7 1794.4 1368 1793.7 1373.9 1791.4 C1379.9 1789.1 1383.5 1784.1 1386.8 1779.6 C1390.1 1775 1391.1 1764.7 1393.6 1764 C1396.1 1763.4 1397.9 1773.7 1401.9 1775.8 C1405.9 1778 1411.7 1778.7 1417.4 1776.9 C1423.1 1775.1 1430.6 1770.2 1436.1 1765.1 C1441.6 1760 1447.1 1751.2 1450.6 1746.4 C1454 1741.7 1454.4 1736.4 1456.8 1736.5 C1459.1 1736.6 1461.6 1746.5 1464.7 1746.8 C1467.8 1747.2 1472.3 1739.3 1475.4 1738.6 C1478.6 1737.8 1479.9 1741.3 1483.7 1742.3 C1487.5 1743.3 1494.3 1741.6 1498.2 1744.4 C1502.1 1747.1 1505.9 1752.3 1507.1 1758.9 C1508.3 1765.4 1508 1774.1 1505.5 1783.7 C1502.9 1793.4 1498.4 1805.8 1492 1816.9 C1485.6 1827.9 1475.4 1840.3 1467.1 1850 C1458.9 1859.7 1446.4 1870.7 1442.3 1874.9" fill="none" stroke="#d9b878" stroke-width="6.5" stroke-linejoin="round" stroke-linecap="round"/>
<path d="M1346.6 1717 C1346.4 1716.1 1343.4 1713.2 1341.8 1712.3 C1340.2 1711.3 1336.4 1709.6 1334.6 1709.6 C1332.8 1709.6 1328.1 1711.6 1328.4 1712.3 C1328.6 1712.9 1334.7 1713.4 1336.6 1714.3 C1338.6 1715.3 1341.5 1719.1 1342.9 1719.5 C1344.2 1719.9 1346.7 1718 1346.6 1717 Z" fill="#0a0a0a"/>
<path d="M1437.1 1877.7 C1437.4 1876 1465.6 1860.3 1472.9 1852.9 C1480.2 1845.4 1503.9 1814 1510.2 1803.1 C1516.4 1792.3 1531.3 1754.7 1535 1744.1 C1538.7 1733.5 1546 1705.3 1547.4 1697.5 C1548.8 1689.7 1548.4 1668.3 1549 1666.4 C1549.6 1664.6 1551.9 1683.5 1553.7 1678.9 C1555.4 1674.2 1563.9 1623.6 1566.1 1619.8 C1568.3 1616.1 1573.1 1642.8 1575.4 1641.6 C1577.7 1640.3 1587.7 1608.6 1589.4 1607.4 C1591.1 1606.2 1587.2 1632.1 1592.5 1629.1 C1597.8 1626.2 1640.5 1577.3 1642.2 1577.9 C1643.9 1578.5 1612.1 1629.1 1609.6 1635.4 C1607.1 1641.6 1618.9 1638.2 1617.3 1640 C1615.8 1641.9 1595.6 1651.8 1594 1654 C1592.5 1656.2 1603.1 1659.9 1601.8 1661.8 C1600.6 1663.6 1583.3 1670.5 1581.6 1672.6 C1579.9 1674.8 1586.3 1681.3 1584.7 1683.5 C1583.2 1685.7 1569.8 1686.8 1566.1 1694.4 C1562.4 1702 1551.8 1747.2 1547.4 1759.6 C1543.1 1772.1 1529.1 1807.8 1522.6 1818.7 C1516.1 1829.6 1485.3 1861.9 1482.2 1868.4 C1479.1 1874.9 1491.5 1879.9 1491.5 1883.9 C1491.5 1888 1485 1905.1 1482.2 1908.8 C1479.4 1912.5 1466.6 1920.6 1463.5 1921.2 C1460.4 1921.8 1451.7 1916.4 1451.1 1915 C1450.5 1913.6 1455.2 1908.2 1457.3 1907.2 C1459.5 1906.3 1470.5 1908.3 1472.9 1905.7 C1475.2 1903 1480.9 1884.4 1480.6 1880.8 C1480.3 1877.3 1474.1 1870.3 1469.8 1870 C1465.4 1869.6 1436.8 1879.4 1437.1 1877.7 Z" fill="#d9b878" stroke="#0a0a0a" stroke-width="2.6" stroke-linejoin="round" stroke-linecap="round"/>
<path d="M1281.8 1834.5 L1269.3 1846.9" fill="none" stroke="#0a0a0a" stroke-width="8.4" stroke-linejoin="round" stroke-linecap="round"/>
<path d="M1281.8 1834.5 L1269.3 1846.9" fill="none" stroke="#c9a868" stroke-width="3.2" stroke-linejoin="round" stroke-linecap="round"/>
<path d="M1280.7 1849 L1267.3 1863.5" fill="none" stroke="#0a0a0a" stroke-width="8.4" stroke-linejoin="round" stroke-linecap="round"/>
<path d="M1280.7 1849 L1267.3 1863.5" fill="none" stroke="#c9a868" stroke-width="3.2" stroke-linejoin="round" stroke-linecap="round"/>
<path d="M1281.8 1861.4 L1270.4 1881.1" fill="none" stroke="#0a0a0a" stroke-width="8.4" stroke-linejoin="round" stroke-linecap="round"/>
<path d="M1281.8 1861.4 L1270.4 1881.1" fill="none" stroke="#c9a868" stroke-width="3.2" stroke-linejoin="round" stroke-linecap="round"/>
<path d="M1291.5 1875.9 L1282.4 1902.8" fill="none" stroke="#0a0a0a" stroke-width="8.4" stroke-linejoin="round" stroke-linecap="round"/>
<path d="M1291.5 1875.9 L1282.4 1902.8" fill="none" stroke="#c9a868" stroke-width="3.2" stroke-linejoin="round" stroke-linecap="round"/>
<path d="M1301.8 1882.1 L1295.6 1910.1" fill="none" stroke="#0a0a0a" stroke-width="8.4" stroke-linejoin="round" stroke-linecap="round"/>
<path d="M1301.8 1882.1 L1295.6 1910.1" fill="none" stroke="#c9a868" stroke-width="3.2" stroke-linejoin="round" stroke-linecap="round"/>
<path d="M1437.1 1878 C1433.1 1879.9 1422.1 1886.9 1413.3 1889.8 C1404.5 1892.6 1394.3 1895 1384.3 1895 C1374.3 1895 1363.6 1892.7 1353.2 1889.8 C1342.9 1886.8 1331.5 1882.5 1322.1 1877.3 C1312.8 1872.2 1303.4 1864.9 1297.3 1858.7 C1291.1 1852.5 1287 1845.5 1285.3 1840.1 C1283.5 1834.6 1285.3 1828.9 1286.9 1826.2 C1288.5 1823.4 1293 1823 1294.8 1823.5 C1296.6 1824 1298.1 1827.6 1297.7 1829.3 C1297.3 1831 1293 1833.1 1292.1 1833.8" fill="none" stroke="#0a0a0a" stroke-width="10.2" stroke-linejoin="round" stroke-linecap="round"/>
<path d="M1437.1 1878 C1433.1 1879.9 1422.1 1886.9 1413.3 1889.8 C1404.5 1892.6 1394.3 1895 1384.3 1895 C1374.3 1895 1363.6 1892.7 1353.2 1889.8 C1342.9 1886.8 1331.5 1882.5 1322.1 1877.3 C1312.8 1872.2 1303.4 1864.9 1297.3 1858.7 C1291.1 1852.5 1287 1845.5 1285.3 1840.1 C1283.5 1834.6 1285.3 1828.9 1286.9 1826.2 C1288.5 1823.4 1293 1823 1294.8 1823.5 C1296.6 1824 1298.1 1827.6 1297.7 1829.3 C1297.3 1831 1293 1833.1 1292.1 1833.8" fill="none" stroke="#d9b878" stroke-width="5" stroke-linejoin="round" stroke-linecap="round"/>
<path d="M1485.5 1657.1 L1484.4 1658.2 L1482.8 1658.9 L1479.3 1658.7 L1482.2 1660.6 L1483.1 1662.1 L1483.4 1663.6 L1483.2 1665 L1482.6 1666.2 L1481.7 1667.1 L1480.5 1667.7 L1479.2 1667.9 L1477.8 1667.6 L1476.5 1666.9 L1475.3 1665.6 L1474.4 1662.3 L1473.5 1665.6 L1472.3 1666.9 L1471 1667.6 L1469.6 1667.9 L1468.3 1667.7 L1467.2 1667.1 L1466.3 1666.2 L1465.7 1665 L1465.5 1663.6 L1465.7 1662.1 L1466.6 1660.6 L1469.5 1658.7 L1466 1658.9 L1464.4 1658.2 L1463.3 1657.1 L1462.7 1655.9 L1462.5 1654.6 L1462.7 1653.3 L1463.3 1652.2 L1464.2 1651.2 L1465.5 1650.6 L1466.9 1650.4 L1468.7 1650.7 L1471.4 1652.9 L1470.1 1649.7 L1470.3 1647.9 L1471 1646.6 L1472 1645.6 L1473.1 1645 L1474.4 1644.8 L1475.7 1645 L1476.9 1645.6 L1477.8 1646.6 L1478.5 1647.9 L1478.7 1649.7 L1477.5 1652.9 L1480.2 1650.7 L1481.9 1650.4 L1483.4 1650.6 L1484.6 1651.2 L1485.5 1652.2 L1486.1 1653.3 L1486.3 1654.6 L1486.1 1655.9 Z" fill="#d9b878" stroke="#0a0a0a" stroke-width="2.4" stroke-linejoin="round" stroke-linecap="round"/>
<path d="M1409.4 1694.4 L1408.5 1695.3 L1407.1 1695.9 L1404.1 1695.8 L1406.6 1697.4 L1407.4 1698.7 L1407.6 1700 L1407.4 1701.2 L1406.9 1702.2 L1406.1 1703 L1405.1 1703.5 L1404 1703.7 L1402.8 1703.5 L1401.7 1702.9 L1400.6 1701.8 L1399.8 1698.9 L1399.1 1701.8 L1398 1702.9 L1396.9 1703.5 L1395.7 1703.7 L1394.6 1703.5 L1393.6 1703 L1392.8 1702.2 L1392.3 1701.2 L1392.1 1700 L1392.3 1698.7 L1393.1 1697.4 L1395.6 1695.8 L1392.6 1695.9 L1391.2 1695.3 L1390.3 1694.4 L1389.7 1693.3 L1389.6 1692.2 L1389.7 1691.1 L1390.2 1690.1 L1391 1689.3 L1392.1 1688.8 L1393.4 1688.6 L1394.9 1688.9 L1397.2 1690.8 L1396.1 1688 L1396.3 1686.5 L1396.9 1685.3 L1397.7 1684.4 L1398.7 1683.9 L1399.8 1683.8 L1400.9 1683.9 L1402 1684.4 L1402.8 1685.3 L1403.4 1686.5 L1403.5 1688 L1402.5 1690.8 L1404.8 1688.9 L1406.3 1688.6 L1407.6 1688.8 L1408.7 1689.3 L1409.5 1690.1 L1410 1691.1 L1410.1 1692.2 L1410 1693.3 Z" fill="#d9b878" stroke="#0a0a0a" stroke-width="2.4" stroke-linejoin="round" stroke-linecap="round"/>
<path d="M1230.2 1840.4 L1229.2 1841.4 L1227.6 1842.1 L1224.3 1842 L1227.1 1843.8 L1227.9 1845.2 L1228.2 1846.7 L1228 1848 L1227.4 1849.1 L1226.5 1849.9 L1225.4 1850.5 L1224.2 1850.7 L1222.9 1850.5 L1221.6 1849.8 L1220.5 1848.6 L1219.6 1845.4 L1218.8 1848.6 L1217.6 1849.8 L1216.4 1850.5 L1215.1 1850.7 L1213.8 1850.5 L1212.7 1849.9 L1211.8 1849.1 L1211.3 1848 L1211.1 1846.7 L1211.3 1845.2 L1212.2 1843.8 L1214.9 1842 L1211.6 1842.1 L1210.1 1841.4 L1209.1 1840.4 L1208.4 1839.3 L1208.3 1838 L1208.4 1836.8 L1209 1835.7 L1209.9 1834.8 L1211.1 1834.2 L1212.5 1834 L1214.2 1834.4 L1216.7 1836.4 L1215.5 1833.3 L1215.7 1831.7 L1216.4 1830.4 L1217.3 1829.4 L1218.4 1828.9 L1219.6 1828.7 L1220.8 1828.9 L1222 1829.4 L1222.9 1830.4 L1223.5 1831.7 L1223.7 1833.3 L1222.5 1836.4 L1225.1 1834.4 L1226.8 1834 L1228.2 1834.2 L1229.4 1834.8 L1230.3 1835.7 L1230.8 1836.8 L1231 1838 L1230.8 1839.3 Z" fill="#d9b878" stroke="#0a0a0a" stroke-width="2.4" stroke-linejoin="round" stroke-linecap="round"/>
<path d="M1564.7 1834.2 L1563.7 1835.3 L1562 1836 L1558.6 1835.8 L1561.5 1837.7 L1562.4 1839.2 L1562.6 1840.7 L1562.4 1842.1 L1561.8 1843.3 L1560.9 1844.2 L1559.7 1844.8 L1558.4 1845 L1557.1 1844.8 L1555.7 1844.1 L1554.5 1842.7 L1553.7 1839.4 L1552.8 1842.7 L1551.6 1844.1 L1550.2 1844.8 L1548.9 1845 L1547.6 1844.8 L1546.4 1844.2 L1545.5 1843.3 L1544.9 1842.1 L1544.7 1840.7 L1544.9 1839.2 L1545.8 1837.7 L1548.7 1835.8 L1545.3 1836 L1543.7 1835.3 L1542.6 1834.2 L1541.9 1833 L1541.7 1831.7 L1541.9 1830.4 L1542.5 1829.3 L1543.5 1828.3 L1544.7 1827.7 L1546.2 1827.5 L1547.9 1827.9 L1550.6 1830 L1549.4 1826.8 L1549.6 1825 L1550.2 1823.7 L1551.2 1822.7 L1552.4 1822.1 L1553.7 1821.9 L1554.9 1822.1 L1556.1 1822.7 L1557.1 1823.7 L1557.7 1825 L1557.9 1826.8 L1556.7 1830 L1559.4 1827.9 L1561.1 1827.5 L1562.6 1827.7 L1563.8 1828.3 L1564.8 1829.3 L1565.4 1830.4 L1565.6 1831.7 L1565.4 1833 Z" fill="#d9b878" stroke="#0a0a0a" stroke-width="2.4" stroke-linejoin="round" stroke-linecap="round"/>
<path d="M1318.8 1925.9 L1317.7 1926.9 L1316.2 1927.6 L1312.9 1927.4 L1315.7 1929.2 L1316.5 1930.7 L1316.7 1932.1 L1316.5 1933.4 L1316 1934.5 L1315.1 1935.4 L1314 1936 L1312.8 1936.2 L1311.5 1935.9 L1310.2 1935.3 L1309 1934 L1308.2 1930.8 L1307.3 1934 L1306.2 1935.3 L1304.9 1935.9 L1303.6 1936.2 L1302.4 1936 L1301.3 1935.4 L1300.4 1934.5 L1299.8 1933.4 L1299.6 1932.1 L1299.9 1930.7 L1300.7 1929.2 L1303.5 1927.4 L1300.2 1927.6 L1298.6 1926.9 L1297.6 1925.9 L1297 1924.7 L1296.8 1923.5 L1297 1922.2 L1297.6 1921.2 L1298.4 1920.3 L1299.6 1919.7 L1301 1919.5 L1302.7 1919.8 L1305.3 1921.9 L1304.1 1918.8 L1304.3 1917.1 L1304.9 1915.8 L1305.8 1914.9 L1307 1914.3 L1308.2 1914.1 L1309.4 1914.3 L1310.5 1914.9 L1311.5 1915.8 L1312.1 1917.1 L1312.3 1918.8 L1311.1 1921.9 L1313.7 1919.8 L1315.3 1919.5 L1316.7 1919.7 L1317.9 1920.3 L1318.8 1921.2 L1319.4 1922.2 L1319.6 1923.5 L1319.4 1924.7 Z" fill="#d9b878" stroke="#0a0a0a" stroke-width="2.4" stroke-linejoin="round" stroke-linecap="round"/>
<path d="M1113.7 1842 L1112.8 1842.8 L1111.5 1843.4 L1108.7 1843.3 L1111.1 1844.8 L1111.8 1846.1 L1112 1847.3 L1111.8 1848.4 L1111.3 1849.4 L1110.6 1850.1 L1109.6 1850.6 L1108.6 1850.8 L1107.5 1850.6 L1106.4 1850 L1105.4 1849 L1104.7 1846.2 L1103.9 1849 L1103 1850 L1101.9 1850.6 L1100.7 1850.8 L1099.7 1850.6 L1098.7 1850.1 L1098 1849.4 L1097.5 1848.4 L1097.3 1847.3 L1097.5 1846.1 L1098.3 1844.8 L1100.6 1843.3 L1097.8 1843.4 L1096.5 1842.8 L1095.6 1842 L1095.1 1841 L1094.9 1839.9 L1095.1 1838.9 L1095.6 1837.9 L1096.3 1837.2 L1097.3 1836.7 L1098.5 1836.5 L1100 1836.8 L1102.2 1838.6 L1101.2 1835.9 L1101.3 1834.5 L1101.9 1833.4 L1102.7 1832.6 L1103.6 1832.1 L1104.7 1831.9 L1105.7 1832.1 L1106.7 1832.6 L1107.5 1833.4 L1108 1834.5 L1108.2 1835.9 L1107.1 1838.6 L1109.4 1836.8 L1110.8 1836.5 L1112 1836.7 L1113 1837.2 L1113.8 1837.9 L1114.2 1838.9 L1114.4 1839.9 L1114.2 1841 Z" fill="#d9b878" stroke="#0a0a0a" stroke-width="2.4" stroke-linejoin="round" stroke-linecap="round"/>
<path d="M858.7 1657.5 L857.6 1658.6 L856 1659.3 L852.5 1659.1 L855.4 1661 L856.3 1662.6 L856.6 1664 L856.4 1665.4 L855.8 1666.6 L854.9 1667.5 L853.7 1668.1 L852.4 1668.3 L851 1668.1 L849.7 1667.4 L848.5 1666 L847.6 1662.7 L846.7 1666 L845.5 1667.4 L844.2 1668.1 L842.8 1668.3 L841.5 1668.1 L840.4 1667.5 L839.5 1666.6 L838.9 1665.4 L838.6 1664 L838.9 1662.6 L839.8 1661 L842.7 1659.1 L839.2 1659.3 L837.6 1658.6 L836.5 1657.5 L835.9 1656.3 L835.7 1655 L835.9 1653.7 L836.5 1652.6 L837.4 1651.6 L838.6 1651 L840.1 1650.8 L841.9 1651.2 L844.6 1653.3 L843.3 1650.1 L843.5 1648.3 L844.2 1647 L845.2 1646 L846.3 1645.4 L847.6 1645.2 L848.9 1645.4 L850.1 1646 L851 1647 L851.7 1648.3 L851.9 1650.1 L850.7 1653.3 L853.3 1651.2 L855.1 1650.8 L856.6 1651 L857.8 1651.6 L858.7 1652.6 L859.3 1653.7 L859.5 1655 L859.3 1656.3 Z" fill="#f0d79b" stroke="#0a0a0a" stroke-width="2.4" stroke-linejoin="round" stroke-linecap="round"/>
<path d="M932.9 1694.8 L931.9 1695.8 L930.4 1696.4 L927.3 1696.3 L929.9 1698 L930.7 1699.4 L931 1700.7 L930.8 1702 L930.2 1703 L929.4 1703.9 L928.3 1704.4 L927.2 1704.6 L925.9 1704.4 L924.7 1703.8 L923.6 1702.6 L922.8 1699.5 L922 1702.6 L920.9 1703.8 L919.7 1704.4 L918.5 1704.6 L917.3 1704.4 L916.2 1703.9 L915.4 1703 L914.9 1702 L914.7 1700.7 L914.9 1699.4 L915.7 1698 L918.3 1696.3 L915.2 1696.4 L913.7 1695.8 L912.7 1694.8 L912.2 1693.7 L912 1692.5 L912.2 1691.3 L912.7 1690.3 L913.5 1689.5 L914.7 1688.9 L916 1688.7 L917.6 1689 L920 1691 L918.9 1688.1 L919.1 1686.5 L919.7 1685.2 L920.6 1684.3 L921.6 1683.8 L922.8 1683.6 L924 1683.8 L925 1684.3 L925.9 1685.2 L926.5 1686.5 L926.7 1688.1 L925.6 1691 L928 1689 L929.6 1688.7 L931 1688.9 L932.1 1689.5 L932.9 1690.3 L933.5 1691.3 L933.6 1692.5 L933.5 1693.7 Z" fill="#f0d79b" stroke="#0a0a0a" stroke-width="2.4" stroke-linejoin="round" stroke-linecap="round"/>
<path d="M1114.1 1840.8 L1113 1841.9 L1111.4 1842.6 L1107.9 1842.4 L1110.9 1844.3 L1111.7 1845.9 L1112 1847.4 L1111.8 1848.7 L1111.2 1849.9 L1110.3 1850.8 L1109.1 1851.4 L1107.8 1851.6 L1106.4 1851.4 L1105.1 1850.7 L1103.9 1849.4 L1103 1846 L1102.1 1849.4 L1100.9 1850.7 L1099.6 1851.4 L1098.2 1851.6 L1096.9 1851.4 L1095.8 1850.8 L1094.9 1849.9 L1094.3 1848.7 L1094.1 1847.4 L1094.3 1845.9 L1095.2 1844.3 L1098.1 1842.4 L1094.6 1842.6 L1093 1841.9 L1091.9 1840.8 L1091.3 1839.6 L1091.1 1838.3 L1091.3 1837 L1091.9 1835.9 L1092.8 1835 L1094.1 1834.3 L1095.6 1834.1 L1097.3 1834.5 L1100 1836.7 L1098.7 1833.4 L1098.9 1831.7 L1099.6 1830.3 L1100.6 1829.3 L1101.8 1828.7 L1103 1828.5 L1104.3 1828.7 L1105.5 1829.3 L1106.4 1830.3 L1107.1 1831.7 L1107.3 1833.4 L1106.1 1836.7 L1108.8 1834.5 L1110.5 1834.1 L1112 1834.3 L1113.2 1835 L1114.2 1835.9 L1114.7 1837 L1114.9 1838.3 L1114.7 1839.6 Z" fill="#f0d79b" stroke="#0a0a0a" stroke-width="2.4" stroke-linejoin="round" stroke-linecap="round"/>
<path d="M1565.5 1833.5 L1564.4 1834.5 L1562.8 1835.2 L1559.3 1835.1 L1562.2 1836.9 L1563.1 1838.5 L1563.3 1840 L1563.1 1841.3 L1562.5 1842.5 L1561.6 1843.4 L1560.5 1844 L1559.2 1844.2 L1557.8 1844 L1556.5 1843.3 L1555.3 1842 L1554.4 1838.6 L1553.5 1842 L1552.3 1843.3 L1551 1844 L1549.6 1844.2 L1548.3 1844 L1547.1 1843.4 L1546.2 1842.5 L1545.6 1841.3 L1545.4 1840 L1545.7 1838.5 L1546.5 1836.9 L1549.5 1835.1 L1546 1835.2 L1544.4 1834.5 L1543.3 1833.5 L1542.7 1832.2 L1542.5 1830.9 L1542.7 1829.6 L1543.2 1828.5 L1544.2 1827.6 L1545.4 1826.9 L1546.9 1826.7 L1548.6 1827.1 L1551.3 1829.3 L1550.1 1826 L1550.3 1824.3 L1551 1822.9 L1551.9 1821.9 L1553.1 1821.3 L1554.4 1821.1 L1555.6 1821.3 L1556.8 1821.9 L1557.8 1822.9 L1558.5 1824.3 L1558.7 1826 L1557.4 1829.3 L1560.1 1827.1 L1561.8 1826.7 L1563.3 1826.9 L1564.6 1827.6 L1565.5 1828.5 L1566.1 1829.6 L1566.3 1830.9 L1566.1 1832.2 Z" fill="#d9b878" stroke="#0a0a0a" stroke-width="2.4" stroke-linejoin="round" stroke-linecap="round"/>
<path d="M659.6 1550.3 C659.3 1538.1 680.6 1559 686 1561.2 C691.5 1563.4 706.9 1570 714 1572.7 C721.1 1575.4 746.8 1584.5 757.5 1587.9 C768.2 1591.3 808.8 1603.6 821.2 1606.6 C833.6 1609.5 869.5 1615.6 881.8 1617.4 C894.1 1619.3 931.5 1623.7 943.9 1625.2 C956.4 1626.8 992.1 1631.4 1006.1 1633 C1020.1 1634.5 1070.3 1639.8 1083.8 1640.7 C1097.2 1641.7 1129.4 1642.2 1140.4 1642.2 C1151.3 1642.2 1178.6 1641.3 1193.2 1640.3 C1207.8 1639.4 1267.8 1634.5 1286.4 1632.6 C1305.1 1630.6 1367 1622.6 1379.6 1620.8 C1392.2 1618.9 1405.2 1615 1412.4 1613.8 C1419.6 1612.6 1444.7 1609.6 1451.8 1608.6 C1458.8 1607.7 1477.7 1605.1 1482.9 1604.1 C1488 1603.1 1499.4 1599.7 1503.6 1598.3 C1507.7 1596.8 1519.1 1592.3 1524.3 1589.6 C1529.5 1586.9 1550.6 1574.7 1555.4 1570.9 C1560.1 1567.2 1569.9 1554.6 1571.9 1552.3 C1574 1550 1571.5 1548.5 1576.1 1547.5 C1580.6 1546.5 1608.8 1543.9 1617.5 1542.4 C1626.2 1540.8 1657.7 1532.2 1663.1 1532 C1668.5 1531.8 1669.3 1539.6 1671.4 1540.3 C1673.4 1541 1679.2 1542.4 1683.8 1539.3 C1688.4 1536.1 1709.5 1514.3 1717.5 1508.8 C1725.5 1503.2 1754.8 1488.1 1764.1 1483.9 C1773.4 1479.7 1801.4 1469.1 1810.7 1466.8 C1820 1464.5 1848 1461.1 1857.3 1460.6 C1866.6 1460.1 1895.2 1460.9 1903.9 1462.1 C1912.6 1463.4 1937.5 1469.6 1944.3 1473 C1951.2 1476.4 1967.3 1490.6 1972.3 1496.3 C1977.3 1502.1 1990.3 1523.4 1994 1530.5 C1997.8 1537.6 2007.3 1559.7 2009.6 1567.8 C2011.9 1575.9 2016.9 1603.2 2017.3 1611.3 C2017.8 1619.4 2015.6 1641.1 2014.2 1648.6 C2012.8 1656 2006 1678.7 2003.4 1685.9 C2000.7 1693 1991.6 1713.2 1987.8 1720 C1984.1 1726.9 1971.4 1747.1 1966.1 1754.2 C1960.8 1761.4 1941.2 1784.4 1935 1791.5 C1928.8 1798.7 1910.2 1820.4 1903.9 1825.7 C1897.7 1831 1879.1 1840.3 1872.9 1844.3 C1866.6 1848.4 1849.6 1861.1 1841.8 1866.1 C1834 1871.1 1804.5 1888.1 1795.2 1894 C1785.9 1899.9 1757.9 1918.6 1748.6 1925.1 C1739.3 1931.6 1708.7 1952.8 1702 1959.3 C1695.2 1965.8 1685.1 1983.5 1681.2 1990.2 C1677.3 1996.9 1665 2020.1 1663 2026.4 C1661.1 2032.8 1660.9 2048 1661.2 2053.6 C1661.6 2059.2 1666.8 2078.1 1666.7 2082.6 C1666.5 2087.1 1662 2096.6 1659.4 2098.9 C1656.9 2101.3 1646.4 2105.8 1641.3 2106.2 C1636.2 2106.5 1614.3 2104.3 1608.7 2102.5 C1603.1 2100.7 1588.6 2091.5 1585.1 2088 C1581.7 2084.6 1575.8 2071.6 1574.3 2068.1 C1572.7 2064.7 1571.5 2053 1569.7 2053.6 C1568 2054.2 1560.2 2067.6 1556.8 2074 C1553.3 2080.4 1540.3 2107.9 1535 2117.5 C1529.7 2127.1 1510.2 2162.9 1503.9 2170.3 C1497.7 2177.8 1482.2 2188.3 1472.9 2192.1 C1463.5 2195.8 1426.3 2203.9 1410.7 2207.6 C1395.2 2211.3 1336.1 2225.6 1317.5 2229.4 C1298.9 2233.1 1241.1 2242.4 1224.3 2244.9 C1207.5 2247.4 1162.1 2253.4 1149.7 2254.2 C1137.3 2255 1111.3 2253.8 1100 2252.7 C1088.7 2251.5 1049.7 2244.9 1037.2 2242.8 C1024.7 2240.7 987.3 2234.4 975 2231.9 C962.7 2229.4 925 2221 914.4 2217.9 C903.9 2214.8 877.6 2206 869.4 2200.8 C861.1 2195.7 839.5 2178.8 832.1 2166.6 C824.6 2154.5 802.2 2100.8 794.8 2079.6 C787.3 2058.5 765.6 1980.9 757.5 1955.4 C749.4 1929.8 720.8 1850.9 714 1823.8 C707.2 1796.6 694.6 1711.3 689.1 1683.9 C683.7 1656.6 659.9 1562.6 659.6 1550.3 Z" fill="none" stroke="#0a0a0a" stroke-width="3.2" stroke-linejoin="round" stroke-linecap="round"/>
<path d="M1596.3 1946.9 C1599.8 1948.3 1617.4 1930.2 1624.3 1925.1 C1631.2 1920 1646.3 1909.2 1655.4 1903.4 C1664.4 1897.6 1691.1 1881.9 1702 1875.4 C1712.8 1868.9 1737.7 1854 1748.6 1847.4 C1759.5 1840.9 1785 1825.3 1795.2 1819.5 C1805.3 1813.7 1826.5 1803.5 1835.6 1797.7 C1844.6 1791.9 1865.3 1776.3 1872.9 1769.8 C1880.5 1763.2 1895 1749.4 1900.8 1741.8 C1906.6 1734.2 1918.6 1713.2 1922.6 1704.5 C1926.6 1695.8 1933 1675.9 1935 1667.2 C1937 1658.5 1939.7 1639.4 1939.7 1629.9 C1939.7 1620.5 1937 1595.1 1935 1586.4 C1933 1577.7 1926.2 1561.9 1922.6 1555.4 C1919 1548.8 1908.6 1534.3 1903.9 1530.5 C1899.2 1526.7 1891.2 1522.7 1882.2 1522.7 C1873.1 1522.7 1838.2 1528.5 1826.3 1530.5 C1814.3 1532.5 1789.4 1536.6 1779.6 1539.8 C1769.9 1543.1 1749.6 1552.7 1742.4 1558.5 C1735.1 1564.3 1723.3 1581.2 1717.5 1589.5 C1711.7 1597.9 1698.4 1620.5 1692.6 1629.9 C1686.8 1639.4 1672.9 1664.2 1667.8 1670.3 C1662.7 1676.5 1654.9 1680.2 1649.1 1682.8 C1643.3 1685.3 1622.4 1685.2 1618.1 1692.1 C1613.7 1699 1613.3 1728.7 1611.9 1741.8 C1610.4 1754.8 1607.1 1789.4 1605.6 1803.9 C1604.2 1818.4 1600.7 1853.4 1599.4 1866.1 C1598.2 1878.8 1595.1 1903.3 1594.8 1912.7 C1594.4 1922.1 1592.9 1945.4 1596.3 1946.9 Z" fill="none" stroke="#0a0a0a" stroke-width="3.2" stroke-linejoin="round" stroke-linecap="round"/>
<path d="M874 1395 C871.3 1392.1 857.1 1375.9 850.7 1370.1 C844.4 1364.3 827.6 1350.3 819.6 1345.3 C811.7 1340.2 791.4 1329.9 782.4 1326.6 C773.3 1323.3 751.4 1317.8 742 1317.3 C732.5 1316.7 710.6 1319.4 701.6 1321.9 C692.5 1324.5 672.6 1333.4 664.3 1339 C656 1344.7 637.4 1361.8 630.1 1370.1 C622.9 1378.4 607.2 1400.7 602.1 1410.5 C597.1 1420.3 589.3 1443.9 586.6 1454 C583.9 1464.2 579.7 1487 578.8 1497.5 C577.9 1508 577.9 1533.2 578.8 1544.1 C579.7 1555 585 1579.8 586.6 1590.7 C588.2 1601.6 591.4 1626.5 592.8 1637.3 C594.3 1648.2 597.6 1673.1 599 1683.9 C600.5 1694.8 603.8 1719.7 605.3 1730.5 C606.7 1741.4 610 1766.3 611.5 1777.2 C612.9 1788 617 1815.7 617.7 1823.8 C618.4 1831.9 615.9 1838.5 617.7 1846.6 C619.5 1854.7 628.5 1881.3 633.2 1893.2 C637.9 1905.2 651.9 1936.8 658.1 1949.1 C664.2 1961.5 679.5 1987.3 686 1998.9 C692.6 2010.5 708.9 2039.9 714 2048.6 C719.1 2057.3 727.7 2070.5 729.5 2073.4 L745.1 2073.4 C744 2064.7 737.6 2016.3 735.8 1998.9 C733.9 1981.5 731 1939.2 729.5 1924.3 C728.1 1909.4 724 1877.8 723.3 1871.5 C722.6 1865.2 722.6 1875.2 723.3 1870.4 C724 1865.5 726.6 1837.6 729.5 1830 C732.4 1822.4 742.7 1810.6 748.2 1805.1 C753.6 1799.7 770 1788.4 776.1 1783.4 C782.3 1778.3 794.8 1767.4 801 1761.6 C807.2 1755.8 818.5 1737.3 829 1733.7 C839.5 1730 883.9 1732.4 891.1 1730.5 C898.4 1728.7 892.6 1722.1 891.1 1718.1 C889.7 1714.1 883.4 1701.4 878.7 1696.4 C874 1691.3 857.6 1679.1 850.7 1674.6 C843.8 1670.1 828.7 1661.5 819.6 1657.5 C810.6 1653.5 783.9 1644.6 773 1640.4 C762.2 1636.3 737.3 1627.6 726.4 1621.8 C715.6 1616 686 1596.2 679.8 1590.7 C673.7 1585.3 675.1 1580.6 673.6 1575.2 C672.2 1569.7 667.8 1553.2 667.4 1544.1 C667 1535 668.7 1506.9 670.5 1497.5 C672.3 1488.1 677.9 1469.8 682.9 1463.3 C688 1456.8 705.7 1445.2 714 1441.6 C722.3 1437.9 749.7 1433.3 754.4 1432.3 L788.6 1426 L819.6 1413.6 Z" fill="url(#sc3)"/>
<path d="M874 1395 C871.3 1392.1 857.1 1375.9 850.7 1370.1 C844.4 1364.3 827.6 1350.3 819.6 1345.3 C811.7 1340.2 791.4 1329.9 782.4 1326.6 C773.3 1323.3 751.4 1317.8 742 1317.3 C732.5 1316.7 710.6 1319.4 701.6 1321.9 C692.5 1324.5 672.6 1333.4 664.3 1339 C656 1344.7 637.4 1361.8 630.1 1370.1 C622.9 1378.4 607.2 1400.7 602.1 1410.5 C597.1 1420.3 589.3 1443.9 586.6 1454 C583.9 1464.2 579.7 1487 578.8 1497.5 C577.9 1508 577.9 1533.2 578.8 1544.1 C579.7 1555 585 1579.8 586.6 1590.7 C588.2 1601.6 591.4 1626.5 592.8 1637.3 C594.3 1648.2 597.6 1673.1 599 1683.9 C600.5 1694.8 603.8 1719.7 605.3 1730.5 C606.7 1741.4 610 1766.3 611.5 1777.2 C612.9 1788 617 1815.7 617.7 1823.8 C618.4 1831.9 615.9 1838.5 617.7 1846.6 C619.5 1854.7 628.5 1881.3 633.2 1893.2 C637.9 1905.2 651.9 1936.8 658.1 1949.1 C664.2 1961.5 679.5 1987.3 686 1998.9 C692.6 2010.5 708.9 2039.9 714 2048.6 C719.1 2057.3 727.7 2070.5 729.5 2073.4" fill="none" stroke="#0a0a0a" stroke-width="3.2" stroke-linejoin="round" stroke-linecap="round"/>
<path d="M891.1 1718.1 C889.7 1715.6 883.4 1701.4 878.7 1696.4 C874 1691.3 857.6 1679.1 850.7 1674.6 C843.8 1670.1 828.7 1661.5 819.6 1657.5 C810.6 1653.5 783.9 1644.6 773 1640.4 C762.2 1636.3 737.3 1627.6 726.4 1621.8 C715.6 1616 686 1596.2 679.8 1590.7 C673.7 1585.3 675.1 1580.6 673.6 1575.2 C672.2 1569.7 667.8 1553.2 667.4 1544.1 C667 1535 668.7 1506.9 670.5 1497.5 C672.3 1488.1 677.9 1469.8 682.9 1463.3 C688 1456.8 705.7 1445.2 714 1441.6 C722.3 1437.9 749.7 1433.3 754.4 1432.3" fill="none" stroke="#0a0a0a" stroke-width="3.2" stroke-linejoin="round" stroke-linecap="round"/>
<path d="M690.9 1602.9 L707.6 1606.8 L717.5 1620.7 L734.6 1622.9 L747.2 1634.4 L764.3 1634.8 L777.1 1646.2 L794.2 1646.1 L807.1 1657.2 L824.2 1657.8 L835.4 1670.7 L852.5 1673.5 L861.4 1688 L877.7 1693.1 L881.8 1709.9" fill="none" stroke="#0a0a0a" stroke-width="2.6" stroke-linejoin="round" stroke-linecap="round"/>
<clipPath id="cfin"><path d="M891.1 1718.1 C894.8 1720.9 920 1739.6 928.4 1746.1 C936.8 1752.6 967.8 1778.2 975 1783.4 C982.2 1788.6 995.5 1795 1000 1798 C1004.5 1801 1015.7 1810.2 1019.7 1813.7 C1023.6 1817.3 1035.4 1829 1039.3 1833.4 C1043.3 1837.8 1055.1 1852.4 1059 1858 C1062.9 1863.6 1074.7 1882.9 1078.7 1889.5 C1082.6 1896.1 1094.4 1916.5 1098.3 1923.9 C1102.3 1931.3 1114.3 1955.6 1118 1963.2 C1121.7 1970.8 1130.8 1993.7 1135.7 1999.8 C1140.6 2005.9 1162.2 2018.7 1166.8 2024.3 C1171.4 2029.8 1183.4 2054.1 1181.4 2055.4 C1179.4 2056.6 1153.2 2041.7 1146.6 2036.7 C1140 2031.7 1120.2 2010.3 1115.5 2005.6 C1110.9 2001 1106.2 1993.9 1099.9 1989.8 C1093.6 1985.8 1062.1 1969.7 1052.7 1964.7 C1043.3 1959.7 1015.4 1944.5 1006.1 1939.8 C996.8 1935.2 968.8 1922.7 959.5 1918.1 C950.2 1913.4 920.3 1896.6 912.9 1893.2 C905.4 1889.8 891.1 1886.2 884.9 1883.9 C878.7 1881.6 856.3 1871.8 850.7 1869.9 C845.1 1868 833.6 1865.6 829 1865.3 C824.3 1864.9 810 1867 804.1 1866.8 C798.2 1866.6 771.5 1861.1 769.9 1863.7 C768.4 1866.3 784.2 1885.6 788.6 1893.2 C792.9 1900.8 808.8 1929.3 813.4 1939.8 C818.1 1950.4 829.9 1989.2 835.2 1998.9 C840.5 2008.5 860 2030.2 866.3 2036.1 C872.5 2042.1 889.9 2053.5 897.3 2057.9 C904.8 2062.2 933.1 2075.9 940.8 2079.6 C948.6 2083.4 969.1 2092.5 975 2095.2 C980.9 2097.8 993.7 2102.6 999.9 2106.1 C1006.1 2109.5 1028.8 2124.9 1037.2 2129.4 C1045.5 2133.9 1076.6 2147.9 1083.8 2151.1 C1090.9 2154.4 1110.2 2158.9 1108.6 2162 C1107.1 2165.1 1076.9 2178.6 1068.2 2182.2 C1059.5 2185.8 1030.9 2195.4 1021.6 2197.7 C1012.3 2200.1 984.3 2205.2 975 2205.5 C965.7 2205.8 937.7 2202.8 928.4 2200.8 C919.1 2198.8 891.1 2189 881.8 2185.3 C872.5 2181.6 844.5 2169.4 835.2 2163.5 C825.9 2157.6 796.3 2133.4 788.6 2126.3 C780.8 2119.1 763.4 2097.4 757.5 2092.1 C751.6 2086.8 732.3 2075.3 729.5 2073.4 L729.5 2054.7 L710.4 2040 L717.4 2018.7 L702 2000.1 L713.4 1978.9 L698.2 1960.1 L710.7 1939.4 L696.2 1920.1 L709.3 1900.4 L696.8 1879.7 L711.3 1860.4 L699.4 1839.5 L715 1821.2 L703.8 1799.8 L728.3 1795.1 L737.9 1773.5 L763.8 1771.5 L764.1 1747.3 L786.6 1738.6 L792.2 1717.6 L816.3 1716.4 L830.7 1705 L848.4 1721.4 L870.2 1711.1 Z"/></clipPath>
<path d="M891.1 1718.1 C894.8 1720.9 920 1739.6 928.4 1746.1 C936.8 1752.6 967.8 1778.2 975 1783.4 C982.2 1788.6 995.5 1795 1000 1798 C1004.5 1801 1015.7 1810.2 1019.7 1813.7 C1023.6 1817.3 1035.4 1829 1039.3 1833.4 C1043.3 1837.8 1055.1 1852.4 1059 1858 C1062.9 1863.6 1074.7 1882.9 1078.7 1889.5 C1082.6 1896.1 1094.4 1916.5 1098.3 1923.9 C1102.3 1931.3 1114.3 1955.6 1118 1963.2 C1121.7 1970.8 1130.8 1993.7 1135.7 1999.8 C1140.6 2005.9 1162.2 2018.7 1166.8 2024.3 C1171.4 2029.8 1183.4 2054.1 1181.4 2055.4 C1179.4 2056.6 1153.2 2041.7 1146.6 2036.7 C1140 2031.7 1120.2 2010.3 1115.5 2005.6 C1110.9 2001 1106.2 1993.9 1099.9 1989.8 C1093.6 1985.8 1062.1 1969.7 1052.7 1964.7 C1043.3 1959.7 1015.4 1944.5 1006.1 1939.8 C996.8 1935.2 968.8 1922.7 959.5 1918.1 C950.2 1913.4 920.3 1896.6 912.9 1893.2 C905.4 1889.8 891.1 1886.2 884.9 1883.9 C878.7 1881.6 856.3 1871.8 850.7 1869.9 C845.1 1868 833.6 1865.6 829 1865.3 C824.3 1864.9 810 1867 804.1 1866.8 C798.2 1866.6 771.5 1861.1 769.9 1863.7 C768.4 1866.3 784.2 1885.6 788.6 1893.2 C792.9 1900.8 808.8 1929.3 813.4 1939.8 C818.1 1950.4 829.9 1989.2 835.2 1998.9 C840.5 2008.5 860 2030.2 866.3 2036.1 C872.5 2042.1 889.9 2053.5 897.3 2057.9 C904.8 2062.2 933.1 2075.9 940.8 2079.6 C948.6 2083.4 969.1 2092.5 975 2095.2 C980.9 2097.8 993.7 2102.6 999.9 2106.1 C1006.1 2109.5 1028.8 2124.9 1037.2 2129.4 C1045.5 2133.9 1076.6 2147.9 1083.8 2151.1 C1090.9 2154.4 1110.2 2158.9 1108.6 2162 C1107.1 2165.1 1076.9 2178.6 1068.2 2182.2 C1059.5 2185.8 1030.9 2195.4 1021.6 2197.7 C1012.3 2200.1 984.3 2205.2 975 2205.5 C965.7 2205.8 937.7 2202.8 928.4 2200.8 C919.1 2198.8 891.1 2189 881.8 2185.3 C872.5 2181.6 844.5 2169.4 835.2 2163.5 C825.9 2157.6 796.3 2133.4 788.6 2126.3 C780.8 2119.1 763.4 2097.4 757.5 2092.1 C751.6 2086.8 732.3 2075.3 729.5 2073.4 L729.5 2054.7 L710.4 2040 L717.4 2018.7 L702 2000.1 L713.4 1978.9 L698.2 1960.1 L710.7 1939.4 L696.2 1920.1 L709.3 1900.4 L696.8 1879.7 L711.3 1860.4 L699.4 1839.5 L715 1821.2 L703.8 1799.8 L728.3 1795.1 L737.9 1773.5 L763.8 1771.5 L764.1 1747.3 L786.6 1738.6 L792.2 1717.6 L816.3 1716.4 L830.7 1705 L848.4 1721.4 L870.2 1711.1 Z" fill="#8e4f54"/>
<g clip-path="url(#cfin)">
<path d="M788.6 1739.9 C804.1 1742.5 850.7 1744 881.8 1755.4 C912.9 1766.8 949.1 1789.1 975 1808.2 C1000.9 1827.4 1021.6 1854.8 1037.2 1870.4 C1052.7 1885.9 1063 1896.3 1068.2 1901.4" fill="none" stroke="#9b6568" stroke-width="22" stroke-linejoin="round" stroke-linecap="round"/>
<path d="M757.5 1783.4 C773 1784.4 819.6 1781.3 850.7 1789.6 C881.8 1797.9 918 1817 943.9 1833.1 C969.8 1849.1 985.4 1864.2 1006.1 1885.9 C1026.8 1907.7 1057.9 1950.6 1068.2 1963.6" fill="none" stroke="#7a4548" stroke-width="26" stroke-linejoin="round" stroke-linecap="round"/>
<path d="M738.9 1808.2 C752.3 1809.3 790.6 1807.7 819.6 1814.4 C848.6 1821.2 884.4 1834.1 912.9 1848.6 C941.3 1863.1 967.2 1879.7 990.5 1901.4 C1013.8 1923.2 1042.3 1966.2 1052.7 1979.1" fill="none" stroke="#9b6568" stroke-width="12" stroke-linejoin="round" stroke-linecap="round"/>
<path d="M707.8 1815.5 C708.8 1828.5 708.8 1866.8 714 1893.2 C719.2 1919.6 726.4 1948.1 738.9 1974 C751.3 1999.9 769.9 2025.8 788.6 2048.6 C807.2 2071.4 824.8 2092.6 850.7 2110.7 C876.6 2128.8 912.9 2147 943.9 2157.3 C975 2167.7 1009.7 2172.1 1037.2 2172.9 C1064.6 2173.6 1096.7 2163.8 1108.6 2162" fill="none" stroke="#62363a" stroke-width="42" stroke-linejoin="round" stroke-linecap="round"/>
<path d="M704.7 1877.7 C706.8 1891.7 709.3 1935.2 717.1 1961.6 C724.9 1988 736.8 2013.4 751.3 2036.1 C765.8 2058.9 782.4 2079.1 804.1 2098.3 C825.9 2117.5 853.3 2137.1 881.8 2151.1 C910.3 2165.1 943.9 2178 975 2182.2 C1006.1 2186.3 1052.7 2177 1068.2 2176" fill="none" stroke="#552e33" stroke-width="30" stroke-linejoin="round" stroke-linecap="round"/>
<path d="M714 1800 C717.1 1812.9 723.3 1850.8 732.6 1877.7 C742 1904.6 755.4 1937.2 769.9 1961.6 C784.4 1985.9 801 2005.1 819.6 2023.7 C838.3 2042.4 871.4 2065.1 881.8 2073.4" fill="none" stroke="#7a4548" stroke-width="30" stroke-linejoin="round" stroke-linecap="round"/>
<path d="M732.6 1800 C736.8 1812.9 747.1 1854.9 757.5 1877.7 C767.9 1900.5 781.3 1916.5 794.8 1936.7 C808.3 1956.9 821.2 1980.2 838.3 1998.9 C855.4 2017.5 874.5 2033.6 897.3 2048.6 C920.1 2063.6 943.9 2072.9 975 2089 C1006.1 2105 1065.6 2135.6 1083.8 2144.9" fill="none" stroke="#9b6568" stroke-width="14" stroke-linejoin="round" stroke-linecap="round"/>
</g>
<path d="M891.1 1718.1 C894.8 1720.9 920 1739.6 928.4 1746.1 C936.8 1752.6 967.8 1778.2 975 1783.4 C982.2 1788.6 995.5 1795 1000 1798 C1004.5 1801 1015.7 1810.2 1019.7 1813.7 C1023.6 1817.3 1035.4 1829 1039.3 1833.4 C1043.3 1837.8 1055.1 1852.4 1059 1858 C1062.9 1863.6 1074.7 1882.9 1078.7 1889.5 C1082.6 1896.1 1094.4 1916.5 1098.3 1923.9 C1102.3 1931.3 1114.3 1955.6 1118 1963.2 C1121.7 1970.8 1130.8 1993.7 1135.7 1999.8 C1140.6 2005.9 1162.2 2018.7 1166.8 2024.3 C1171.4 2029.8 1183.4 2054.1 1181.4 2055.4 C1179.4 2056.6 1153.2 2041.7 1146.6 2036.7 C1140 2031.7 1120.2 2010.3 1115.5 2005.6 C1110.9 2001 1106.2 1993.9 1099.9 1989.8 C1093.6 1985.8 1062.1 1969.7 1052.7 1964.7 C1043.3 1959.7 1015.4 1944.5 1006.1 1939.8 C996.8 1935.2 968.8 1922.7 959.5 1918.1 C950.2 1913.4 920.3 1896.6 912.9 1893.2 C905.4 1889.8 891.1 1886.2 884.9 1883.9 C878.7 1881.6 856.3 1871.8 850.7 1869.9 C845.1 1868 833.6 1865.6 829 1865.3 C824.3 1864.9 810 1867 804.1 1866.8 C798.2 1866.6 771.5 1861.1 769.9 1863.7 C768.4 1866.3 784.2 1885.6 788.6 1893.2 C792.9 1900.8 808.8 1929.3 813.4 1939.8 C818.1 1950.4 829.9 1989.2 835.2 1998.9 C840.5 2008.5 860 2030.2 866.3 2036.1 C872.5 2042.1 889.9 2053.5 897.3 2057.9 C904.8 2062.2 933.1 2075.9 940.8 2079.6 C948.6 2083.4 969.1 2092.5 975 2095.2 C980.9 2097.8 993.7 2102.6 999.9 2106.1 C1006.1 2109.5 1028.8 2124.9 1037.2 2129.4 C1045.5 2133.9 1076.6 2147.9 1083.8 2151.1 C1090.9 2154.4 1110.2 2158.9 1108.6 2162 C1107.1 2165.1 1076.9 2178.6 1068.2 2182.2 C1059.5 2185.8 1030.9 2195.4 1021.6 2197.7 C1012.3 2200.1 984.3 2205.2 975 2205.5 C965.7 2205.8 937.7 2202.8 928.4 2200.8 C919.1 2198.8 891.1 2189 881.8 2185.3 C872.5 2181.6 844.5 2169.4 835.2 2163.5 C825.9 2157.6 796.3 2133.4 788.6 2126.3 C780.8 2119.1 763.4 2097.4 757.5 2092.1 C751.6 2086.8 732.3 2075.3 729.5 2073.4 L729.5 2054.7 L710.4 2040 L717.4 2018.7 L702 2000.1 L713.4 1978.9 L698.2 1960.1 L710.7 1939.4 L696.2 1920.1 L709.3 1900.4 L696.8 1879.7 L711.3 1860.4 L699.4 1839.5 L715 1821.2 L703.8 1799.8 L728.3 1795.1 L737.9 1773.5 L763.8 1771.5 L764.1 1747.3 L786.6 1738.6 L792.2 1717.6 L816.3 1716.4 L830.7 1705 L848.4 1721.4 L870.2 1711.1 Z" fill="none" stroke="#0a0a0a" stroke-width="3.2" stroke-linejoin="round" stroke-linecap="round"/>
<rect x="0" y="2364.7" width="2662" height="155.3" fill="#3e3e3e"/>
<rect x="0" y="2520" width="2662" height="143" fill="#202124"/>
<text x="18" y="124.5" font-size="40" fill="#fff" text-anchor="start" textLength="85" lengthAdjust="spacingAndGlyphs"  stroke="#3e3e3e" stroke-width="0.9">Ebene</text>
<text x="134" y="124.5" font-size="40" fill="#fff" text-anchor="start" textLength="120" lengthAdjust="spacingAndGlyphs"  stroke="#3e3e3e" stroke-width="0.9">Auswahl</text>
<text x="288" y="124.5" font-size="40" fill="#fff" text-anchor="start" textLength="72" lengthAdjust="spacingAndGlyphs"  stroke="#3e3e3e" stroke-width="0.9">Filter</text>
<text x="393" y="124.5" font-size="40" fill="#fff" text-anchor="start" textLength="80" lengthAdjust="spacingAndGlyphs"  stroke="#3e3e3e" stroke-width="0.9">Extras</text>
<text x="507" y="124.5" font-size="40" fill="#fff" text-anchor="start" textLength="187" lengthAdjust="spacingAndGlyphs"  stroke="#3e3e3e" stroke-width="0.9">Einstellungen</text>
<text x="730" y="124.5" font-size="40" fill="#fff" text-anchor="start" textLength="105" lengthAdjust="spacingAndGlyphs"  stroke="#3e3e3e" stroke-width="0.9">Fenster</text>
<text x="865" y="124.5" font-size="40" fill="#fff" text-anchor="start" textLength="67" lengthAdjust="spacingAndGlyphs"  stroke="#3e3e3e" stroke-width="0.9">Hilfe</text>
<rect x="67" y="128" width="16" height="2.5" fill="#fff"/>
<rect x="348" y="128" width="19" height="2.5" fill="#fff"/>
<rect x="411" y="128" width="15" height="2.5" fill="#fff"/>
<rect x="629" y="128" width="17" height="2.5" fill="#fff"/>
<rect x="730" y="128" width="16" height="2.5" fill="#fff"/>
<rect x="865" y="128" width="19" height="2.5" fill="#fff"/>
<path d="M8.4 152.2 C9.7 149.1 20.6 152.9 23.6 152.6 C26.5 152.4 41 149.3 43.8 149.1 C46.6 148.9 55.6 150.1 57.2 150.3 C58.8 150.6 62.3 150.6 62.7 152.6 C63.2 154.7 62.6 170.1 62.5 175.4 C62.4 180.7 61.9 212.7 61.6 216.1 C61.3 219.6 61 217.1 59.2 217 C57.5 216.9 43.4 215.2 40.4 215.2 C37.4 215.3 26.1 217.4 23.6 217.7 C21 217.9 10.7 220.3 9.4 217.9 C8.2 215.5 8.5 194.3 8.4 188.9 C8.3 183.4 7.2 155.2 8.4 152.2 Z" fill="none" stroke="#fff" stroke-width="2.6" stroke-linejoin="round" stroke-linecap="round"/>
<path d="M29.6 194.2 L34.3 178.1 L55.2 151.2 L62.6 152.6 L62.5 160.9 L43.8 183.5 Z" fill="#fff"/>
<path d="M20.2 205 C21.3 204.9 24 203.8 26.9 204.3 C29.8 204.8 34.4 207.5 37.7 208 C41 208.5 43.8 208.4 46.5 207.4 C49.1 206.3 51.5 203.4 53.9 201.6 C56.2 199.9 59.1 197.5 60.6 196.6 C62.1 195.7 62.6 196.3 62.9 196.3" fill="none" stroke="#fff" stroke-width="2.6" stroke-linejoin="round" stroke-linecap="round"/>
<rect x="73.5" y="151.5" width="567" height="72" fill="none" stroke="#fff" stroke-width="2.6"/>
<text x="82.6" y="205" font-size="42" fill="#fff" text-anchor="start" textLength="107.5" lengthAdjust="spacingAndGlyphs"  stroke="#3e3e3e" stroke-width="0.9">Normal</text>
<path d="M600 175 L622 174 L611 191 Z" fill="#fff"/>
<path d="M672.6 174.3 L689.7 161.1 L703.7 175.8 L689.7 194.5 Z" fill="#fff" stroke="#fff" stroke-width="1.5" stroke-linejoin="round" stroke-linecap="round"/>
<path d="M663.3 189 L670.3 181.6 L686.6 198.4 L701.4 201.2 L701.4 203.3 L677.3 204.9 Z" fill="#fff" stroke="#fff" stroke-width="1.5" stroke-linejoin="round" stroke-linecap="round"/>
<path d="M763.5 157.2 L738.7 207.7 L775.9 209.2 L763.5 157.2 L758.9 220.1" fill="none" stroke="#fff" stroke-width="2.4" stroke-linejoin="round" stroke-linecap="round"/>
<ellipse cx="759.3" cy="193.7" rx="8.4" ry="13.5" fill="none" stroke="#fff" stroke-width="2.2"/>
<path d="M840.4 163.4 C838.9 163.1 834.2 160.7 831.1 161.8 C828 163 824.1 166.6 821.8 170.4 C819.4 174.1 817.8 180.8 817.1 184.4 C816.5 188 816.7 192 817.9 192.1 C819.1 192.3 823.1 186.3 824.1 185.2" fill="none" stroke="#fff" stroke-width="2.5" stroke-linejoin="round" stroke-linecap="round"/>
<path d="M826.4 199.1 C829 199.8 838.3 203.4 842 203 C845.6 202.6 846.5 200.4 848.2 196.8 C849.9 193.2 851.5 185.5 852.1 181.3 C852.6 177 853.2 170.8 851.3 171.2 C849.3 171.6 842.2 181.5 840.4 183.6" fill="none" stroke="#fff" stroke-width="2.5" stroke-linejoin="round" stroke-linecap="round"/>
<path d="M882.4 173.5 L911.1 171.6 L898.7 191.8 Z" fill="#fff" stroke="#fff" stroke-width="1.5" stroke-linejoin="round" stroke-linecap="round"/>
<rect x="927.8" y="144.7" width="444.5" height="71" fill="#53718f"/>
<text x="1029" y="201" font-size="42" fill="#fff" text-anchor="start" textLength="239" lengthAdjust="spacingAndGlyphs"  stroke="#53718f" stroke-width="0.9">Deckkraft: 100 %</text>
<path d="M1374 148 L1407 147 L1407.5 212 L1374 213" fill="none" stroke="#fff" stroke-width="2.4" stroke-linejoin="round" stroke-linecap="round"/>
<path d="M1380.5 173 L1398.5 173 L1389.5 158.7 Z" fill="#fff"/>
<path d="M1380.5 186 L1398.5 186 L1389.5 201.6 Z" fill="#fff"/>
<path d="M1429.5 170.5 L1451.5 170.5 L1440.5 189.5 Z" fill="#fff"/>
<rect x="1471" y="143.4" width="292" height="69" fill="#53718f"/>
<text x="1584.6" y="199.5" font-size="42" fill="#fff" text-anchor="start" textLength="177" lengthAdjust="spacingAndGlyphs"  stroke="#53718f" stroke-width="0.9">Größe: 14,16</text>
<text x="1775.6" y="199.5" font-size="42" fill="#fff" text-anchor="start" textLength="32.5" lengthAdjust="spacingAndGlyphs"  stroke="#3e3e3e" stroke-width="0.9">px</text>
<path d="M1920.5 144 L1955 143 L1955.5 215 L1920.5 216" fill="none" stroke="#fff" stroke-width="2.4" stroke-linejoin="round" stroke-linecap="round"/>
<path d="M1927.8 171.8 L1945.8 171.8 L1936.8 156 Z" fill="#fff"/>
<path d="M1927.8 186.2 L1945.8 186.2 L1936.8 203.5 Z" fill="#fff"/>
<path d="M1973 203 L1990 153 L1993 202 Z" fill="#fff"/>
<path d="M1997 152 L2001 203 L2018 203 Z" fill="#fff"/>
<path d="M2039.6 169 L2059.6 169 L2049.6 184 Z" fill="#fff"/>
<path d="M2088 149 L2132 172 L2089 174 Z" fill="#fff"/>
<path d="M2089 178 L2132 179 L2090 204 Z" fill="#fff"/>
<path d="M2155 169 L2175 169 L2165 184 Z" fill="#fff"/>
<path d="M2204 186 L2232 185" fill="none" stroke="#fff" stroke-width="2.5" stroke-linejoin="round" stroke-linecap="round"/>
<path d="M2217 155 L2218 186" fill="none" stroke="#fff" stroke-width="2.5" stroke-linejoin="round" stroke-linecap="round"/>
<path d="M2218 166 L2247 164" fill="none" stroke="#fff" stroke-width="2.5" stroke-linejoin="round" stroke-linecap="round"/>
<path d="M2232 165 L2232 204" fill="none" stroke="#fff" stroke-width="2.5" stroke-linejoin="round" stroke-linecap="round"/>
<text x="1107.7" y="292" font-size="40" fill="#fff" text-anchor="start" textLength="299" lengthAdjust="spacingAndGlyphs"  stroke="#3e3e3e" stroke-width="0.9">fdrf.kra (226,8 MiB)*</text>
<text x="446" y="2487.5" font-size="40" fill="#fff" text-anchor="start" textLength="902" lengthAdjust="spacingAndGlyphs"  stroke="#3e3e3e" stroke-width="0.9">RGB/Alpha (8-bit Ganzzahl pro Kanal)  sRGB-elle-V2-srgbtrc.icc</text>
<text x="2313" y="2480.5" font-size="40" fill="#fff" text-anchor="start" textLength="372" lengthAdjust="spacingAndGlyphs"  stroke="#3e3e3e" stroke-width="0.9">3.000 x 4.000 (226,8 MiB)</text>
<rect x="2401" y="2485" width="19" height="2.5" fill="#fff"/>
<ellipse cx="73.5" cy="2589.5" rx="25" ry="31" fill="none" stroke="#fff" stroke-width="3" transform="rotate(-12 73.5 2589.5)"/>
<path d="M52 2566 C54.3 2567.5 61.7 2570.7 66 2575 C70.3 2579.3 75.3 2585.8 78 2592 C80.7 2598.2 81.3 2608.7 82 2612" fill="none" stroke="#fff" stroke-width="3" stroke-linejoin="round" stroke-linecap="round"/>
<path d="M60 2563 C62.7 2564.8 71.8 2569.2 76 2574 C80.2 2578.8 83.7 2585.7 85 2592 C86.3 2598.3 84.2 2608.7 84 2612" fill="none" stroke="#fff" stroke-width="3" stroke-linejoin="round" stroke-linecap="round"/>
<path d="M80 2596 L86 2598 L84 2618 L79 2614 Z" fill="#fff"/>
<text x="168" y="2585" font-size="29" fill="#fff" text-anchor="start" textLength="44" lengthAdjust="spacingAndGlyphs" >XP</text>
<text x="167.5" y="2614" font-size="28" fill="#fff" text-anchor="start" textLength="46" lengthAdjust="spacingAndGlyphs" >pen</text>
<path d="M316.4 2560.7 C317.8 2560 320.3 2552.2 321.6 2552.1 C323 2552 331.9 2557.9 332.4 2559.3 C333 2560.7 328.5 2567.2 328.6 2568.9 C328.7 2570.6 332.8 2578.8 334 2579.8 C335.2 2580.8 342.3 2579.5 343.1 2580.7 C343.8 2582 343.8 2594 343.1 2595.3 C342.3 2596.5 335.2 2595.2 334 2596.2 C332.8 2597.2 328.7 2605.4 328.6 2607.1 C328.5 2608.8 333 2615.3 332.4 2616.7 C331.9 2618.1 323 2624 321.6 2623.9 C320.3 2623.8 317.8 2616 316.4 2615.3 C315.1 2614.6 306.9 2614.6 305.6 2615.3 C304.2 2616 301.7 2623.8 300.4 2623.9 C299 2624 290.1 2618.1 289.6 2616.7 C289 2615.3 293.5 2608.8 293.4 2607.1 C293.3 2605.4 289.2 2597.2 288 2596.2 C286.8 2595.2 279.7 2596.5 278.9 2595.3 C278.2 2594 278.2 2582 278.9 2580.7 C279.7 2579.5 286.8 2580.8 288 2579.8 C289.2 2578.8 293.3 2570.6 293.4 2568.9 C293.5 2567.2 289 2560.7 289.6 2559.3 C290.1 2557.9 299 2552 300.4 2552.1 C301.7 2552.2 304.2 2560 305.6 2560.7 C306.9 2561.4 315.1 2561.4 316.4 2560.7 Z" fill="none" stroke="#fff" stroke-width="3" stroke-linejoin="round" stroke-linecap="round"/>
<ellipse cx="311" cy="2588" rx="14" ry="17" fill="none" stroke="#fff" stroke-width="3"/>
<path d="M399 2553 C400.9 2551.1 435.1 2549 437 2551 C438.9 2553 439.9 2591.1 438 2593 C436.1 2594.9 399.9 2592 398 2590 C396.1 2588 397.1 2554.9 399 2553 Z" fill="#202124" stroke="#fff" stroke-width="3" stroke-linejoin="round" stroke-linecap="round"/>
<path d="M439 2568 L459 2568 L459 2620 L407 2620 L406 2592" fill="none" stroke="#fff" stroke-width="3" stroke-linejoin="round" stroke-linecap="round"/>
<circle cx="410" cy="2565" r="2.6" fill="#fff"/>
<circle cx="418" cy="2565" r="2.6" fill="#fff"/>
<circle cx="426" cy="2565" r="2.6" fill="#fff"/>
<path d="M407 2576 L429 2576" fill="none" stroke="#fff" stroke-width="3" stroke-linejoin="round" stroke-linecap="round"/>
<path d="M59 2646.5 C62.8 2646.5 75.3 2645.8 82 2646.5 C88.7 2647.2 96.2 2650.2 99 2651" fill="none" stroke="#fff" stroke-width="3" stroke-linejoin="round" stroke-linecap="round"/>
<path d="M187 2648 C187.5 2648.4 188.3 2650.1 190 2650.5 C191.7 2650.9 195.3 2650.9 197 2650.5 C198.7 2650.1 199.5 2648.4 200 2648" fill="none" stroke="#fff" stroke-width="3" stroke-linejoin="round" stroke-linecap="round"/>
<path d="M307 2643 L320 2642" fill="none" stroke="#fff" stroke-width="3" stroke-linejoin="round" stroke-linecap="round"/>
<path d="M422 2643 L436 2643" fill="none" stroke="#fff" stroke-width="3" stroke-linejoin="round" stroke-linecap="round"/>
<path d="M2549 2609 L2563 2592 L2579 2607" fill="none" stroke="#fff" stroke-width="3.2" stroke-linejoin="round" stroke-linecap="round"/>
<path d="M2631 2571 L2640 2571 L2654 2558 L2655 2604 L2640 2591 L2632 2591 Z" fill="none" stroke="#fff" stroke-width="3" stroke-linejoin="round" stroke-linecap="round"/>
</svg>
</body></html>
